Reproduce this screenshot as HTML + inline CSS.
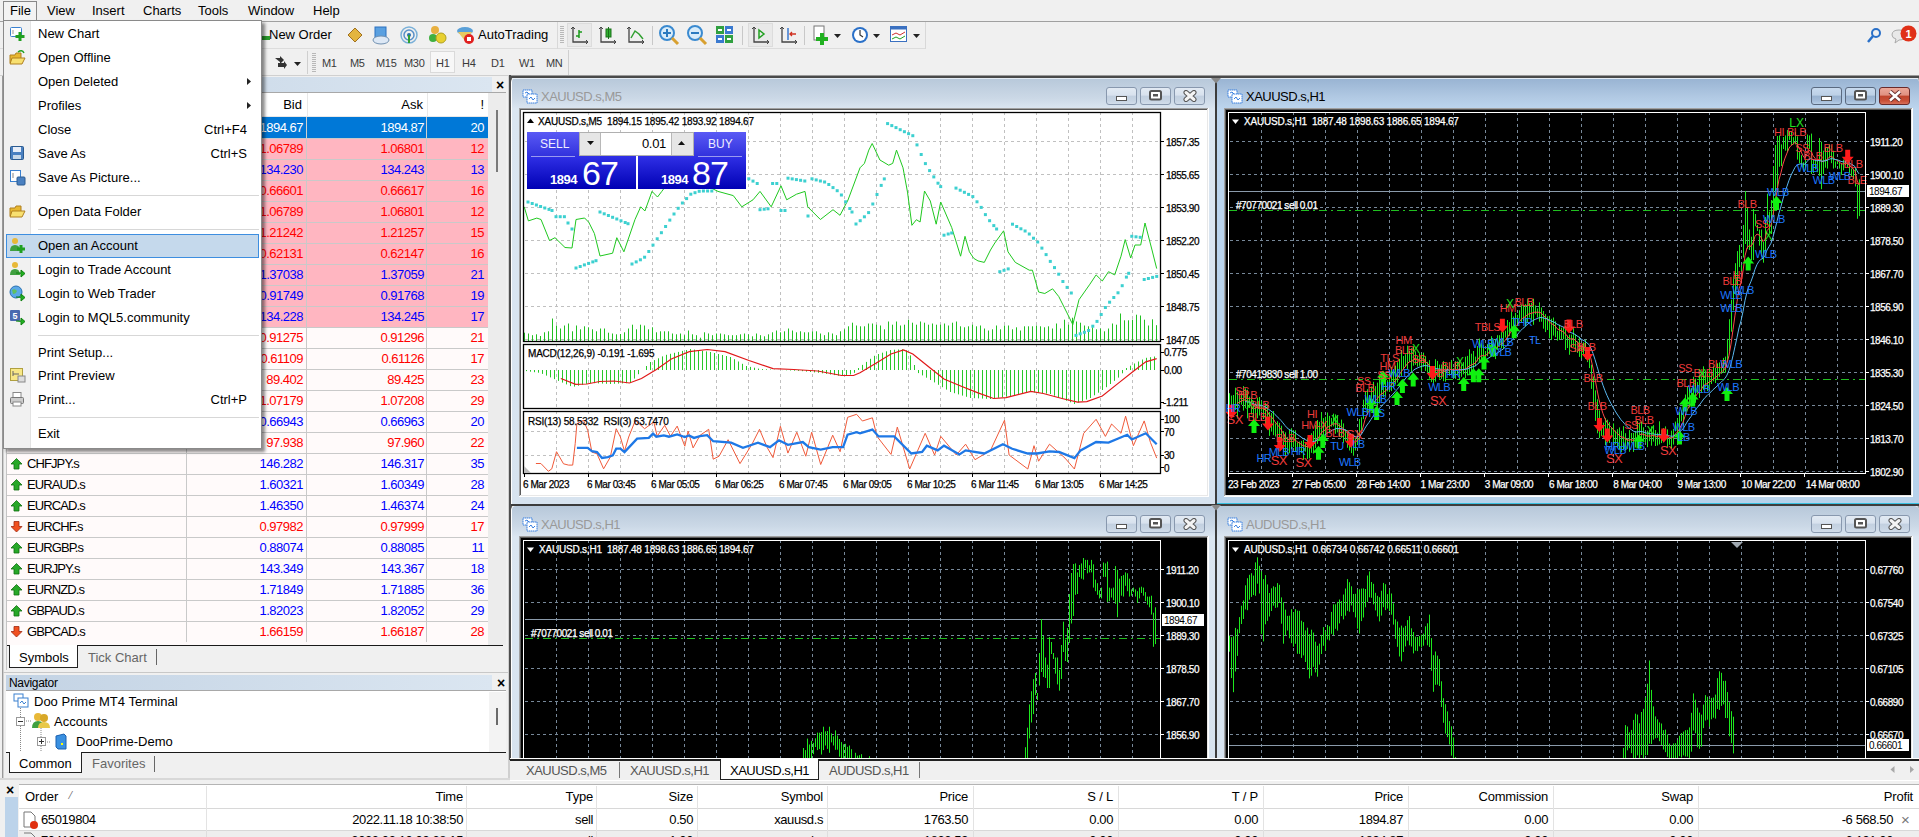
<!DOCTYPE html>
<html><head><meta charset="utf-8">
<style>
*{box-sizing:border-box}
body{margin:0;width:1919px;height:837px;position:relative;overflow:hidden;background:#f0f0f0;font-family:"Liberation Sans",sans-serif;font-size:13px;color:#000}
.a{position:absolute}
.t{position:absolute;white-space:nowrap;line-height:1}
svg{position:absolute;overflow:hidden}
.mw{letter-spacing:-0.5px}
.sy{letter-spacing:-0.9px}
.ct{font-size:11px;letter-spacing:-0.3px}
</style></head><body>
<div class="a" style="left:0px;top:0px;width:1919px;height:22px;background:#f0f0f0"></div>
<div class="a" style="left:0px;top:21px;width:1919px;height:1px;background:#a0a0a0"></div>
<div class="a" style="left:0px;top:22px;width:1919px;height:1px;background:#fff"></div>
<div class="a" style="left:3px;top:1px;width:34px;height:21px;border:1px solid #888;border-bottom:none;background:#f3f3f3"></div>
<div class="t" style="left:10px;top:4px;">File</div>
<div class="t" style="left:47px;top:4px;">View</div>
<div class="t" style="left:92px;top:4px;">Insert</div>
<div class="t" style="left:143px;top:4px;">Charts</div>
<div class="t" style="left:198px;top:4px;">Tools</div>
<div class="t" style="left:248px;top:4px;">Window</div>
<div class="t" style="left:313px;top:4px;">Help</div>
<div class="a" style="left:0px;top:22px;width:1919px;height:54px;background:#f0f0f0"></div>
<div class="a" style="left:0px;top:48px;width:926px;height:1px;background:#dcdcdc"></div>
<div class="a" style="left:0px;top:75px;width:1919px;height:1px;background:#d0d0d0"></div>
<div class="t" style="left:269px;top:28px;">New Order</div>
<div class="t" style="left:478px;top:28px;">AutoTrading</div>
<svg style="left:262px;top:27px;" width="10" height="14" viewBox="0 0 10 14"><rect x="0" y="9" width="8" height="4" fill="#2a9a2a"/></svg>
<svg style="left:346px;top:26px;" width="18" height="18" viewBox="0 0 18 18"><path d="M2 9 L9 2 L16 9 L9 16 Z" fill="#e3b53f" stroke="#a07020" stroke-width="1"/></svg>
<svg style="left:372px;top:25px;" width="18" height="20" viewBox="0 0 18 20"><rect x="3" y="2" width="11" height="11" fill="#5aa0e0" stroke="#2a70c0"/><ellipse cx="9" cy="15" rx="8" ry="4" fill="#dde8f5" stroke="#7090b0"/></svg>
<svg style="left:400px;top:26px;" width="18" height="18" viewBox="0 0 18 18"><circle cx="9" cy="9" r="8" fill="none" stroke="#7ab0d8" stroke-width="1.5"/><circle cx="9" cy="9" r="5" fill="none" stroke="#5a90c8" stroke-width="1.5"/><circle cx="9" cy="9" r="2" fill="#2a70b0"/><path d="M9 9 L9 17" stroke="#30a030" stroke-width="2"/></svg>
<svg style="left:428px;top:25px;" width="20" height="20" viewBox="0 0 20 20"><circle cx="7" cy="5" r="4" fill="#e8b040"/><circle cx="5" cy="13" r="4" fill="#40b040"/><circle cx="13" cy="13" r="5" fill="#e8d030" stroke="#b0a020"/></svg>
<svg style="left:456px;top:25px;" width="20" height="20" viewBox="0 0 20 20"><ellipse cx="9" cy="6" rx="8" ry="4" fill="#5aa0d8"/><path d="M2 7 L9 16 L16 7 Z" fill="#e8c860"/><circle cx="13" cy="14" r="5" fill="#e02020"/><rect x="11" y="12" width="4" height="4" fill="#fff"/></svg>
<div class="a" style="left:557px;top:22px;width:369px;height:27px;border-left:1px solid #d8d8d8;border-right:1px solid #d8d8d8"></div>
<svg style="left:560px;top:26px;" width="5" height="18" viewBox="0 0 5 18"><rect x="0" y="0" width="4" height="1" fill="#b8b8b8"/><rect x="0" y="2" width="4" height="1" fill="#b8b8b8"/><rect x="0" y="4" width="4" height="1" fill="#b8b8b8"/><rect x="0" y="6" width="4" height="1" fill="#b8b8b8"/><rect x="0" y="8" width="4" height="1" fill="#b8b8b8"/><rect x="0" y="10" width="4" height="1" fill="#b8b8b8"/><rect x="0" y="12" width="4" height="1" fill="#b8b8b8"/><rect x="0" y="14" width="4" height="1" fill="#b8b8b8"/><rect x="0" y="16" width="4" height="1" fill="#b8b8b8"/></svg>
<div class="a" style="left:567px;top:23px;width:25px;height:24px;background:#e9e9e9;border:1px solid #dcdcdc"></div>
<div class="a" style="left:748px;top:23px;width:25px;height:24px;background:#e9e9e9;border:1px solid #dcdcdc"></div>
<svg style="left:570px;top:25px;" width="20" height="20" viewBox="0 0 20 20"><path d="M3 2 L3 17 L18 17" stroke="#444" stroke-width="1.3" fill="none"/><path d="M1 4 L3 2 L5 4 M16 15 L18 17 L16 19" stroke="#444" stroke-width="1" fill="none"/><path d="M9 13 L9 5 M9 7 L12 7 M6 11 L9 11" stroke="#1a9a1a" stroke-width="1.5" fill="none"/></svg>
<svg style="left:598px;top:25px;" width="20" height="20" viewBox="0 0 20 20"><path d="M3 2 L3 17 L18 17" stroke="#444" stroke-width="1.3" fill="none"/><path d="M1 4 L3 2 L5 4 M16 15 L18 17 L16 19" stroke="#444" stroke-width="1" fill="none"/><rect x="8" y="4" width="5" height="8" fill="#30b030" stroke="#1a701a"/><path d="M10.5 2 L10.5 14" stroke="#1a701a"/></svg>
<svg style="left:626px;top:25px;" width="20" height="20" viewBox="0 0 20 20"><path d="M3 2 L3 17 L18 17" stroke="#444" stroke-width="1.3" fill="none"/><path d="M1 4 L3 2 L5 4 M16 15 L18 17 L16 19" stroke="#444" stroke-width="1" fill="none"/><path d="M5 13 L9 6 L13 9 L17 14" stroke="#30a030" stroke-width="1.5" fill="none"/></svg>
<div class="a" style="left:652px;top:26px;width:1px;height:19px;background:#c8c8c8"></div>
<svg style="left:658px;top:24px;" width="22" height="22" viewBox="0 0 22 22"><circle cx="9" cy="9" r="7" fill="#d8ecfa" stroke="#3a8ad0" stroke-width="2"/><path d="M9 5 L9 13 M5 9 L13 9" stroke="#2a7ac0" stroke-width="2"/><path d="M14 14 L20 20" stroke="#d8a030" stroke-width="3"/></svg>
<svg style="left:686px;top:24px;" width="22" height="22" viewBox="0 0 22 22"><circle cx="9" cy="9" r="7" fill="#d8ecfa" stroke="#3a8ad0" stroke-width="2"/><path d="M5 9 L13 9" stroke="#2a7ac0" stroke-width="2"/><path d="M14 14 L20 20" stroke="#d8a030" stroke-width="3"/></svg>
<svg style="left:716px;top:26px;" width="18" height="18" viewBox="0 0 18 18"><rect x="0" y="0" width="8" height="8" fill="#30a040"/><rect x="9" y="0" width="8" height="8" fill="#3a7ad0"/><rect x="0" y="9" width="8" height="8" fill="#3a7ad0"/><rect x="9" y="9" width="8" height="8" fill="#30a040"/><rect x="2" y="3" width="4" height="2" fill="#fff"/><rect x="11" y="3" width="4" height="2" fill="#fff"/><rect x="2" y="12" width="4" height="2" fill="#fff"/><rect x="11" y="12" width="4" height="2" fill="#fff"/></svg>
<div class="a" style="left:742px;top:26px;width:1px;height:19px;background:#c8c8c8"></div>
<svg style="left:751px;top:25px;" width="20" height="20" viewBox="0 0 20 20"><path d="M3 2 L3 17 L18 17" stroke="#444" stroke-width="1.3" fill="none"/><path d="M1 4 L3 2 L5 4 M16 15 L18 17 L16 19" stroke="#444" stroke-width="1" fill="none"/><path d="M8 5 L13 9 L8 13 Z" fill="none" stroke="#20a020" stroke-width="1.5"/></svg>
<svg style="left:779px;top:25px;" width="20" height="20" viewBox="0 0 20 20"><path d="M3 2 L3 17 L18 17" stroke="#444" stroke-width="1.3" fill="none"/><path d="M1 4 L3 2 L5 4 M16 15 L18 17 L16 19" stroke="#444" stroke-width="1" fill="none"/><path d="M9 3 L9 15" stroke="#3a7ad0" stroke-width="1.5"/><path d="M17 9 L11 9 M13 7 L11 9 L13 11" stroke="#d03020" stroke-width="1.3" fill="none"/></svg>
<div class="a" style="left:804px;top:26px;width:1px;height:19px;background:#c8c8c8"></div>
<svg style="left:812px;top:25px;" width="20" height="22" viewBox="0 0 20 22"><rect x="2" y="1" width="10" height="14" fill="#fff" stroke="#777"/><path d="M10 8 L10 20 M4 14 L16 14" stroke="#20b020" stroke-width="4"/></svg>
<svg style="left:834px;top:34px;" width="8" height="5" viewBox="0 0 8 5"><path d="M0 0 L7 0 L3.5 4 Z" fill="#222"/></svg>
<svg style="left:851px;top:26px;" width="18" height="18" viewBox="0 0 18 18"><circle cx="9" cy="9" r="8" fill="#2a70c8"/><circle cx="9" cy="9" r="6" fill="#fff"/><path d="M9 4 L9 9 L12 11" stroke="#333" stroke-width="1.2" fill="none"/></svg>
<svg style="left:873px;top:34px;" width="8" height="5" viewBox="0 0 8 5"><path d="M0 0 L7 0 L3.5 4 Z" fill="#222"/></svg>
<svg style="left:890px;top:26px;" width="18" height="17" viewBox="0 0 18 17"><rect x="0.5" y="0.5" width="16" height="15" fill="#fff" stroke="#3a70c0"/><rect x="0.5" y="0.5" width="16" height="3" fill="#3a70c0"/><path d="M2 9 L6 7 L10 9 L15 6" stroke="#d03030" fill="none"/><path d="M2 13 L6 11 L10 13 L15 10" stroke="#20a020" fill="none"/></svg>
<svg style="left:913px;top:34px;" width="8" height="5" viewBox="0 0 8 5"><path d="M0 0 L7 0 L3.5 4 Z" fill="#222"/></svg>
<div class="a" style="left:307px;top:51px;width:1px;height:23px;background:#cfcfcf"></div>
<svg style="left:312px;top:53px;" width="5" height="20" viewBox="0 0 5 20"><rect x="0" y="0" width="4" height="1" fill="#b8b8b8"/><rect x="0" y="2" width="4" height="1" fill="#b8b8b8"/><rect x="0" y="4" width="4" height="1" fill="#b8b8b8"/><rect x="0" y="6" width="4" height="1" fill="#b8b8b8"/><rect x="0" y="8" width="4" height="1" fill="#b8b8b8"/><rect x="0" y="10" width="4" height="1" fill="#b8b8b8"/><rect x="0" y="12" width="4" height="1" fill="#b8b8b8"/><rect x="0" y="14" width="4" height="1" fill="#b8b8b8"/><rect x="0" y="16" width="4" height="1" fill="#b8b8b8"/><rect x="0" y="18" width="4" height="1" fill="#b8b8b8"/></svg>
<div class="a" style="left:568px;top:50px;width:1px;height:25px;background:#cfcfcf"></div>
<svg style="left:273px;top:55px;" width="18" height="16" viewBox="0 0 18 16"><path d="M2 3 L7 3 L7 1 L11 5 L7 9 L7 7 Z" fill="#333"/><path d="M8 10 L14 10 L14 8 L17 12 L14 16 L14 14 L8 14Z" fill="#333" transform="translate(-3,-2)"/></svg>
<svg style="left:294px;top:62px;" width="8" height="5" viewBox="0 0 8 5"><path d="M0 0 L7 0 L3.5 4 Z" fill="#222"/></svg>
<div class="a" style="left:430px;top:51px;width:25px;height:22px;background:#f7f7f7;border:1px solid #dadada"></div>
<div class="t" style="left:322px;top:58px;font-size:11px;color:#3a3a3a;letter-spacing:-0.3px">M1</div>
<div class="t" style="left:350px;top:58px;font-size:11px;color:#3a3a3a;letter-spacing:-0.3px">M5</div>
<div class="t" style="left:376px;top:58px;font-size:11px;color:#3a3a3a;letter-spacing:-0.3px">M15</div>
<div class="t" style="left:404px;top:58px;font-size:11px;color:#3a3a3a;letter-spacing:-0.3px">M30</div>
<div class="t" style="left:436px;top:58px;font-size:11px;color:#3a3a3a;letter-spacing:-0.3px">H1</div>
<div class="t" style="left:462px;top:58px;font-size:11px;color:#3a3a3a;letter-spacing:-0.3px">H4</div>
<div class="t" style="left:491px;top:58px;font-size:11px;color:#3a3a3a;letter-spacing:-0.3px">D1</div>
<div class="t" style="left:519px;top:58px;font-size:11px;color:#3a3a3a;letter-spacing:-0.3px">W1</div>
<div class="t" style="left:546px;top:58px;font-size:11px;color:#3a3a3a;letter-spacing:-0.3px">MN</div>
<svg style="left:1867px;top:27px;" width="16" height="16" viewBox="0 0 16 16"><circle cx="9" cy="6" r="4" fill="none" stroke="#2a70c8" stroke-width="2"/><path d="M6 9 L1 15" stroke="#2a70c8" stroke-width="2.5"/></svg>
<svg style="left:1890px;top:25px;" width="29" height="22" viewBox="0 0 29 22"><path d="M2 10 Q2 5 9 5 Q16 5 16 10 Q16 15 9 15 L5 18 L6 14 Q2 13 2 10Z" fill="#e8e8e8" stroke="#aaa"/><circle cx="18.5" cy="8.5" r="8" fill="#e03018"/><text x="18.5" y="12.5" font-size="11" fill="#fff" text-anchor="middle" font-family="Liberation Sans" font-weight="bold">1</text></svg>
<div class="a" style="left:0px;top:76px;width:510px;height:704px;background:#f0f0f0"></div>
<div class="a" style="left:508px;top:76px;width:2px;height:704px;background:#cfcfcf"></div>
<div class="a" style="left:2px;top:76px;width:1px;height:704px;background:#9a9a9a"></div>
<div class="a" style="left:3px;top:76px;width:1px;height:704px;background:#cfcfcf"></div>
<div class="a" style="left:6px;top:77px;width:486px;height:15px;background:linear-gradient(90deg,#c3d3e4,#dbe6f1)"></div>
<div class="a" style="left:6px;top:92px;width:500px;height:1px;background:#a8a8a8"></div>
<div class="t" style="left:496px;top:78px;font-size:14px;font-weight:bold">&#215;</div>
<div class="a" style="left:6px;top:93px;width:482px;height:24px;background:#fff"></div>
<div class="a" style="left:6px;top:116px;width:482px;height:1px;background:#e8e8e8"></div>
<div class="t" style="right:1617px;top:98px;">Bid</div>
<div class="t" style="right:1496px;top:98px;">Ask</div>
<div class="t" style="right:1435px;top:98px;">!</div>
<div class="a" style="left:186px;top:93px;width:1px;height:23px;background:#e8e8e8"></div>
<div class="a" style="left:307px;top:93px;width:1px;height:23px;background:#e8e8e8"></div>
<div class="a" style="left:427px;top:93px;width:1px;height:23px;background:#e8e8e8"></div>
<div class="a" style="left:6px;top:117px;width:482px;height:528px;background:#fffafa"></div>
<div class="a" style="left:6px;top:117px;width:482px;height:21px;background:#0078d7"></div>
<div class="a" style="left:306px;top:117px;width:1px;height:21px;background:#d0d0d0"></div>
<div class="a" style="left:426px;top:117px;width:1px;height:21px;background:#d0d0d0"></div>
<div class="t" style="right:1616px;top:121px;color:#fff;font-size:13px;letter-spacing:-0.5px">1894.67</div>
<div class="t" style="right:1495px;top:121px;color:#fff;font-size:13px;letter-spacing:-0.5px">1894.87</div>
<div class="t" style="right:1435px;top:121px;color:#fff;font-size:13px;letter-spacing:-0.5px">20</div>
<div class="t" style="left:27px;top:121px;letter-spacing:-0.9px">XAUUSD.s</div>
<svg style="left:11px;top:122px;" width="12" height="12" viewBox="0 0 12 12"><path d="M5.5 11 L11 5.5 L8 5.5 L8 0.5 L3 0.5 L3 5.5 L0 5.5 Z" fill="#f05020" stroke="#a02810" stroke-width="0.8"/></svg>
<div class="a" style="left:6px;top:138px;width:482px;height:21px;background:#ffb6c1"></div>
<div class="a" style="left:6px;top:138px;width:482px;height:1px;background:#c9c9c9"></div>
<div class="a" style="left:186px;top:138px;width:1px;height:21px;background:#c9c9c9"></div>
<div class="a" style="left:306px;top:138px;width:1px;height:21px;background:#c9c9c9"></div>
<div class="a" style="left:426px;top:138px;width:1px;height:21px;background:#c9c9c9"></div>
<div class="t" style="right:1616px;top:142px;color:#ff0000;font-size:13px;letter-spacing:-0.5px">1.06789</div>
<div class="t" style="right:1495px;top:142px;color:#ff0000;font-size:13px;letter-spacing:-0.5px">1.06801</div>
<div class="t" style="right:1435px;top:142px;color:#ff0000;font-size:13px;letter-spacing:-0.5px">12</div>
<div class="t" style="left:27px;top:142px;letter-spacing:-0.9px">EURUSD.s</div>
<svg style="left:11px;top:143px;" width="12" height="12" viewBox="0 0 12 12"><path d="M5.5 11 L11 5.5 L8 5.5 L8 0.5 L3 0.5 L3 5.5 L0 5.5 Z" fill="#f05020" stroke="#a02810" stroke-width="0.8"/></svg>
<div class="a" style="left:6px;top:159px;width:482px;height:21px;background:#ffb6c1"></div>
<div class="a" style="left:6px;top:159px;width:482px;height:1px;background:#c9c9c9"></div>
<div class="a" style="left:186px;top:159px;width:1px;height:21px;background:#c9c9c9"></div>
<div class="a" style="left:306px;top:159px;width:1px;height:21px;background:#c9c9c9"></div>
<div class="a" style="left:426px;top:159px;width:1px;height:21px;background:#c9c9c9"></div>
<div class="t" style="right:1616px;top:163px;color:#0000ff;font-size:13px;letter-spacing:-0.5px">134.230</div>
<div class="t" style="right:1495px;top:163px;color:#0000ff;font-size:13px;letter-spacing:-0.5px">134.243</div>
<div class="t" style="right:1435px;top:163px;color:#0000ff;font-size:13px;letter-spacing:-0.5px">13</div>
<div class="t" style="left:27px;top:163px;letter-spacing:-0.9px">USDJPY.s</div>
<svg style="left:11px;top:164px;" width="12" height="12" viewBox="0 0 12 12"><path d="M5.5 0.5 L11 6 L8 6 L8 11 L3 11 L3 6 L0 6 Z" fill="#28a828" stroke="#107010" stroke-width="0.8"/></svg>
<div class="a" style="left:6px;top:180px;width:482px;height:21px;background:#ffb6c1"></div>
<div class="a" style="left:6px;top:180px;width:482px;height:1px;background:#c9c9c9"></div>
<div class="a" style="left:186px;top:180px;width:1px;height:21px;background:#c9c9c9"></div>
<div class="a" style="left:306px;top:180px;width:1px;height:21px;background:#c9c9c9"></div>
<div class="a" style="left:426px;top:180px;width:1px;height:21px;background:#c9c9c9"></div>
<div class="t" style="right:1616px;top:184px;color:#ff0000;font-size:13px;letter-spacing:-0.5px">0.66601</div>
<div class="t" style="right:1495px;top:184px;color:#ff0000;font-size:13px;letter-spacing:-0.5px">0.66617</div>
<div class="t" style="right:1435px;top:184px;color:#ff0000;font-size:13px;letter-spacing:-0.5px">16</div>
<div class="t" style="left:27px;top:184px;letter-spacing:-0.9px">AUDUSD.s</div>
<svg style="left:11px;top:185px;" width="12" height="12" viewBox="0 0 12 12"><path d="M5.5 11 L11 5.5 L8 5.5 L8 0.5 L3 0.5 L3 5.5 L0 5.5 Z" fill="#f05020" stroke="#a02810" stroke-width="0.8"/></svg>
<div class="a" style="left:6px;top:201px;width:482px;height:21px;background:#ffb6c1"></div>
<div class="a" style="left:6px;top:201px;width:482px;height:1px;background:#c9c9c9"></div>
<div class="a" style="left:186px;top:201px;width:1px;height:21px;background:#c9c9c9"></div>
<div class="a" style="left:306px;top:201px;width:1px;height:21px;background:#c9c9c9"></div>
<div class="a" style="left:426px;top:201px;width:1px;height:21px;background:#c9c9c9"></div>
<div class="t" style="right:1616px;top:205px;color:#ff0000;font-size:13px;letter-spacing:-0.5px">1.06789</div>
<div class="t" style="right:1495px;top:205px;color:#ff0000;font-size:13px;letter-spacing:-0.5px">1.06801</div>
<div class="t" style="right:1435px;top:205px;color:#ff0000;font-size:13px;letter-spacing:-0.5px">12</div>
<div class="t" style="left:27px;top:205px;letter-spacing:-0.9px">EURUSD</div>
<svg style="left:11px;top:206px;" width="12" height="12" viewBox="0 0 12 12"><path d="M5.5 11 L11 5.5 L8 5.5 L8 0.5 L3 0.5 L3 5.5 L0 5.5 Z" fill="#f05020" stroke="#a02810" stroke-width="0.8"/></svg>
<div class="a" style="left:6px;top:222px;width:482px;height:21px;background:#ffb6c1"></div>
<div class="a" style="left:6px;top:222px;width:482px;height:1px;background:#c9c9c9"></div>
<div class="a" style="left:186px;top:222px;width:1px;height:21px;background:#c9c9c9"></div>
<div class="a" style="left:306px;top:222px;width:1px;height:21px;background:#c9c9c9"></div>
<div class="a" style="left:426px;top:222px;width:1px;height:21px;background:#c9c9c9"></div>
<div class="t" style="right:1616px;top:226px;color:#ff0000;font-size:13px;letter-spacing:-0.5px">1.21242</div>
<div class="t" style="right:1495px;top:226px;color:#ff0000;font-size:13px;letter-spacing:-0.5px">1.21257</div>
<div class="t" style="right:1435px;top:226px;color:#ff0000;font-size:13px;letter-spacing:-0.5px">15</div>
<div class="t" style="left:27px;top:226px;letter-spacing:-0.9px">GBPUSD.s</div>
<svg style="left:11px;top:227px;" width="12" height="12" viewBox="0 0 12 12"><path d="M5.5 11 L11 5.5 L8 5.5 L8 0.5 L3 0.5 L3 5.5 L0 5.5 Z" fill="#f05020" stroke="#a02810" stroke-width="0.8"/></svg>
<div class="a" style="left:6px;top:243px;width:482px;height:21px;background:#ffb6c1"></div>
<div class="a" style="left:6px;top:243px;width:482px;height:1px;background:#c9c9c9"></div>
<div class="a" style="left:186px;top:243px;width:1px;height:21px;background:#c9c9c9"></div>
<div class="a" style="left:306px;top:243px;width:1px;height:21px;background:#c9c9c9"></div>
<div class="a" style="left:426px;top:243px;width:1px;height:21px;background:#c9c9c9"></div>
<div class="t" style="right:1616px;top:247px;color:#ff0000;font-size:13px;letter-spacing:-0.5px">0.62131</div>
<div class="t" style="right:1495px;top:247px;color:#ff0000;font-size:13px;letter-spacing:-0.5px">0.62147</div>
<div class="t" style="right:1435px;top:247px;color:#ff0000;font-size:13px;letter-spacing:-0.5px">16</div>
<div class="t" style="left:27px;top:247px;letter-spacing:-0.9px">NZDUSD.s</div>
<svg style="left:11px;top:248px;" width="12" height="12" viewBox="0 0 12 12"><path d="M5.5 11 L11 5.5 L8 5.5 L8 0.5 L3 0.5 L3 5.5 L0 5.5 Z" fill="#f05020" stroke="#a02810" stroke-width="0.8"/></svg>
<div class="a" style="left:6px;top:264px;width:482px;height:21px;background:#ffb6c1"></div>
<div class="a" style="left:6px;top:264px;width:482px;height:1px;background:#c9c9c9"></div>
<div class="a" style="left:186px;top:264px;width:1px;height:21px;background:#c9c9c9"></div>
<div class="a" style="left:306px;top:264px;width:1px;height:21px;background:#c9c9c9"></div>
<div class="a" style="left:426px;top:264px;width:1px;height:21px;background:#c9c9c9"></div>
<div class="t" style="right:1616px;top:268px;color:#0000ff;font-size:13px;letter-spacing:-0.5px">1.37038</div>
<div class="t" style="right:1495px;top:268px;color:#0000ff;font-size:13px;letter-spacing:-0.5px">1.37059</div>
<div class="t" style="right:1435px;top:268px;color:#0000ff;font-size:13px;letter-spacing:-0.5px">21</div>
<div class="t" style="left:27px;top:268px;letter-spacing:-0.9px">USDCAD.s</div>
<svg style="left:11px;top:269px;" width="12" height="12" viewBox="0 0 12 12"><path d="M5.5 0.5 L11 6 L8 6 L8 11 L3 11 L3 6 L0 6 Z" fill="#28a828" stroke="#107010" stroke-width="0.8"/></svg>
<div class="a" style="left:6px;top:285px;width:482px;height:21px;background:#ffb6c1"></div>
<div class="a" style="left:6px;top:285px;width:482px;height:1px;background:#c9c9c9"></div>
<div class="a" style="left:186px;top:285px;width:1px;height:21px;background:#c9c9c9"></div>
<div class="a" style="left:306px;top:285px;width:1px;height:21px;background:#c9c9c9"></div>
<div class="a" style="left:426px;top:285px;width:1px;height:21px;background:#c9c9c9"></div>
<div class="t" style="right:1616px;top:289px;color:#0000ff;font-size:13px;letter-spacing:-0.5px">0.91749</div>
<div class="t" style="right:1495px;top:289px;color:#0000ff;font-size:13px;letter-spacing:-0.5px">0.91768</div>
<div class="t" style="right:1435px;top:289px;color:#0000ff;font-size:13px;letter-spacing:-0.5px">19</div>
<div class="t" style="left:27px;top:289px;letter-spacing:-0.9px">USDCHF.s</div>
<svg style="left:11px;top:290px;" width="12" height="12" viewBox="0 0 12 12"><path d="M5.5 0.5 L11 6 L8 6 L8 11 L3 11 L3 6 L0 6 Z" fill="#28a828" stroke="#107010" stroke-width="0.8"/></svg>
<div class="a" style="left:6px;top:306px;width:482px;height:21px;background:#ffb6c1"></div>
<div class="a" style="left:6px;top:306px;width:482px;height:1px;background:#c9c9c9"></div>
<div class="a" style="left:186px;top:306px;width:1px;height:21px;background:#c9c9c9"></div>
<div class="a" style="left:306px;top:306px;width:1px;height:21px;background:#c9c9c9"></div>
<div class="a" style="left:426px;top:306px;width:1px;height:21px;background:#c9c9c9"></div>
<div class="t" style="right:1616px;top:310px;color:#0000ff;font-size:13px;letter-spacing:-0.5px">134.228</div>
<div class="t" style="right:1495px;top:310px;color:#0000ff;font-size:13px;letter-spacing:-0.5px">134.245</div>
<div class="t" style="right:1435px;top:310px;color:#0000ff;font-size:13px;letter-spacing:-0.5px">17</div>
<div class="t" style="left:27px;top:310px;letter-spacing:-0.9px">USDJPY</div>
<svg style="left:11px;top:311px;" width="12" height="12" viewBox="0 0 12 12"><path d="M5.5 0.5 L11 6 L8 6 L8 11 L3 11 L3 6 L0 6 Z" fill="#28a828" stroke="#107010" stroke-width="0.8"/></svg>
<div class="a" style="left:6px;top:327px;width:482px;height:21px;background:#fffafa"></div>
<div class="a" style="left:6px;top:327px;width:482px;height:1px;background:#c9c9c9"></div>
<div class="a" style="left:186px;top:327px;width:1px;height:21px;background:#c9c9c9"></div>
<div class="a" style="left:306px;top:327px;width:1px;height:21px;background:#c9c9c9"></div>
<div class="a" style="left:426px;top:327px;width:1px;height:21px;background:#c9c9c9"></div>
<div class="t" style="right:1616px;top:331px;color:#ff0000;font-size:13px;letter-spacing:-0.5px">0.91275</div>
<div class="t" style="right:1495px;top:331px;color:#ff0000;font-size:13px;letter-spacing:-0.5px">0.91296</div>
<div class="t" style="right:1435px;top:331px;color:#ff0000;font-size:13px;letter-spacing:-0.5px">21</div>
<div class="t" style="left:27px;top:331px;letter-spacing:-0.9px">AUDCAD.s</div>
<svg style="left:11px;top:332px;" width="12" height="12" viewBox="0 0 12 12"><path d="M5.5 11 L11 5.5 L8 5.5 L8 0.5 L3 0.5 L3 5.5 L0 5.5 Z" fill="#f05020" stroke="#a02810" stroke-width="0.8"/></svg>
<div class="a" style="left:6px;top:348px;width:482px;height:21px;background:#fffafa"></div>
<div class="a" style="left:6px;top:348px;width:482px;height:1px;background:#c9c9c9"></div>
<div class="a" style="left:186px;top:348px;width:1px;height:21px;background:#c9c9c9"></div>
<div class="a" style="left:306px;top:348px;width:1px;height:21px;background:#c9c9c9"></div>
<div class="a" style="left:426px;top:348px;width:1px;height:21px;background:#c9c9c9"></div>
<div class="t" style="right:1616px;top:352px;color:#ff0000;font-size:13px;letter-spacing:-0.5px">0.61109</div>
<div class="t" style="right:1495px;top:352px;color:#ff0000;font-size:13px;letter-spacing:-0.5px">0.61126</div>
<div class="t" style="right:1435px;top:352px;color:#ff0000;font-size:13px;letter-spacing:-0.5px">17</div>
<div class="t" style="left:27px;top:352px;letter-spacing:-0.9px">AUDCHF.s</div>
<svg style="left:11px;top:353px;" width="12" height="12" viewBox="0 0 12 12"><path d="M5.5 11 L11 5.5 L8 5.5 L8 0.5 L3 0.5 L3 5.5 L0 5.5 Z" fill="#f05020" stroke="#a02810" stroke-width="0.8"/></svg>
<div class="a" style="left:6px;top:369px;width:482px;height:21px;background:#fffafa"></div>
<div class="a" style="left:6px;top:369px;width:482px;height:1px;background:#c9c9c9"></div>
<div class="a" style="left:186px;top:369px;width:1px;height:21px;background:#c9c9c9"></div>
<div class="a" style="left:306px;top:369px;width:1px;height:21px;background:#c9c9c9"></div>
<div class="a" style="left:426px;top:369px;width:1px;height:21px;background:#c9c9c9"></div>
<div class="t" style="right:1616px;top:373px;color:#ff0000;font-size:13px;letter-spacing:-0.5px">89.402</div>
<div class="t" style="right:1495px;top:373px;color:#ff0000;font-size:13px;letter-spacing:-0.5px">89.425</div>
<div class="t" style="right:1435px;top:373px;color:#ff0000;font-size:13px;letter-spacing:-0.5px">23</div>
<div class="t" style="left:27px;top:373px;letter-spacing:-0.9px">AUDJPY.s</div>
<svg style="left:11px;top:374px;" width="12" height="12" viewBox="0 0 12 12"><path d="M5.5 11 L11 5.5 L8 5.5 L8 0.5 L3 0.5 L3 5.5 L0 5.5 Z" fill="#f05020" stroke="#a02810" stroke-width="0.8"/></svg>
<div class="a" style="left:6px;top:390px;width:482px;height:21px;background:#fffafa"></div>
<div class="a" style="left:6px;top:390px;width:482px;height:1px;background:#c9c9c9"></div>
<div class="a" style="left:186px;top:390px;width:1px;height:21px;background:#c9c9c9"></div>
<div class="a" style="left:306px;top:390px;width:1px;height:21px;background:#c9c9c9"></div>
<div class="a" style="left:426px;top:390px;width:1px;height:21px;background:#c9c9c9"></div>
<div class="t" style="right:1616px;top:394px;color:#ff0000;font-size:13px;letter-spacing:-0.5px">1.07179</div>
<div class="t" style="right:1495px;top:394px;color:#ff0000;font-size:13px;letter-spacing:-0.5px">1.07208</div>
<div class="t" style="right:1435px;top:394px;color:#ff0000;font-size:13px;letter-spacing:-0.5px">29</div>
<div class="t" style="left:27px;top:394px;letter-spacing:-0.9px">AUDNZD.s</div>
<svg style="left:11px;top:395px;" width="12" height="12" viewBox="0 0 12 12"><path d="M5.5 11 L11 5.5 L8 5.5 L8 0.5 L3 0.5 L3 5.5 L0 5.5 Z" fill="#f05020" stroke="#a02810" stroke-width="0.8"/></svg>
<div class="a" style="left:6px;top:411px;width:482px;height:21px;background:#fffafa"></div>
<div class="a" style="left:6px;top:411px;width:482px;height:1px;background:#c9c9c9"></div>
<div class="a" style="left:186px;top:411px;width:1px;height:21px;background:#c9c9c9"></div>
<div class="a" style="left:306px;top:411px;width:1px;height:21px;background:#c9c9c9"></div>
<div class="a" style="left:426px;top:411px;width:1px;height:21px;background:#c9c9c9"></div>
<div class="t" style="right:1616px;top:415px;color:#0000ff;font-size:13px;letter-spacing:-0.5px">0.66943</div>
<div class="t" style="right:1495px;top:415px;color:#0000ff;font-size:13px;letter-spacing:-0.5px">0.66963</div>
<div class="t" style="right:1435px;top:415px;color:#0000ff;font-size:13px;letter-spacing:-0.5px">20</div>
<div class="t" style="left:27px;top:415px;letter-spacing:-0.9px">CADCHF.s</div>
<svg style="left:11px;top:416px;" width="12" height="12" viewBox="0 0 12 12"><path d="M5.5 0.5 L11 6 L8 6 L8 11 L3 11 L3 6 L0 6 Z" fill="#28a828" stroke="#107010" stroke-width="0.8"/></svg>
<div class="a" style="left:6px;top:432px;width:482px;height:21px;background:#fffafa"></div>
<div class="a" style="left:6px;top:432px;width:482px;height:1px;background:#c9c9c9"></div>
<div class="a" style="left:186px;top:432px;width:1px;height:21px;background:#c9c9c9"></div>
<div class="a" style="left:306px;top:432px;width:1px;height:21px;background:#c9c9c9"></div>
<div class="a" style="left:426px;top:432px;width:1px;height:21px;background:#c9c9c9"></div>
<div class="t" style="right:1616px;top:436px;color:#ff0000;font-size:13px;letter-spacing:-0.5px">97.938</div>
<div class="t" style="right:1495px;top:436px;color:#ff0000;font-size:13px;letter-spacing:-0.5px">97.960</div>
<div class="t" style="right:1435px;top:436px;color:#ff0000;font-size:13px;letter-spacing:-0.5px">22</div>
<div class="t" style="left:27px;top:436px;letter-spacing:-0.9px">CADJPY.s</div>
<svg style="left:11px;top:437px;" width="12" height="12" viewBox="0 0 12 12"><path d="M5.5 11 L11 5.5 L8 5.5 L8 0.5 L3 0.5 L3 5.5 L0 5.5 Z" fill="#f05020" stroke="#a02810" stroke-width="0.8"/></svg>
<div class="a" style="left:6px;top:453px;width:482px;height:21px;background:#fffafa"></div>
<div class="a" style="left:6px;top:453px;width:482px;height:1px;background:#c9c9c9"></div>
<div class="a" style="left:186px;top:453px;width:1px;height:21px;background:#c9c9c9"></div>
<div class="a" style="left:306px;top:453px;width:1px;height:21px;background:#c9c9c9"></div>
<div class="a" style="left:426px;top:453px;width:1px;height:21px;background:#c9c9c9"></div>
<div class="t" style="right:1616px;top:457px;color:#0000ff;font-size:13px;letter-spacing:-0.5px">146.282</div>
<div class="t" style="right:1495px;top:457px;color:#0000ff;font-size:13px;letter-spacing:-0.5px">146.317</div>
<div class="t" style="right:1435px;top:457px;color:#0000ff;font-size:13px;letter-spacing:-0.5px">35</div>
<div class="t" style="left:27px;top:457px;letter-spacing:-0.9px">CHFJPY.s</div>
<svg style="left:11px;top:458px;" width="12" height="12" viewBox="0 0 12 12"><path d="M5.5 0.5 L11 6 L8 6 L8 11 L3 11 L3 6 L0 6 Z" fill="#28a828" stroke="#107010" stroke-width="0.8"/></svg>
<div class="a" style="left:6px;top:474px;width:482px;height:21px;background:#fffafa"></div>
<div class="a" style="left:6px;top:474px;width:482px;height:1px;background:#c9c9c9"></div>
<div class="a" style="left:186px;top:474px;width:1px;height:21px;background:#c9c9c9"></div>
<div class="a" style="left:306px;top:474px;width:1px;height:21px;background:#c9c9c9"></div>
<div class="a" style="left:426px;top:474px;width:1px;height:21px;background:#c9c9c9"></div>
<div class="t" style="right:1616px;top:478px;color:#0000ff;font-size:13px;letter-spacing:-0.5px">1.60321</div>
<div class="t" style="right:1495px;top:478px;color:#0000ff;font-size:13px;letter-spacing:-0.5px">1.60349</div>
<div class="t" style="right:1435px;top:478px;color:#0000ff;font-size:13px;letter-spacing:-0.5px">28</div>
<div class="t" style="left:27px;top:478px;letter-spacing:-0.9px">EURAUD.s</div>
<svg style="left:11px;top:479px;" width="12" height="12" viewBox="0 0 12 12"><path d="M5.5 0.5 L11 6 L8 6 L8 11 L3 11 L3 6 L0 6 Z" fill="#28a828" stroke="#107010" stroke-width="0.8"/></svg>
<div class="a" style="left:6px;top:495px;width:482px;height:21px;background:#fffafa"></div>
<div class="a" style="left:6px;top:495px;width:482px;height:1px;background:#c9c9c9"></div>
<div class="a" style="left:186px;top:495px;width:1px;height:21px;background:#c9c9c9"></div>
<div class="a" style="left:306px;top:495px;width:1px;height:21px;background:#c9c9c9"></div>
<div class="a" style="left:426px;top:495px;width:1px;height:21px;background:#c9c9c9"></div>
<div class="t" style="right:1616px;top:499px;color:#0000ff;font-size:13px;letter-spacing:-0.5px">1.46350</div>
<div class="t" style="right:1495px;top:499px;color:#0000ff;font-size:13px;letter-spacing:-0.5px">1.46374</div>
<div class="t" style="right:1435px;top:499px;color:#0000ff;font-size:13px;letter-spacing:-0.5px">24</div>
<div class="t" style="left:27px;top:499px;letter-spacing:-0.9px">EURCAD.s</div>
<svg style="left:11px;top:500px;" width="12" height="12" viewBox="0 0 12 12"><path d="M5.5 0.5 L11 6 L8 6 L8 11 L3 11 L3 6 L0 6 Z" fill="#28a828" stroke="#107010" stroke-width="0.8"/></svg>
<div class="a" style="left:6px;top:516px;width:482px;height:21px;background:#fffafa"></div>
<div class="a" style="left:6px;top:516px;width:482px;height:1px;background:#c9c9c9"></div>
<div class="a" style="left:186px;top:516px;width:1px;height:21px;background:#c9c9c9"></div>
<div class="a" style="left:306px;top:516px;width:1px;height:21px;background:#c9c9c9"></div>
<div class="a" style="left:426px;top:516px;width:1px;height:21px;background:#c9c9c9"></div>
<div class="t" style="right:1616px;top:520px;color:#ff0000;font-size:13px;letter-spacing:-0.5px">0.97982</div>
<div class="t" style="right:1495px;top:520px;color:#ff0000;font-size:13px;letter-spacing:-0.5px">0.97999</div>
<div class="t" style="right:1435px;top:520px;color:#ff0000;font-size:13px;letter-spacing:-0.5px">17</div>
<div class="t" style="left:27px;top:520px;letter-spacing:-0.9px">EURCHF.s</div>
<svg style="left:11px;top:521px;" width="12" height="12" viewBox="0 0 12 12"><path d="M5.5 11 L11 5.5 L8 5.5 L8 0.5 L3 0.5 L3 5.5 L0 5.5 Z" fill="#f05020" stroke="#a02810" stroke-width="0.8"/></svg>
<div class="a" style="left:6px;top:537px;width:482px;height:21px;background:#fffafa"></div>
<div class="a" style="left:6px;top:537px;width:482px;height:1px;background:#c9c9c9"></div>
<div class="a" style="left:186px;top:537px;width:1px;height:21px;background:#c9c9c9"></div>
<div class="a" style="left:306px;top:537px;width:1px;height:21px;background:#c9c9c9"></div>
<div class="a" style="left:426px;top:537px;width:1px;height:21px;background:#c9c9c9"></div>
<div class="t" style="right:1616px;top:541px;color:#0000ff;font-size:13px;letter-spacing:-0.5px">0.88074</div>
<div class="t" style="right:1495px;top:541px;color:#0000ff;font-size:13px;letter-spacing:-0.5px">0.88085</div>
<div class="t" style="right:1435px;top:541px;color:#0000ff;font-size:13px;letter-spacing:-0.5px">11</div>
<div class="t" style="left:27px;top:541px;letter-spacing:-0.9px">EURGBP.s</div>
<svg style="left:11px;top:542px;" width="12" height="12" viewBox="0 0 12 12"><path d="M5.5 0.5 L11 6 L8 6 L8 11 L3 11 L3 6 L0 6 Z" fill="#28a828" stroke="#107010" stroke-width="0.8"/></svg>
<div class="a" style="left:6px;top:558px;width:482px;height:21px;background:#fffafa"></div>
<div class="a" style="left:6px;top:558px;width:482px;height:1px;background:#c9c9c9"></div>
<div class="a" style="left:186px;top:558px;width:1px;height:21px;background:#c9c9c9"></div>
<div class="a" style="left:306px;top:558px;width:1px;height:21px;background:#c9c9c9"></div>
<div class="a" style="left:426px;top:558px;width:1px;height:21px;background:#c9c9c9"></div>
<div class="t" style="right:1616px;top:562px;color:#0000ff;font-size:13px;letter-spacing:-0.5px">143.349</div>
<div class="t" style="right:1495px;top:562px;color:#0000ff;font-size:13px;letter-spacing:-0.5px">143.367</div>
<div class="t" style="right:1435px;top:562px;color:#0000ff;font-size:13px;letter-spacing:-0.5px">18</div>
<div class="t" style="left:27px;top:562px;letter-spacing:-0.9px">EURJPY.s</div>
<svg style="left:11px;top:563px;" width="12" height="12" viewBox="0 0 12 12"><path d="M5.5 0.5 L11 6 L8 6 L8 11 L3 11 L3 6 L0 6 Z" fill="#28a828" stroke="#107010" stroke-width="0.8"/></svg>
<div class="a" style="left:6px;top:579px;width:482px;height:21px;background:#fffafa"></div>
<div class="a" style="left:6px;top:579px;width:482px;height:1px;background:#c9c9c9"></div>
<div class="a" style="left:186px;top:579px;width:1px;height:21px;background:#c9c9c9"></div>
<div class="a" style="left:306px;top:579px;width:1px;height:21px;background:#c9c9c9"></div>
<div class="a" style="left:426px;top:579px;width:1px;height:21px;background:#c9c9c9"></div>
<div class="t" style="right:1616px;top:583px;color:#0000ff;font-size:13px;letter-spacing:-0.5px">1.71849</div>
<div class="t" style="right:1495px;top:583px;color:#0000ff;font-size:13px;letter-spacing:-0.5px">1.71885</div>
<div class="t" style="right:1435px;top:583px;color:#0000ff;font-size:13px;letter-spacing:-0.5px">36</div>
<div class="t" style="left:27px;top:583px;letter-spacing:-0.9px">EURNZD.s</div>
<svg style="left:11px;top:584px;" width="12" height="12" viewBox="0 0 12 12"><path d="M5.5 0.5 L11 6 L8 6 L8 11 L3 11 L3 6 L0 6 Z" fill="#28a828" stroke="#107010" stroke-width="0.8"/></svg>
<div class="a" style="left:6px;top:600px;width:482px;height:21px;background:#fffafa"></div>
<div class="a" style="left:6px;top:600px;width:482px;height:1px;background:#c9c9c9"></div>
<div class="a" style="left:186px;top:600px;width:1px;height:21px;background:#c9c9c9"></div>
<div class="a" style="left:306px;top:600px;width:1px;height:21px;background:#c9c9c9"></div>
<div class="a" style="left:426px;top:600px;width:1px;height:21px;background:#c9c9c9"></div>
<div class="t" style="right:1616px;top:604px;color:#0000ff;font-size:13px;letter-spacing:-0.5px">1.82023</div>
<div class="t" style="right:1495px;top:604px;color:#0000ff;font-size:13px;letter-spacing:-0.5px">1.82052</div>
<div class="t" style="right:1435px;top:604px;color:#0000ff;font-size:13px;letter-spacing:-0.5px">29</div>
<div class="t" style="left:27px;top:604px;letter-spacing:-0.9px">GBPAUD.s</div>
<svg style="left:11px;top:605px;" width="12" height="12" viewBox="0 0 12 12"><path d="M5.5 0.5 L11 6 L8 6 L8 11 L3 11 L3 6 L0 6 Z" fill="#28a828" stroke="#107010" stroke-width="0.8"/></svg>
<div class="a" style="left:6px;top:621px;width:482px;height:21px;background:#fffafa"></div>
<div class="a" style="left:6px;top:621px;width:482px;height:1px;background:#c9c9c9"></div>
<div class="a" style="left:186px;top:621px;width:1px;height:21px;background:#c9c9c9"></div>
<div class="a" style="left:306px;top:621px;width:1px;height:21px;background:#c9c9c9"></div>
<div class="a" style="left:426px;top:621px;width:1px;height:21px;background:#c9c9c9"></div>
<div class="t" style="right:1616px;top:625px;color:#ff0000;font-size:13px;letter-spacing:-0.5px">1.66159</div>
<div class="t" style="right:1495px;top:625px;color:#ff0000;font-size:13px;letter-spacing:-0.5px">1.66187</div>
<div class="t" style="right:1435px;top:625px;color:#ff0000;font-size:13px;letter-spacing:-0.5px">28</div>
<div class="t" style="left:27px;top:625px;letter-spacing:-0.9px">GBPCAD.s</div>
<svg style="left:11px;top:626px;" width="12" height="12" viewBox="0 0 12 12"><path d="M5.5 11 L11 5.5 L8 5.5 L8 0.5 L3 0.5 L3 5.5 L0 5.5 Z" fill="#f05020" stroke="#a02810" stroke-width="0.8"/></svg>
<div class="a" style="left:488px;top:93px;width:18px;height:552px;background:#ececec"></div>
<div class="a" style="left:496px;top:110px;width:2px;height:62px;background:#7a7a7a"></div>
<div class="a" style="left:6px;top:645px;width:497px;height:1px;background:#1a1a1a"></div>
<div class="a" style="left:9px;top:645px;width:69px;height:23px;background:#fff;border:1px solid #222;border-top:none"></div>
<div class="t" style="left:19px;top:651px;">Symbols</div>
<div class="t" style="left:88px;top:651px;color:#666">Tick Chart</div>
<div class="a" style="left:156px;top:649px;width:1px;height:16px;background:#666"></div>
<div class="a" style="left:6px;top:117px;width:1px;height:553px;background:#c4c4c4"></div>
<div class="a" style="left:3px;top:672px;width:505px;height:1px;background:#c8c8c8"></div>
<div class="a" style="left:6px;top:675px;width:486px;height:15px;background:linear-gradient(90deg,#c3d3e4,#dbe6f1)"></div>
<div class="a" style="left:6px;top:690px;width:500px;height:1px;background:#a8a8a8"></div>
<div class="t" style="left:9px;top:677px;font-size:12px;letter-spacing:-0.3px">Navigator</div>
<div class="t" style="left:497px;top:676px;font-size:14px;font-weight:bold">&#215;</div>
<div class="a" style="left:6px;top:691px;width:500px;height:62px;background:#fff"></div>
<div class="a" style="left:489px;top:692px;width:17px;height:60px;background:#f3f3f3"></div>
<div class="a" style="left:496px;top:708px;width:2px;height:17px;background:#6a6a6a"></div>
<svg style="left:13px;top:693px;" width="16" height="15" viewBox="0 0 16 15"><rect x="1" y="1" width="9" height="7" fill="#fff" stroke="#3a80d0"/><rect x="5" y="5" width="10" height="9" fill="#fff" stroke="#3a80d0"/><path d="M7 10 L9 8 L11 11 L13 9" stroke="#3a80d0" fill="none"/></svg>
<div class="t" style="left:34px;top:695px;">Doo Prime MT4 Terminal</div>
<svg style="left:14px;top:708px;" width="60" height="50" viewBox="0 0 60 50"><path d="M6.5 0 L6.5 45 M8 13 L18 13 M27 20 L27 45 M29 34 L36 34" stroke="#888" stroke-dasharray="1,1" fill="none"/><rect x="2.5" y="9.5" width="8" height="8" fill="#fff" stroke="#999"/><path d="M4 13.5 L9 13.5" stroke="#333"/><rect x="23.5" y="29.5" width="8" height="8" fill="#fff" stroke="#999"/><path d="M25 33.5 L30 33.5 M27.5 31 L27.5 36" stroke="#333"/></svg>
<svg style="left:32px;top:712px;" width="18" height="17" viewBox="0 0 18 17"><circle cx="6" cy="5" r="4" fill="#e8b838"/><circle cx="12" cy="6" r="4" fill="#d8a828"/><path d="M0 16 Q0 9 6 9 Q12 9 12 16Z" fill="#40a040"/><path d="M6 16 Q6 10 12 10 Q18 10 18 16Z" fill="#e8c848"/></svg>
<div class="t" style="left:54px;top:715px;">Accounts</div>
<svg style="left:55px;top:733px;" width="12" height="17" viewBox="0 0 12 17"><path d="M1 3 L9 1 L11 3 L11 16 L3 16 L1 14Z" fill="#3a90e0" stroke="#1a60b0"/><rect x="6" y="10" width="2" height="2" fill="#ff0"/></svg>
<div class="t" style="left:76px;top:735px;">DooPrime-Demo</div>
<div class="a" style="left:6px;top:752px;width:500px;height:1px;background:#1a1a1a"></div>
<div class="a" style="left:9px;top:752px;width:73px;height:21px;background:#fff;border:1px solid #222;border-top:none"></div>
<div class="t" style="left:19px;top:757px;">Common</div>
<div class="t" style="left:92px;top:757px;color:#666">Favorites</div>
<div class="a" style="left:154px;top:756px;width:1px;height:16px;background:#666"></div>
<div class="a" style="left:0px;top:778px;width:510px;height:2px;background:#d8d8d8"></div>
<div class="a" style="left:510px;top:76px;width:1409px;height:684px;background:#9a9a9a"></div>
<div class="a" style="left:510px;top:76px;width:1409px;height:2px;background:#5a5a5a"></div>
<div class="a" style="left:510px;top:76px;width:2px;height:684px;background:#5a5a5a"></div>
<div class="a" style="left:0px;top:781px;width:1919px;height:56px;background:#f0f0f0"></div>
<div class="t" style="left:6px;top:783px;font-size:14px;font-weight:bold">&#215;</div>
<div class="a" style="left:5px;top:797px;width:13px;height:40px;background:#bcd3ea"></div>
<div class="a" style="left:19px;top:785px;width:1900px;height:52px;background:#fff"></div>
<div class="a" style="left:19px;top:808px;width:1900px;height:1px;background:#d8d8d8"></div>
<div class="a" style="left:19px;top:830px;width:1900px;height:1px;background:#d8d8d8"></div>
<div class="a" style="left:19px;top:831px;width:1900px;height:6px;background:#f0f0f0"></div>
<div class="a" style="left:206px;top:786px;width:1px;height:51px;background:#e3e3e3"></div>
<div class="a" style="left:466px;top:786px;width:1px;height:51px;background:#e3e3e3"></div>
<div class="a" style="left:596px;top:786px;width:1px;height:51px;background:#e3e3e3"></div>
<div class="a" style="left:697px;top:786px;width:1px;height:51px;background:#e3e3e3"></div>
<div class="a" style="left:827px;top:786px;width:1px;height:51px;background:#e3e3e3"></div>
<div class="a" style="left:973px;top:786px;width:1px;height:51px;background:#e3e3e3"></div>
<div class="a" style="left:1118px;top:786px;width:1px;height:51px;background:#e3e3e3"></div>
<div class="a" style="left:1263px;top:786px;width:1px;height:51px;background:#e3e3e3"></div>
<div class="a" style="left:1408px;top:786px;width:1px;height:51px;background:#e3e3e3"></div>
<div class="a" style="left:1553px;top:786px;width:1px;height:51px;background:#e3e3e3"></div>
<div class="a" style="left:1698px;top:786px;width:1px;height:51px;background:#e3e3e3"></div>
<div class="t" style="left:25px;top:790px;">Order</div>
<div class="t" style="left:70px;top:791px;font-size:10px;color:#666">&#8260;</div>
<div class="t" style="right:1456px;top:790px;letter-spacing:-0.2px">Time</div>
<div class="t" style="right:1326px;top:790px;letter-spacing:-0.2px">Type</div>
<div class="t" style="right:1226px;top:790px;letter-spacing:-0.2px">Size</div>
<div class="t" style="right:1096px;top:790px;letter-spacing:-0.2px">Symbol</div>
<div class="t" style="right:951px;top:790px;letter-spacing:-0.2px">Price</div>
<div class="t" style="right:806px;top:790px;letter-spacing:-0.2px">S / L</div>
<div class="t" style="right:661px;top:790px;letter-spacing:-0.2px">T / P</div>
<div class="t" style="right:516px;top:790px;letter-spacing:-0.2px">Price</div>
<div class="t" style="right:371px;top:790px;letter-spacing:-0.2px">Commission</div>
<div class="t" style="right:226px;top:790px;letter-spacing:-0.2px">Swap</div>
<div class="t" style="right:6px;top:790px;letter-spacing:-0.2px">Profit</div>
<svg style="left:22px;top:811px;" width="17" height="18" viewBox="0 0 17 18"><path d="M2 1 L9 1 L13 5 L13 16 L2 16Z" fill="#fff" stroke="#777"/><circle cx="12" cy="14" r="4" fill="#e03010"/></svg>
<div class="t" style="left:41px;top:813px;letter-spacing:-0.4px">65019804</div>
<div class="t" style="right:1456px;top:813px;letter-spacing:-0.4px">2022.11.18 10:38:50</div>
<div class="t" style="right:1326px;top:813px;letter-spacing:-0.4px">sell</div>
<div class="t" style="right:1226px;top:813px;letter-spacing:-0.4px">0.50</div>
<div class="t" style="right:1096px;top:813px;letter-spacing:-0.4px">xauusd.s</div>
<div class="t" style="right:951px;top:813px;letter-spacing:-0.4px">1763.50</div>
<div class="t" style="right:806px;top:813px;letter-spacing:-0.4px">0.00</div>
<div class="t" style="right:661px;top:813px;letter-spacing:-0.4px">0.00</div>
<div class="t" style="right:516px;top:813px;letter-spacing:-0.4px">1894.87</div>
<div class="t" style="right:371px;top:813px;letter-spacing:-0.4px">0.00</div>
<div class="t" style="right:226px;top:813px;letter-spacing:-0.4px">0.00</div>
<div class="t" style="right:26px;top:813px;letter-spacing:-0.4px">-6 568.50</div>
<div class="t" style="left:1901px;top:812px;font-size:15px;color:#777">&#215;</div>
<div class="a" style="left:19px;top:831px;width:1900px;height:6px;background:#eeeeee"></div>
<div class="a" style="left:206px;top:831px;width:1px;height:6px;background:#dedede"></div>
<div class="a" style="left:466px;top:831px;width:1px;height:6px;background:#dedede"></div>
<div class="a" style="left:596px;top:831px;width:1px;height:6px;background:#dedede"></div>
<div class="a" style="left:697px;top:831px;width:1px;height:6px;background:#dedede"></div>
<div class="a" style="left:827px;top:831px;width:1px;height:6px;background:#dedede"></div>
<div class="a" style="left:973px;top:831px;width:1px;height:6px;background:#dedede"></div>
<div class="a" style="left:1118px;top:831px;width:1px;height:6px;background:#dedede"></div>
<div class="a" style="left:1263px;top:831px;width:1px;height:6px;background:#dedede"></div>
<div class="a" style="left:1408px;top:831px;width:1px;height:6px;background:#dedede"></div>
<div class="a" style="left:1553px;top:831px;width:1px;height:6px;background:#dedede"></div>
<div class="a" style="left:1698px;top:831px;width:1px;height:6px;background:#dedede"></div>
<div class="t" style="left:41px;top:834px;letter-spacing:-0.4px">70419830</div>
<div class="t" style="right:1456px;top:834px;letter-spacing:-0.4px">2023.03.10 09:38:15</div>
<div class="t" style="right:1326px;top:834px;letter-spacing:-0.4px">sell</div>
<div class="t" style="right:1226px;top:834px;letter-spacing:-0.4px">1.00</div>
<div class="t" style="right:1096px;top:834px;letter-spacing:-0.4px">xauusd.s</div>
<div class="t" style="right:951px;top:834px;letter-spacing:-0.4px">1832.59</div>
<div class="t" style="right:806px;top:834px;letter-spacing:-0.4px">0.00</div>
<div class="t" style="right:661px;top:834px;letter-spacing:-0.4px">0.00</div>
<div class="t" style="right:516px;top:834px;letter-spacing:-0.4px">1894.87</div>
<div class="t" style="right:371px;top:834px;letter-spacing:-0.4px">0.00</div>
<div class="t" style="right:226px;top:834px;letter-spacing:-0.4px">0.00</div>
<div class="t" style="right:26px;top:834px;letter-spacing:-0.4px">-6 191.00</div>
<svg style="left:22px;top:832px;" width="17" height="6" viewBox="0 0 17 6"><path d="M2 1 L9 1 L13 5" fill="none" stroke="#777"/></svg>
<div class="a" style="left:511px;top:77px;width:704px;height:427px;background:linear-gradient(180deg,#b7c8da 0px,#cbd8e6 20px,#dbe6f1 31px,#d7e3ef 100%);border-radius:5px 5px 0 0;border-top:1px solid #fff;border-left:1px solid #fff"></div>
<div class="a" style="left:519px;top:108px;width:690px;height:389px;background:#fff"></div>
<div class="a" style="left:519px;top:108px;width:689px;height:388px;background:#a0a0a0"></div>
<div class="a" style="left:520px;top:109px;width:688px;height:387px;background:#e8e8e8"></div>
<div class="a" style="left:520px;top:109px;width:687px;height:386px;background:#5a5a5a"></div>
<div class="a" style="left:521px;top:110px;width:686px;height:385px;background:#fff"></div>
<svg style="left:522px;top:89px;" width="16" height="15" viewBox="0 0 16 15"><rect x="1" y="1" width="9" height="7" fill="#fff" stroke="#3a80e0" stroke-dasharray="1.5,0.5"/><rect x="5" y="5" width="10" height="9" fill="#fff" stroke="#3a80e0" stroke-dasharray="1.5,0.5"/><path d="M3 4 L5 3 L7 5 M7 10 L9 8 L11 11 L13 9" stroke="#3a80e0" fill="none"/></svg>
<div class="t" style="left:541px;top:90px;font-size:13px;letter-spacing:-0.5px;color:#999">XAUUSD.s,M5</div>
<div class="a" style="left:1106px;top:87px;width:31px;height:18px;background:linear-gradient(180deg,#e2eaf3 0%,#d8e2ee 45%,#c2d0e0 50%,#c8d5e4 80%,#d2deeb 100%);border:1px solid #8898ae;border-radius:3px"></div>
<svg style="left:1116px;top:96px;" width="12" height="6" viewBox="0 0 12 6"><rect x="0.5" y="0.5" width="10" height="4" fill="#fff" stroke="#555"/></svg>
<div class="a" style="left:1140px;top:87px;width:31px;height:18px;background:linear-gradient(180deg,#e2eaf3 0%,#d8e2ee 45%,#c2d0e0 50%,#c8d5e4 80%,#d2deeb 100%);border:1px solid #8898ae;border-radius:3px"></div>
<svg style="left:1149px;top:90px;" width="14" height="11" viewBox="0 0 14 11"><rect x="1" y="1" width="11" height="8.5" rx="1.5" fill="#fff" stroke="#555" stroke-width="2"/><rect x="4" y="4" width="5" height="2.5" fill="#555"/></svg>
<div class="a" style="left:1174px;top:87px;width:31px;height:18px;background:linear-gradient(180deg,#e2eaf3 0%,#d8e2ee 45%,#c2d0e0 50%,#c8d5e4 80%,#d2deeb 100%);border:1px solid #8898ae;border-radius:3px"></div>
<svg style="left:1183px;top:90px;" width="14" height="12" viewBox="0 0 14 12"><path d="M3 2.5 L11 9.5 M11 2.5 L3 9.5" stroke="#555" stroke-width="5" stroke-linecap="round"/><path d="M3 2.5 L11 9.5 M11 2.5 L3 9.5" stroke="#f4f4f4" stroke-width="3" stroke-linecap="round"/></svg>
<div class="a" style="left:1216px;top:77px;width:703px;height:427px;background:linear-gradient(180deg,#98b3d2 0px,#b2cae4 20px,#bcd5ee 31px,#b6d1ea 100%);border-radius:5px 5px 0 0;border-top:1px solid #fff;border-left:1px solid #fff"></div>
<div class="a" style="left:1224px;top:108px;width:689px;height:389px;background:#fff"></div>
<div class="a" style="left:1224px;top:108px;width:688px;height:388px;background:#a0a0a0"></div>
<div class="a" style="left:1225px;top:109px;width:687px;height:387px;background:#e8e8e8"></div>
<div class="a" style="left:1225px;top:109px;width:686px;height:386px;background:#5a5a5a"></div>
<div class="a" style="left:1226px;top:110px;width:685px;height:385px;background:#000"></div>
<svg style="left:1227px;top:89px;" width="16" height="15" viewBox="0 0 16 15"><rect x="1" y="1" width="9" height="7" fill="#fff" stroke="#3a80e0" stroke-dasharray="1.5,0.5"/><rect x="5" y="5" width="10" height="9" fill="#fff" stroke="#3a80e0" stroke-dasharray="1.5,0.5"/><path d="M3 4 L5 3 L7 5 M7 10 L9 8 L11 11 L13 9" stroke="#3a80e0" fill="none"/></svg>
<div class="t" style="left:1246px;top:90px;font-size:13px;letter-spacing:-0.5px;color:#000">XAUUSD.s,H1</div>
<div class="a" style="left:1811px;top:87px;width:31px;height:18px;background:linear-gradient(180deg,#c8daee 0%,#bcd0e6 45%,#98b2d0 50%,#a4bcd8 80%,#b8cfe6 100%);border:1px solid #5a6a80;border-radius:3px"></div>
<svg style="left:1821px;top:96px;" width="12" height="6" viewBox="0 0 12 6"><rect x="0.5" y="0.5" width="10" height="4" fill="#fff" stroke="#555"/></svg>
<div class="a" style="left:1845px;top:87px;width:31px;height:18px;background:linear-gradient(180deg,#c8daee 0%,#bcd0e6 45%,#98b2d0 50%,#a4bcd8 80%,#b8cfe6 100%);border:1px solid #5a6a80;border-radius:3px"></div>
<svg style="left:1854px;top:90px;" width="14" height="11" viewBox="0 0 14 11"><rect x="1" y="1" width="11" height="8.5" rx="1.5" fill="#fff" stroke="#555" stroke-width="2"/><rect x="4" y="4" width="5" height="2.5" fill="#555"/></svg>
<div class="a" style="left:1879px;top:87px;width:31px;height:18px;background:linear-gradient(180deg,#eba899 0%,#e09080 45%,#c0442c 50%,#c85038 80%,#d8705a 100%);border:1px solid #6a2a2a;border-radius:3px"></div>
<svg style="left:1888px;top:90px;" width="14" height="12" viewBox="0 0 14 12"><path d="M2 1.5 L12 10.5 M12 1.5 L2 10.5" stroke="#6a3030" stroke-width="4.4"/><path d="M2 1.5 L12 10.5 M12 1.5 L2 10.5" stroke="#fff" stroke-width="2.4"/></svg>
<div class="a" style="left:511px;top:505px;width:704px;height:255px;background:linear-gradient(180deg,#b7c8da 0px,#cbd8e6 20px,#dbe6f1 31px,#d7e3ef 100%);border-radius:5px 5px 0 0;border-top:1px solid #fff;border-left:1px solid #fff"></div>
<div class="a" style="left:519px;top:536px;width:690px;height:226px;background:#fff"></div>
<div class="a" style="left:519px;top:536px;width:689px;height:225px;background:#a0a0a0"></div>
<div class="a" style="left:520px;top:537px;width:688px;height:224px;background:#e8e8e8"></div>
<div class="a" style="left:520px;top:537px;width:687px;height:223px;background:#5a5a5a"></div>
<div class="a" style="left:521px;top:538px;width:686px;height:222px;background:#000"></div>
<svg style="left:522px;top:517px;" width="16" height="15" viewBox="0 0 16 15"><rect x="1" y="1" width="9" height="7" fill="#fff" stroke="#3a80e0" stroke-dasharray="1.5,0.5"/><rect x="5" y="5" width="10" height="9" fill="#fff" stroke="#3a80e0" stroke-dasharray="1.5,0.5"/><path d="M3 4 L5 3 L7 5 M7 10 L9 8 L11 11 L13 9" stroke="#3a80e0" fill="none"/></svg>
<div class="t" style="left:541px;top:518px;font-size:13px;letter-spacing:-0.5px;color:#999">XAUUSD.s,H1</div>
<div class="a" style="left:1106px;top:515px;width:31px;height:18px;background:linear-gradient(180deg,#e2eaf3 0%,#d8e2ee 45%,#c2d0e0 50%,#c8d5e4 80%,#d2deeb 100%);border:1px solid #8898ae;border-radius:3px"></div>
<svg style="left:1116px;top:524px;" width="12" height="6" viewBox="0 0 12 6"><rect x="0.5" y="0.5" width="10" height="4" fill="#fff" stroke="#555"/></svg>
<div class="a" style="left:1140px;top:515px;width:31px;height:18px;background:linear-gradient(180deg,#e2eaf3 0%,#d8e2ee 45%,#c2d0e0 50%,#c8d5e4 80%,#d2deeb 100%);border:1px solid #8898ae;border-radius:3px"></div>
<svg style="left:1149px;top:518px;" width="14" height="11" viewBox="0 0 14 11"><rect x="1" y="1" width="11" height="8.5" rx="1.5" fill="#fff" stroke="#555" stroke-width="2"/><rect x="4" y="4" width="5" height="2.5" fill="#555"/></svg>
<div class="a" style="left:1174px;top:515px;width:31px;height:18px;background:linear-gradient(180deg,#e2eaf3 0%,#d8e2ee 45%,#c2d0e0 50%,#c8d5e4 80%,#d2deeb 100%);border:1px solid #8898ae;border-radius:3px"></div>
<svg style="left:1183px;top:518px;" width="14" height="12" viewBox="0 0 14 12"><path d="M3 2.5 L11 9.5 M11 2.5 L3 9.5" stroke="#555" stroke-width="5" stroke-linecap="round"/><path d="M3 2.5 L11 9.5 M11 2.5 L3 9.5" stroke="#f4f4f4" stroke-width="3" stroke-linecap="round"/></svg>
<div class="a" style="left:1216px;top:505px;width:703px;height:255px;background:linear-gradient(180deg,#b7c8da 0px,#cbd8e6 20px,#dbe6f1 31px,#d7e3ef 100%);border-radius:5px 5px 0 0;border-top:1px solid #fff;border-left:1px solid #fff"></div>
<div class="a" style="left:1224px;top:536px;width:689px;height:226px;background:#fff"></div>
<div class="a" style="left:1224px;top:536px;width:688px;height:225px;background:#a0a0a0"></div>
<div class="a" style="left:1225px;top:537px;width:687px;height:224px;background:#e8e8e8"></div>
<div class="a" style="left:1225px;top:537px;width:686px;height:223px;background:#5a5a5a"></div>
<div class="a" style="left:1226px;top:538px;width:685px;height:222px;background:#000"></div>
<svg style="left:1227px;top:517px;" width="16" height="15" viewBox="0 0 16 15"><rect x="1" y="1" width="9" height="7" fill="#fff" stroke="#3a80e0" stroke-dasharray="1.5,0.5"/><rect x="5" y="5" width="10" height="9" fill="#fff" stroke="#3a80e0" stroke-dasharray="1.5,0.5"/><path d="M3 4 L5 3 L7 5 M7 10 L9 8 L11 11 L13 9" stroke="#3a80e0" fill="none"/></svg>
<div class="t" style="left:1246px;top:518px;font-size:13px;letter-spacing:-0.5px;color:#999">AUDUSD.s,H1</div>
<div class="a" style="left:1811px;top:515px;width:31px;height:18px;background:linear-gradient(180deg,#e2eaf3 0%,#d8e2ee 45%,#c2d0e0 50%,#c8d5e4 80%,#d2deeb 100%);border:1px solid #8898ae;border-radius:3px"></div>
<svg style="left:1821px;top:524px;" width="12" height="6" viewBox="0 0 12 6"><rect x="0.5" y="0.5" width="10" height="4" fill="#fff" stroke="#555"/></svg>
<div class="a" style="left:1845px;top:515px;width:31px;height:18px;background:linear-gradient(180deg,#e2eaf3 0%,#d8e2ee 45%,#c2d0e0 50%,#c8d5e4 80%,#d2deeb 100%);border:1px solid #8898ae;border-radius:3px"></div>
<svg style="left:1854px;top:518px;" width="14" height="11" viewBox="0 0 14 11"><rect x="1" y="1" width="11" height="8.5" rx="1.5" fill="#fff" stroke="#555" stroke-width="2"/><rect x="4" y="4" width="5" height="2.5" fill="#555"/></svg>
<div class="a" style="left:1879px;top:515px;width:31px;height:18px;background:linear-gradient(180deg,#e2eaf3 0%,#d8e2ee 45%,#c2d0e0 50%,#c8d5e4 80%,#d2deeb 100%);border:1px solid #8898ae;border-radius:3px"></div>
<svg style="left:1888px;top:518px;" width="14" height="12" viewBox="0 0 14 12"><path d="M3 2.5 L11 9.5 M11 2.5 L3 9.5" stroke="#555" stroke-width="5" stroke-linecap="round"/><path d="M3 2.5 L11 9.5 M11 2.5 L3 9.5" stroke="#f4f4f4" stroke-width="3" stroke-linecap="round"/></svg>
<div class="a" style="left:1215px;top:76px;width:2px;height:684px;background:#3c3c3c"></div>
<div class="a" style="left:510px;top:504px;width:1409px;height:2px;background:#3c3c3c"></div>
<div class="a" style="left:1217px;top:503px;width:702px;height:1px;background:#38c0e0"></div>
<div class="a" style="left:510px;top:75px;width:1409px;height:1px;background:#9a9a9a"></div>
<div class="a" style="left:510px;top:76px;width:1409px;height:2px;background:#4a4a4a"></div>
<div class="a" style="left:509px;top:75px;width:2px;height:685px;background:#4e4e4e"></div>
<div class="a" style="left:512px;top:78px;width:702px;height:1px;background:#e4ecf4"></div>
<div class="a" style="left:1218px;top:78px;width:700px;height:1px;background:#e4ecf4"></div>
<svg style="left:1211px;top:505px;" width="11" height="6" viewBox="0 0 11 6"><path d="M0 0 L10 0 L5 5.5Z" fill="#8a8a8a"/></svg>
<svg style="left:1211px;top:78px;" width="11" height="6" viewBox="0 0 11 6"><path d="M0 0 L10 0 L5 5.5Z" fill="#8a8a8a"/></svg>
<svg style="left:521px;top:110px;" width="686" height="385" viewBox="0 0 686 385"><line x1="35.5" y1="2" x2="35.5" y2="231" stroke="#c0c0c0" stroke-width="1" stroke-dasharray="3,3"/><line x1="67.5" y1="2" x2="67.5" y2="231" stroke="#c0c0c0" stroke-width="1" stroke-dasharray="3,3"/><line x1="99.5" y1="2" x2="99.5" y2="231" stroke="#c0c0c0" stroke-width="1" stroke-dasharray="3,3"/><line x1="131.5" y1="2" x2="131.5" y2="231" stroke="#c0c0c0" stroke-width="1" stroke-dasharray="3,3"/><line x1="163.5" y1="2" x2="163.5" y2="231" stroke="#c0c0c0" stroke-width="1" stroke-dasharray="3,3"/><line x1="195.5" y1="2" x2="195.5" y2="231" stroke="#c0c0c0" stroke-width="1" stroke-dasharray="3,3"/><line x1="227.5" y1="2" x2="227.5" y2="231" stroke="#c0c0c0" stroke-width="1" stroke-dasharray="3,3"/><line x1="259.5" y1="2" x2="259.5" y2="231" stroke="#c0c0c0" stroke-width="1" stroke-dasharray="3,3"/><line x1="291.5" y1="2" x2="291.5" y2="231" stroke="#c0c0c0" stroke-width="1" stroke-dasharray="3,3"/><line x1="323.5" y1="2" x2="323.5" y2="231" stroke="#c0c0c0" stroke-width="1" stroke-dasharray="3,3"/><line x1="355.5" y1="2" x2="355.5" y2="231" stroke="#c0c0c0" stroke-width="1" stroke-dasharray="3,3"/><line x1="387.5" y1="2" x2="387.5" y2="231" stroke="#c0c0c0" stroke-width="1" stroke-dasharray="3,3"/><line x1="419.5" y1="2" x2="419.5" y2="231" stroke="#c0c0c0" stroke-width="1" stroke-dasharray="3,3"/><line x1="451.5" y1="2" x2="451.5" y2="231" stroke="#c0c0c0" stroke-width="1" stroke-dasharray="3,3"/><line x1="483.5" y1="2" x2="483.5" y2="231" stroke="#c0c0c0" stroke-width="1" stroke-dasharray="3,3"/><line x1="515.5" y1="2" x2="515.5" y2="231" stroke="#c0c0c0" stroke-width="1" stroke-dasharray="3,3"/><line x1="547.5" y1="2" x2="547.5" y2="231" stroke="#c0c0c0" stroke-width="1" stroke-dasharray="3,3"/><line x1="579.5" y1="2" x2="579.5" y2="231" stroke="#c0c0c0" stroke-width="1" stroke-dasharray="3,3"/><line x1="611.5" y1="2" x2="611.5" y2="231" stroke="#c0c0c0" stroke-width="1" stroke-dasharray="3,3"/><line x1="4" y1="31.5" x2="639" y2="31.5" stroke="#c0c0c0" stroke-width="1" stroke-dasharray="3,3"/><line x1="4" y1="64.5" x2="639" y2="64.5" stroke="#c0c0c0" stroke-width="1" stroke-dasharray="3,3"/><line x1="4" y1="97.5" x2="639" y2="97.5" stroke="#c0c0c0" stroke-width="1" stroke-dasharray="3,3"/><line x1="4" y1="130.5" x2="639" y2="130.5" stroke="#c0c0c0" stroke-width="1" stroke-dasharray="3,3"/><line x1="4" y1="163.5" x2="639" y2="163.5" stroke="#c0c0c0" stroke-width="1" stroke-dasharray="3,3"/><line x1="4" y1="196.5" x2="639" y2="196.5" stroke="#c0c0c0" stroke-width="1" stroke-dasharray="3,3"/><line x1="4" y1="229.5" x2="639" y2="229.5" stroke="#c0c0c0" stroke-width="1" stroke-dasharray="3,3"/><line x1="35.5" y1="234" x2="35.5" y2="298" stroke="#c0c0c0" stroke-width="1" stroke-dasharray="3,3"/><line x1="67.5" y1="234" x2="67.5" y2="298" stroke="#c0c0c0" stroke-width="1" stroke-dasharray="3,3"/><line x1="99.5" y1="234" x2="99.5" y2="298" stroke="#c0c0c0" stroke-width="1" stroke-dasharray="3,3"/><line x1="131.5" y1="234" x2="131.5" y2="298" stroke="#c0c0c0" stroke-width="1" stroke-dasharray="3,3"/><line x1="163.5" y1="234" x2="163.5" y2="298" stroke="#c0c0c0" stroke-width="1" stroke-dasharray="3,3"/><line x1="195.5" y1="234" x2="195.5" y2="298" stroke="#c0c0c0" stroke-width="1" stroke-dasharray="3,3"/><line x1="227.5" y1="234" x2="227.5" y2="298" stroke="#c0c0c0" stroke-width="1" stroke-dasharray="3,3"/><line x1="259.5" y1="234" x2="259.5" y2="298" stroke="#c0c0c0" stroke-width="1" stroke-dasharray="3,3"/><line x1="291.5" y1="234" x2="291.5" y2="298" stroke="#c0c0c0" stroke-width="1" stroke-dasharray="3,3"/><line x1="323.5" y1="234" x2="323.5" y2="298" stroke="#c0c0c0" stroke-width="1" stroke-dasharray="3,3"/><line x1="355.5" y1="234" x2="355.5" y2="298" stroke="#c0c0c0" stroke-width="1" stroke-dasharray="3,3"/><line x1="387.5" y1="234" x2="387.5" y2="298" stroke="#c0c0c0" stroke-width="1" stroke-dasharray="3,3"/><line x1="419.5" y1="234" x2="419.5" y2="298" stroke="#c0c0c0" stroke-width="1" stroke-dasharray="3,3"/><line x1="451.5" y1="234" x2="451.5" y2="298" stroke="#c0c0c0" stroke-width="1" stroke-dasharray="3,3"/><line x1="483.5" y1="234" x2="483.5" y2="298" stroke="#c0c0c0" stroke-width="1" stroke-dasharray="3,3"/><line x1="515.5" y1="234" x2="515.5" y2="298" stroke="#c0c0c0" stroke-width="1" stroke-dasharray="3,3"/><line x1="547.5" y1="234" x2="547.5" y2="298" stroke="#c0c0c0" stroke-width="1" stroke-dasharray="3,3"/><line x1="579.5" y1="234" x2="579.5" y2="298" stroke="#c0c0c0" stroke-width="1" stroke-dasharray="3,3"/><line x1="611.5" y1="234" x2="611.5" y2="298" stroke="#c0c0c0" stroke-width="1" stroke-dasharray="3,3"/><line x1="35.5" y1="301" x2="35.5" y2="363" stroke="#c0c0c0" stroke-width="1" stroke-dasharray="3,3"/><line x1="67.5" y1="301" x2="67.5" y2="363" stroke="#c0c0c0" stroke-width="1" stroke-dasharray="3,3"/><line x1="99.5" y1="301" x2="99.5" y2="363" stroke="#c0c0c0" stroke-width="1" stroke-dasharray="3,3"/><line x1="131.5" y1="301" x2="131.5" y2="363" stroke="#c0c0c0" stroke-width="1" stroke-dasharray="3,3"/><line x1="163.5" y1="301" x2="163.5" y2="363" stroke="#c0c0c0" stroke-width="1" stroke-dasharray="3,3"/><line x1="195.5" y1="301" x2="195.5" y2="363" stroke="#c0c0c0" stroke-width="1" stroke-dasharray="3,3"/><line x1="227.5" y1="301" x2="227.5" y2="363" stroke="#c0c0c0" stroke-width="1" stroke-dasharray="3,3"/><line x1="259.5" y1="301" x2="259.5" y2="363" stroke="#c0c0c0" stroke-width="1" stroke-dasharray="3,3"/><line x1="291.5" y1="301" x2="291.5" y2="363" stroke="#c0c0c0" stroke-width="1" stroke-dasharray="3,3"/><line x1="323.5" y1="301" x2="323.5" y2="363" stroke="#c0c0c0" stroke-width="1" stroke-dasharray="3,3"/><line x1="355.5" y1="301" x2="355.5" y2="363" stroke="#c0c0c0" stroke-width="1" stroke-dasharray="3,3"/><line x1="387.5" y1="301" x2="387.5" y2="363" stroke="#c0c0c0" stroke-width="1" stroke-dasharray="3,3"/><line x1="419.5" y1="301" x2="419.5" y2="363" stroke="#c0c0c0" stroke-width="1" stroke-dasharray="3,3"/><line x1="451.5" y1="301" x2="451.5" y2="363" stroke="#c0c0c0" stroke-width="1" stroke-dasharray="3,3"/><line x1="483.5" y1="301" x2="483.5" y2="363" stroke="#c0c0c0" stroke-width="1" stroke-dasharray="3,3"/><line x1="515.5" y1="301" x2="515.5" y2="363" stroke="#c0c0c0" stroke-width="1" stroke-dasharray="3,3"/><line x1="547.5" y1="301" x2="547.5" y2="363" stroke="#c0c0c0" stroke-width="1" stroke-dasharray="3,3"/><line x1="579.5" y1="301" x2="579.5" y2="363" stroke="#c0c0c0" stroke-width="1" stroke-dasharray="3,3"/><line x1="611.5" y1="301" x2="611.5" y2="363" stroke="#c0c0c0" stroke-width="1" stroke-dasharray="3,3"/><line x1="4" y1="321.5" x2="639" y2="321.5" stroke="#c0c0c0" stroke-width="1" stroke-dasharray="3,3"/><line x1="4" y1="345.5" x2="639" y2="345.5" stroke="#c0c0c0" stroke-width="1" stroke-dasharray="3,3"/><path d="M3.5 231 V222.7 M7.5 231 V223.5 M11.5 231 V225.2 M15.5 231 V224.3 M19.5 231 V226.0 M23.5 231 V222.3 M27.5 231 V221.3 M31.5 231 V208.5 M35.5 231 V215.5 M39.5 231 V218.5 M43.5 231 V215.5 M47.5 231 V213.5 M51.5 231 V221.3 M55.5 231 V215.5 M59.5 231 V219.3 M63.5 231 V216.3 M67.5 231 V217.3 M71.5 231 V219.3 M75.5 231 V221.3 M79.5 231 V218.5 M83.5 231 V218.5 M87.5 231 V222.7 M91.5 231 V223.5 M95.5 231 V224.3 M99.5 231 V224.0 M103.5 231 V222.3 M107.5 231 V218.5 M111.5 231 V214.7 M115.5 231 V219.3 M119.5 231 V214.7 M123.5 231 V215.5 M127.5 231 V219.3 M131.5 231 V217.3 M135.5 231 V222.3 M139.5 231 V221.3 M143.5 231 V221.3 M147.5 231 V221.3 M151.5 231 V223.5 M155.5 231 V224.3 M159.5 231 V223.5 M163.5 231 V225.2 M167.5 231 V220.5 M171.5 231 V224.3 M175.5 231 V225.2 M179.5 231 V227.7 M183.5 231 V222.3 M187.5 231 V223.5 M191.5 231 V225.2 M195.5 231 V223.5 M199.5 231 V223.5 M203.5 231 V224.3 M207.5 231 V225.2 M211.5 231 V225.2 M215.5 231 V225.2 M219.5 231 V224.3 M223.5 231 V223.5 M227.5 231 V224.3 M231.5 231 V226.3 M235.5 231 V223.5 M239.5 231 V225.2 M243.5 231 V226.3 M247.5 231 V224.3 M251.5 231 V222.3 M255.5 231 V220.5 M259.5 231 V222.3 M263.5 231 V221.3 M267.5 231 V218.5 M271.5 231 V220.5 M275.5 231 V222.3 M279.5 231 V221.3 M283.5 231 V222.3 M287.5 231 V222.3 M291.5 231 V221.3 M295.5 231 V221.3 M299.5 231 V223.5 M303.5 231 V225.2 M307.5 231 V222.3 M311.5 231 V223.5 M315.5 231 V225.2 M319.5 231 V221.3 M323.5 231 V219.3 M327.5 231 V216.3 M331.5 231 V212.7 M335.5 231 V215.5 M339.5 231 V216.3 M343.5 231 V216.3 M347.5 231 V213.5 M351.5 231 V213.5 M355.5 231 V214.7 M359.5 231 V215.5 M363.5 231 V219.3 M367.5 231 V211.5 M371.5 231 V214.7 M375.5 231 V211.5 M379.5 231 V215.5 M383.5 231 V214.7 M387.5 231 V209.7 M391.5 231 V212.7 M395.5 231 V214.7 M399.5 231 V211.5 M403.5 231 V212.7 M407.5 231 V214.7 M411.5 231 V213.5 M415.5 231 V214.7 M419.5 231 V214.7 M423.5 231 V213.5 M427.5 231 V215.5 M431.5 231 V212.7 M435.5 231 V211.5 M439.5 231 V216.3 M443.5 231 V217.3 M447.5 231 V216.3 M451.5 231 V214.7 M455.5 231 V216.3 M459.5 231 V215.5 M463.5 231 V218.5 M467.5 231 V220.5 M471.5 231 V219.3 M475.5 231 V215.5 M479.5 231 V219.3 M483.5 231 V215.5 M487.5 231 V215.5 M491.5 231 V219.3 M495.5 231 V217.3 M499.5 231 V220.5 M503.5 231 V216.3 M507.5 231 V216.3 M511.5 231 V216.3 M515.5 231 V215.5 M519.5 231 V216.3 M523.5 231 V217.3 M527.5 231 V216.3 M531.5 231 V218.5 M535.5 231 V213.5 M539.5 231 V218.5 M543.5 231 V209.7 M547.5 231 V214.7 M551.5 231 V207.7 M555.5 231 V211.5 M559.5 231 V212.7 M563.5 231 V215.5 M567.5 231 V216.3 M571.5 231 V217.3 M575.5 231 V219.3 M579.5 231 V218.5 M583.5 231 V221.3 M587.5 231 V218.5 M591.5 231 V213.5 M595.5 231 V214.7 M599.5 231 V203.5 M603.5 231 V210.3 M607.5 231 V210.3 M611.5 231 V209.7 M615.5 231 V204.7 M619.5 231 V205.5 M623.5 231 V209.7 M627.5 231 V215.5 M631.5 231 V209.3 M635.5 231 V215.2" stroke="#22c022" stroke-width="1"/><polyline points="3.2,96.8 7.4,110.9 15.8,108.1 20.0,109.5 28.5,130.5 34.0,127.7 44.0,137.5 51.0,138.0 55.0,109.5 63.6,108.0 67.8,112.3 73.4,123.5 79.0,146.0 91.6,143.2 95.8,127.7 102.9,141.8 114.0,109.5 119.7,96.8 123.9,101.0 131.0,81.4 136.5,87.0 140.8,81.4 149.0,70.0 169.0,65.0 184.0,75.0 197.0,81.4 212.3,85.6 220.8,96.8 232.0,89.8 239.0,81.4 250.2,96.8 260.0,75.8 265.7,89.8 275.5,84.2 284.0,81.4 286.7,96.8 299.4,109.5 312.0,99.7 319.0,105.3 327.0,90.0 339.0,57.8 343.4,53.4 347.8,40.1 351.2,33.5 358.9,50.0 367.7,55.2 371.7,53.4 375.5,40.1 382.0,57.8 386.5,82.1 390.9,115.3 395.4,109.7 399.1,112.0 403.5,81.0 409.3,91.0 415.2,114.2 419.7,92.0 430.7,117.5 439.6,146.2 444.0,126.3 448.4,141.8 452.8,148.4 457.0,150.9 463.3,152.4 469.5,140.0 473.8,133.0 482.6,120.8 487.0,141.8 494.3,152.4 508.3,160.2 511.4,160.2 517.6,182.0 523.8,183.5 531.6,178.8 537.8,186.6 545.6,202.1 551.8,214.6 558.0,189.7 568.9,174.2 575.1,164.9 581.3,171.0 587.5,161.7 593.7,164.9 600.0,146.2 604.2,129.6 609.7,148.0 614.0,135.0 619.7,135.0 624.0,113.0 631.0,140.0 635.7,158.6" fill="none" stroke="#1fc81f" stroke-width="1"/><rect x="5.5" y="90.5" width="3" height="3" fill="#3cd0d0"/><rect x="9.7" y="92.0" width="3" height="3" fill="#3cd0d0"/><rect x="13.9" y="93.5" width="3" height="3" fill="#3cd0d0"/><rect x="18.1" y="95.0" width="3" height="3" fill="#3cd0d0"/><rect x="22.3" y="96.5" width="3" height="3" fill="#3cd0d0"/><rect x="26.5" y="97.9" width="3" height="3" fill="#3cd0d0"/><rect x="29.5" y="99.0" width="3" height="3" fill="#3cd0d0"/><rect x="33.5" y="105.2" width="3" height="3" fill="#3cd0d0"/><rect x="37.7" y="105.2" width="3" height="3" fill="#3cd0d0"/><rect x="41.9" y="105.2" width="3" height="3" fill="#3cd0d0"/><rect x="45.5" y="111.5" width="3" height="3" fill="#3cd0d0"/><rect x="49.5" y="117.5" width="3" height="3" fill="#3cd0d0"/><rect x="53.5" y="156.5" width="3" height="3" fill="#3cd0d0"/><rect x="57.7" y="155.0" width="3" height="3" fill="#3cd0d0"/><rect x="61.9" y="153.4" width="3" height="3" fill="#3cd0d0"/><rect x="66.1" y="151.9" width="3" height="3" fill="#3cd0d0"/><rect x="70.3" y="150.4" width="3" height="3" fill="#3cd0d0"/><rect x="73.5" y="149.2" width="3" height="3" fill="#3cd0d0"/><rect x="77.5" y="100.5" width="3" height="3" fill="#3cd0d0"/><rect x="81.7" y="102.3" width="3" height="3" fill="#3cd0d0"/><rect x="85.9" y="104.0" width="3" height="3" fill="#3cd0d0"/><rect x="90.1" y="105.8" width="3" height="3" fill="#3cd0d0"/><rect x="94.3" y="107.5" width="3" height="3" fill="#3cd0d0"/><rect x="98.5" y="109.3" width="3" height="3" fill="#3cd0d0"/><rect x="102.7" y="111.0" width="3" height="3" fill="#3cd0d0"/><rect x="105.5" y="112.2" width="3" height="3" fill="#3cd0d0"/><rect x="109.5" y="152.5" width="3" height="3" fill="#3cd0d0"/><rect x="113.7" y="150.4" width="3" height="3" fill="#3cd0d0"/><rect x="117.9" y="148.3" width="3" height="3" fill="#3cd0d0"/><rect x="122.1" y="145.7" width="3" height="3" fill="#3cd0d0"/><rect x="126.3" y="140.0" width="3" height="3" fill="#3cd0d0"/><rect x="130.5" y="133.6" width="3" height="3" fill="#3cd0d0"/><rect x="134.7" y="127.3" width="3" height="3" fill="#3cd0d0"/><rect x="138.9" y="121.2" width="3" height="3" fill="#3cd0d0"/><rect x="143.1" y="115.0" width="3" height="3" fill="#3cd0d0"/><rect x="147.3" y="108.6" width="3" height="3" fill="#3cd0d0"/><rect x="151.5" y="102.5" width="3" height="3" fill="#3cd0d0"/><rect x="155.7" y="96.8" width="3" height="3" fill="#3cd0d0"/><rect x="159.9" y="91.5" width="3" height="3" fill="#3cd0d0"/><rect x="164.1" y="87.1" width="3" height="3" fill="#3cd0d0"/><rect x="168.3" y="82.7" width="3" height="3" fill="#3cd0d0"/><rect x="172.5" y="81.2" width="3" height="3" fill="#3cd0d0"/><rect x="176.7" y="79.8" width="3" height="3" fill="#3cd0d0"/><rect x="180.9" y="79.5" width="3" height="3" fill="#3cd0d0"/><rect x="185.1" y="79.5" width="3" height="3" fill="#3cd0d0"/><rect x="189.3" y="79.5" width="3" height="3" fill="#3cd0d0"/><rect x="226.3" y="67.3" width="3" height="3" fill="#3cd0d0"/><rect x="230.5" y="69.6" width="3" height="3" fill="#3cd0d0"/><rect x="234.7" y="72.0" width="3" height="3" fill="#3cd0d0"/><rect x="237.5" y="98.2" width="3" height="3" fill="#3cd0d0"/><rect x="241.7" y="97.7" width="3" height="3" fill="#3cd0d0"/><rect x="245.5" y="97.3" width="3" height="3" fill="#3cd0d0"/><rect x="250.1" y="72.0" width="3" height="3" fill="#3cd0d0"/><rect x="254.3" y="72.0" width="3" height="3" fill="#3cd0d0"/><rect x="258.5" y="99.0" width="3" height="3" fill="#3cd0d0"/><rect x="262.5" y="99.0" width="3" height="3" fill="#3cd0d0"/><rect x="265.5" y="66.7" width="3" height="3" fill="#3cd0d0"/><rect x="269.7" y="67.4" width="3" height="3" fill="#3cd0d0"/><rect x="273.9" y="68.1" width="3" height="3" fill="#3cd0d0"/><rect x="278.1" y="68.8" width="3" height="3" fill="#3cd0d0"/><rect x="282.3" y="69.5" width="3" height="3" fill="#3cd0d0"/><rect x="285.5" y="104.5" width="3" height="3" fill="#3cd0d0"/><rect x="289.5" y="67.3" width="3" height="3" fill="#3cd0d0"/><rect x="293.7" y="68.4" width="3" height="3" fill="#3cd0d0"/><rect x="297.9" y="69.5" width="3" height="3" fill="#3cd0d0"/><rect x="302.1" y="70.5" width="3" height="3" fill="#3cd0d0"/><rect x="306.3" y="73.0" width="3" height="3" fill="#3cd0d0"/><rect x="310.5" y="76.1" width="3" height="3" fill="#3cd0d0"/><rect x="314.7" y="79.2" width="3" height="3" fill="#3cd0d0"/><rect x="318.9" y="83.5" width="3" height="3" fill="#3cd0d0"/><rect x="323.1" y="90.3" width="3" height="3" fill="#3cd0d0"/><rect x="327.3" y="97.0" width="3" height="3" fill="#3cd0d0"/><rect x="329.5" y="100.5" width="3" height="3" fill="#3cd0d0"/><rect x="333.5" y="112.5" width="3" height="3" fill="#3cd0d0"/><rect x="337.7" y="109.2" width="3" height="3" fill="#3cd0d0"/><rect x="341.9" y="105.3" width="3" height="3" fill="#3cd0d0"/><rect x="346.1" y="101.1" width="3" height="3" fill="#3cd0d0"/><rect x="350.3" y="92.5" width="3" height="3" fill="#3cd0d0"/><rect x="354.5" y="83.0" width="3" height="3" fill="#3cd0d0"/><rect x="358.7" y="73.9" width="3" height="3" fill="#3cd0d0"/><rect x="361.8" y="67.4" width="3" height="3" fill="#3cd0d0"/><rect x="365.1" y="12.1" width="3" height="3" fill="#3cd0d0"/><rect x="369.3" y="14.1" width="3" height="3" fill="#3cd0d0"/><rect x="373.5" y="16.1" width="3" height="3" fill="#3cd0d0"/><rect x="377.7" y="18.2" width="3" height="3" fill="#3cd0d0"/><rect x="381.9" y="20.2" width="3" height="3" fill="#3cd0d0"/><rect x="386.1" y="22.2" width="3" height="3" fill="#3cd0d0"/><rect x="390.3" y="24.2" width="3" height="3" fill="#3cd0d0"/><rect x="394.5" y="33.4" width="3" height="3" fill="#3cd0d0"/><rect x="398.7" y="43.0" width="3" height="3" fill="#3cd0d0"/><rect x="402.9" y="52.1" width="3" height="3" fill="#3cd0d0"/><rect x="407.1" y="59.1" width="3" height="3" fill="#3cd0d0"/><rect x="411.3" y="65.4" width="3" height="3" fill="#3cd0d0"/><rect x="415.5" y="71.7" width="3" height="3" fill="#3cd0d0"/><rect x="418.2" y="75.1" width="3" height="3" fill="#3cd0d0"/><rect x="421.5" y="123.7" width="3" height="3" fill="#3cd0d0"/><rect x="425.7" y="122.5" width="3" height="3" fill="#3cd0d0"/><rect x="429.2" y="121.5" width="3" height="3" fill="#3cd0d0"/><rect x="433.5" y="76.6" width="3" height="3" fill="#3cd0d0"/><rect x="437.7" y="78.7" width="3" height="3" fill="#3cd0d0"/><rect x="441.9" y="80.8" width="3" height="3" fill="#3cd0d0"/><rect x="446.1" y="82.9" width="3" height="3" fill="#3cd0d0"/><rect x="450.3" y="85.1" width="3" height="3" fill="#3cd0d0"/><rect x="454.5" y="90.3" width="3" height="3" fill="#3cd0d0"/><rect x="458.7" y="95.9" width="3" height="3" fill="#3cd0d0"/><rect x="462.9" y="103.1" width="3" height="3" fill="#3cd0d0"/><rect x="467.1" y="109.2" width="3" height="3" fill="#3cd0d0"/><rect x="471.3" y="114.1" width="3" height="3" fill="#3cd0d0"/><rect x="474.1" y="117.5" width="3" height="3" fill="#3cd0d0"/><rect x="477.3" y="160.2" width="3" height="3" fill="#3cd0d0"/><rect x="481.5" y="158.8" width="3" height="3" fill="#3cd0d0"/><rect x="485.7" y="157.4" width="3" height="3" fill="#3cd0d0"/><rect x="490.0" y="112.7" width="3" height="3" fill="#3cd0d0"/><rect x="494.2" y="115.0" width="3" height="3" fill="#3cd0d0"/><rect x="498.4" y="117.3" width="3" height="3" fill="#3cd0d0"/><rect x="502.6" y="119.5" width="3" height="3" fill="#3cd0d0"/><rect x="506.8" y="122.5" width="3" height="3" fill="#3cd0d0"/><rect x="511.0" y="126.7" width="3" height="3" fill="#3cd0d0"/><rect x="515.2" y="130.5" width="3" height="3" fill="#3cd0d0"/><rect x="519.4" y="136.6" width="3" height="3" fill="#3cd0d0"/><rect x="523.6" y="143.1" width="3" height="3" fill="#3cd0d0"/><rect x="527.8" y="149.9" width="3" height="3" fill="#3cd0d0"/><rect x="532.0" y="156.1" width="3" height="3" fill="#3cd0d0"/><rect x="536.2" y="162.7" width="3" height="3" fill="#3cd0d0"/><rect x="540.4" y="170.0" width="3" height="3" fill="#3cd0d0"/><rect x="544.6" y="175.9" width="3" height="3" fill="#3cd0d0"/><rect x="548.8" y="181.5" width="3" height="3" fill="#3cd0d0"/><rect x="553.5" y="223.9" width="3" height="3" fill="#3cd0d0"/><rect x="557.7" y="222.3" width="3" height="3" fill="#3cd0d0"/><rect x="561.9" y="220.8" width="3" height="3" fill="#3cd0d0"/><rect x="566.1" y="219.0" width="3" height="3" fill="#3cd0d0"/><rect x="570.3" y="214.7" width="3" height="3" fill="#3cd0d0"/><rect x="574.5" y="209.9" width="3" height="3" fill="#3cd0d0"/><rect x="578.7" y="203.0" width="3" height="3" fill="#3cd0d0"/><rect x="582.9" y="196.0" width="3" height="3" fill="#3cd0d0"/><rect x="587.1" y="190.7" width="3" height="3" fill="#3cd0d0"/><rect x="591.3" y="186.0" width="3" height="3" fill="#3cd0d0"/><rect x="595.5" y="181.3" width="3" height="3" fill="#3cd0d0"/><rect x="599.7" y="174.2" width="3" height="3" fill="#3cd0d0"/><rect x="603.9" y="165.6" width="3" height="3" fill="#3cd0d0"/><rect x="606.2" y="161.8" width="3" height="3" fill="#3cd0d0"/><rect x="609.3" y="124.8" width="3" height="3" fill="#3cd0d0"/><rect x="613.5" y="125.3" width="3" height="3" fill="#3cd0d0"/><rect x="617.7" y="125.8" width="3" height="3" fill="#3cd0d0"/><rect x="621.7" y="168.0" width="3" height="3" fill="#3cd0d0"/><rect x="625.9" y="167.0" width="3" height="3" fill="#3cd0d0"/><rect x="630.1" y="165.9" width="3" height="3" fill="#3cd0d0"/><rect x="634.2" y="164.9" width="3" height="3" fill="#3cd0d0"/><path d="M5.5 260 V261.1 M9.5 260 V261.7 M13.5 260 V262.2 M17.5 260 V262.7 M21.5 260 V263.9 M25.5 260 V265.6 M29.5 260 V267.4 M33.5 260 V269.1 M37.5 260 V270.9 M41.5 260 V272.6 M45.5 260 V274.4 M49.5 260 V276.1 M53.5 260 V276.6 M57.5 260 V275.7 M61.5 260 V274.8 M65.5 260 V273.9 M69.5 260 V273.0 M73.5 260 V273.2 M77.5 260 V273.4 M81.5 260 V273.6 M85.5 260 V273.8 M89.5 260 V274.0 M93.5 260 V273.8 M97.5 260 V273.6 M101.5 260 V273.4 M105.5 260 V273.2 M109.5 260 V273.0 M113.5 260 V268.6 M117.5 260 V264.2 M121.5 260 V260.0 M125.5 260 V256.0 M129.5 260 V252.0 M133.5 260 V250.1 M137.5 260 V248.3 M141.5 260 V246.4 M145.5 260 V244.8 M149.5 260 V243.8 M153.5 260 V242.8 M157.5 260 V241.9 M161.5 260 V240.9 M165.5 260 V240.0 M169.5 260 V239.0 M173.5 260 V239.6 M177.5 260 V240.2 M181.5 260 V240.8 M185.5 260 V241.4 M189.5 260 V242.0 M193.5 260 V243.0 M197.5 260 V244.0 M201.5 260 V245.0 M205.5 260 V246.0 M209.5 260 V247.0 M213.5 260 V249.2 M217.5 260 V251.5 M221.5 260 V253.8 M225.5 260 V256.0 M229.5 260 V256.9 M233.5 260 V257.7 M237.5 260 V258.6 M241.5 260 V259.1 M245.5 260 V259.3 M249.5 260 V259.5 M253.5 260 V259.7 M257.5 260 V259.9 M261.5 260 V260.1 M265.5 260 V260.3 M269.5 260 V260.5 M273.5 260 V260.7 M277.5 260 V260.9 M281.5 260 V261.2 M285.5 260 V261.6 M289.5 260 V262.0 M293.5 260 V262.4 M297.5 260 V262.8 M301.5 260 V263.3 M305.5 260 V263.9 M309.5 260 V264.5 M313.5 260 V265.1 M317.5 260 V265.7 M321.5 260 V265.7 M325.5 260 V265.1 M329.5 260 V264.5 M333.5 260 V262.8 M337.5 260 V258.0 M341.5 260 V254.9 M345.5 260 V251.9 M349.5 260 V248.8 M353.5 260 V245.8 M357.5 260 V244.0 M361.5 260 V242.7 M365.5 260 V241.3 M369.5 260 V240.0 M373.5 260 V239.7 M377.5 260 V239.5 M381.5 260 V239.2 M385.5 260 V240.3 M389.5 260 V245.4 M393.5 260 V255.0 M397.5 260 V263.1 M401.5 260 V265.4 M405.5 260 V267.7 M409.5 260 V270.0 M413.5 260 V272.4 M417.5 260 V274.8 M421.5 260 V277.2 M425.5 260 V279.6 M429.5 260 V282.0 M433.5 260 V283.2 M437.5 260 V284.4 M441.5 260 V285.6 M445.5 260 V286.8 M449.5 260 V288.0 M453.5 260 V288.2 M457.5 260 V288.4 M461.5 260 V288.6 M465.5 260 V288.8 M469.5 260 V289.0 M473.5 260 V288.4 M477.5 260 V287.8 M481.5 260 V287.2 M485.5 260 V286.6 M489.5 260 V286.0 M493.5 260 V285.2 M497.5 260 V284.4 M501.5 260 V283.6 M505.5 260 V282.8 M509.5 260 V282.0 M513.5 260 V282.4 M517.5 260 V282.8 M521.5 260 V283.2 M525.5 260 V283.6 M529.5 260 V284.0 M533.5 260 V285.7 M537.5 260 V287.3 M541.5 260 V289.0 M545.5 260 V290.7 M549.5 260 V292.3 M553.5 260 V294.0 M557.5 260 V292.5 M561.5 260 V291.0 M565.5 260 V289.5 M569.5 260 V288.0 M573.5 260 V285.3 M577.5 260 V282.7 M581.5 260 V280.0 M585.5 260 V277.2 M589.5 260 V274.0 M593.5 260 V270.8 M597.5 260 V267.6 M601.5 260 V263.3 M605.5 260 V258.0 M609.5 260 V255.7 M613.5 260 V253.5 M617.5 260 V251.5 M621.5 260 V249.5 M625.5 260 V247.8 M629.5 260 V247.2 M633.5 260 V246.5" stroke="#2ac82a" stroke-width="1"/><polyline points="39.8,268.5 54.7,274.4 66.0,274.0 78.6,271.5 93.0,271.0 108.5,273.0 120.5,268.5 135.4,259.5 150.3,249.0 168.3,241.6 186.2,239.5 204.0,241.6 228.0,250.5 252.0,258.6 272.8,259.5 296.7,261.0 320.6,265.5 332.6,265.5 339.0,262.7 354.5,253.4 370.0,244.0 382.5,240.0 391.8,244.0 407.3,256.5 423.0,269.0 441.5,276.7 457.0,282.9 472.6,288.5 485.0,287.6 509.9,281.3 522.3,283.5 541.0,288.5 556.5,292.2 565.8,291.6 581.3,286.0 596.8,273.6 612.4,261.2 624.8,251.8 635.7,248.7" fill="none" stroke="#e01818" stroke-width="1.2"/><polyline points="14.9,353.5 19.9,353.5 27.4,361.3 30.8,358.8 35.5,341.7 42.5,353.8 47.5,355.1 51.7,355.1 54.2,333.7 55.9,313.6 62.6,310.3 66.7,320.3 70.9,342.1 76.0,343.8 82.6,358.8 89.3,347.1 95.2,318.7 99.4,327.0 103.5,341.2 107.7,327.0 114.4,310.3 123.6,318.7 132.8,312.0 136.2,326.2 143.7,315.3 149.5,326.2 156.2,316.1 163.8,336.2 167.1,321.2 172.1,337.9 179.0,325.4 187.7,319.3 192.2,349.2 198.1,346.2 207.1,329.7 219.0,353.6 231.0,334.2 238.5,319.3 246.0,337.2 252.0,347.6 259.4,316.3 266.9,343.1 275.8,322.2 284.8,346.2 290.7,322.2 299.7,354.5 311.7,325.2 319.1,341.7 326.6,307.3 335.6,304.3 341.4,311.0 351.4,307.8 356.0,326.4 370.0,344.4 376.3,317.1 388.7,359.0 404.2,323.3 413.6,345.0 419.8,326.4 435.3,345.0 444.6,334.2 454.0,349.7 469.5,340.4 483.5,310.2 488.1,345.0 506.8,359.0 513.0,335.7 517.6,351.2 528.5,334.2 544.0,348.1 553.4,359.0 562.7,323.3 575.1,309.3 584.4,326.4 590.6,314.0 600.0,323.3 604.6,306.2 612.4,335.7 623.2,310.9 629.5,332.6 635.7,348.1" fill="none" stroke="#f05a3a" stroke-width="1"/><polyline points="55.9,337.9 66.7,337.9 70.9,341.2 76.0,342.1 81.0,348.0 86.8,347.1 91.8,345.4 95.2,338.7 99.4,338.7 103.5,342.1 116.1,328.7 127.8,327.9 132.0,323.7 135.3,326.7 142.9,325.4 147.9,326.7 156.2,324.5 163.8,327.0 168.0,325.4 173.0,327.9 179.0,326.2 186.2,325.2 192.2,331.2 210.1,332.7 222.0,337.8 237.0,332.7 249.0,337.2 258.0,330.3 266.9,334.8 281.8,332.1 287.8,337.2 299.7,339.6 311.7,337.2 322.1,337.2 326.6,324.6 335.6,322.2 339.0,323.3 351.4,319.6 357.6,326.4 373.2,326.4 390.3,343.5 401.1,341.9 405.8,335.7 416.7,340.4 423.0,335.7 438.4,344.4 444.6,340.4 463.3,343.5 481.9,334.2 491.2,338.8 506.8,343.5 516.0,343.5 528.5,341.3 538.0,342.0 553.4,348.1 559.6,340.4 575.1,332.0 587.5,332.6 606.2,324.8 610.8,329.5 624.8,323.3 635.7,334.2" fill="none" stroke="#1e78e6" stroke-width="2.3"/><rect x="2.5" y="2.5" width="637" height="229" fill="none" stroke="#000" stroke-width="1.3"/><rect x="2.5" y="234.5" width="637" height="64" fill="none" stroke="#000" stroke-width="1.3"/><rect x="2.5" y="301.5" width="637" height="62" fill="none" stroke="#000" stroke-width="1.3"/><line x1="639" y1="31.5" x2="643" y2="31.5" stroke="#000"/><line x1="639" y1="64.5" x2="643" y2="64.5" stroke="#000"/><line x1="639" y1="97.5" x2="643" y2="97.5" stroke="#000"/><line x1="639" y1="130.5" x2="643" y2="130.5" stroke="#000"/><line x1="639" y1="163.5" x2="643" y2="163.5" stroke="#000"/><line x1="639" y1="196.5" x2="643" y2="196.5" stroke="#000"/><line x1="639" y1="229.5" x2="643" y2="229.5" stroke="#000"/><line x1="639" y1="242.5" x2="643" y2="242.5" stroke="#000"/><line x1="639" y1="260.5" x2="643" y2="260.5" stroke="#000"/><line x1="639" y1="292.5" x2="643" y2="292.5" stroke="#000"/><line x1="639" y1="309.5" x2="643" y2="309.5" stroke="#000"/><line x1="639" y1="321.5" x2="643" y2="321.5" stroke="#000"/><line x1="639" y1="345.5" x2="643" y2="345.5" stroke="#000"/><line x1="639" y1="357.5" x2="643" y2="357.5" stroke="#000"/><line x1="3.5" y1="363" x2="3.5" y2="367" stroke="#000"/><line x1="67.5" y1="363" x2="67.5" y2="367" stroke="#000"/><line x1="131.5" y1="363" x2="131.5" y2="367" stroke="#000"/><line x1="195.5" y1="363" x2="195.5" y2="367" stroke="#000"/><line x1="259.5" y1="363" x2="259.5" y2="367" stroke="#000"/><line x1="323.5" y1="363" x2="323.5" y2="367" stroke="#000"/><line x1="387.5" y1="363" x2="387.5" y2="367" stroke="#000"/><line x1="451.5" y1="363" x2="451.5" y2="367" stroke="#000"/><line x1="515.5" y1="363" x2="515.5" y2="367" stroke="#000"/><line x1="579.5" y1="363" x2="579.5" y2="367" stroke="#000"/><path d="M3 356 L10 363 L3 363 Z" fill="#bbb"/></svg>
<div class="t" style="left:1166px;top:138px;font-size:10px;letter-spacing:-0.45px;color:#000;-webkit-text-stroke:0.25px #000">1857.35</div>
<div class="t" style="left:1166px;top:171px;font-size:10px;letter-spacing:-0.45px;color:#000;-webkit-text-stroke:0.25px #000">1855.65</div>
<div class="t" style="left:1166px;top:204px;font-size:10px;letter-spacing:-0.45px;color:#000;-webkit-text-stroke:0.25px #000">1853.90</div>
<div class="t" style="left:1166px;top:237px;font-size:10px;letter-spacing:-0.45px;color:#000;-webkit-text-stroke:0.25px #000">1852.20</div>
<div class="t" style="left:1166px;top:270px;font-size:10px;letter-spacing:-0.45px;color:#000;-webkit-text-stroke:0.25px #000">1850.45</div>
<div class="t" style="left:1166px;top:303px;font-size:10px;letter-spacing:-0.45px;color:#000;-webkit-text-stroke:0.25px #000">1848.75</div>
<div class="t" style="left:1166px;top:336px;font-size:10px;letter-spacing:-0.45px;color:#000;-webkit-text-stroke:0.25px #000">1847.05</div>
<div class="t" style="left:1164px;top:348px;font-size:10px;letter-spacing:-0.45px;color:#000;-webkit-text-stroke:0.25px #000">0.775</div>
<div class="t" style="left:1164px;top:366px;font-size:10px;letter-spacing:-0.45px;color:#000;-webkit-text-stroke:0.25px #000">0.00</div>
<div class="t" style="left:1163px;top:398px;font-size:10px;letter-spacing:-0.45px;color:#000;-webkit-text-stroke:0.25px #000">-1.211</div>
<div class="t" style="left:1164px;top:415px;font-size:10px;letter-spacing:-0.45px;color:#000;-webkit-text-stroke:0.25px #000">100</div>
<div class="t" style="left:1164px;top:428px;font-size:10px;letter-spacing:-0.45px;color:#000;-webkit-text-stroke:0.25px #000">70</div>
<div class="t" style="left:1164px;top:451px;font-size:10px;letter-spacing:-0.45px;color:#000;-webkit-text-stroke:0.25px #000">30</div>
<div class="t" style="left:1164px;top:464px;font-size:10px;letter-spacing:-0.45px;color:#000;-webkit-text-stroke:0.25px #000">0</div>
<div class="t" style="left:523px;top:480px;font-size:10px;letter-spacing:-0.45px;color:#000;-webkit-text-stroke:0.25px #000">6 Mar 2023</div>
<div class="t" style="left:587px;top:480px;font-size:10px;letter-spacing:-0.45px;color:#000;-webkit-text-stroke:0.25px #000">6 Mar 03:45</div>
<div class="t" style="left:651px;top:480px;font-size:10px;letter-spacing:-0.45px;color:#000;-webkit-text-stroke:0.25px #000">6 Mar 05:05</div>
<div class="t" style="left:715px;top:480px;font-size:10px;letter-spacing:-0.45px;color:#000;-webkit-text-stroke:0.25px #000">6 Mar 06:25</div>
<div class="t" style="left:779px;top:480px;font-size:10px;letter-spacing:-0.45px;color:#000;-webkit-text-stroke:0.25px #000">6 Mar 07:45</div>
<div class="t" style="left:843px;top:480px;font-size:10px;letter-spacing:-0.45px;color:#000;-webkit-text-stroke:0.25px #000">6 Mar 09:05</div>
<div class="t" style="left:907px;top:480px;font-size:10px;letter-spacing:-0.45px;color:#000;-webkit-text-stroke:0.25px #000">6 Mar 10:25</div>
<div class="t" style="left:971px;top:480px;font-size:10px;letter-spacing:-0.45px;color:#000;-webkit-text-stroke:0.25px #000">6 Mar 11:45</div>
<div class="t" style="left:1035px;top:480px;font-size:10px;letter-spacing:-0.45px;color:#000;-webkit-text-stroke:0.25px #000">6 Mar 13:05</div>
<div class="t" style="left:1099px;top:480px;font-size:10px;letter-spacing:-0.45px;color:#000;-webkit-text-stroke:0.25px #000">6 Mar 14:25</div>
<div class="t" style="left:538px;top:117px;font-size:10px;letter-spacing:-0.45px;color:#000;-webkit-text-stroke:0.25px #000;letter-spacing:-0.2px">XAUUSD.s,M5&nbsp; 1894.15 1895.42 1893.92 1894.67</div>
<div class="t" style="left:528px;top:349px;font-size:10px;letter-spacing:-0.45px;color:#000;-webkit-text-stroke:0.25px #000;letter-spacing:-0.2px">MACD(12,26,9) -0.191 -1.695</div>
<div class="t" style="left:528px;top:417px;font-size:10px;letter-spacing:-0.45px;color:#000;-webkit-text-stroke:0.25px #000;letter-spacing:-0.2px">RSI(13) 58.5332&nbsp; RSI(3) 63.7470</div>
<svg style="left:527px;top:118px;" width="8" height="6" viewBox="0 0 8 6"><path d="M0 5 L3.5 0.5 L7 5Z" fill="#000"/></svg>
<div class="a" style="left:527px;top:132px;width:52px;height:25px;background:linear-gradient(180deg,#5a5af5,#3030dc);"></div>
<div class="a" style="left:694px;top:132px;width:52px;height:25px;background:linear-gradient(180deg,#5a5af5,#3030dc);"></div>
<div class="a" style="left:527px;top:156px;width:109px;height:33px;background:linear-gradient(180deg,#3030e6,#0000b4)"></div>
<div class="a" style="left:638px;top:156px;width:108px;height:33px;background:linear-gradient(180deg,#3030e6,#0000b4)"></div>
<div class="a" style="left:531px;top:156px;width:44px;height:1px;background:#9a9af0"></div>
<div class="a" style="left:698px;top:156px;width:44px;height:1px;background:#9a9af0"></div>
<div class="t" style="left:540px;top:138px;font-size:12px;color:#eef">SELL</div>
<div class="t" style="left:708px;top:138px;font-size:12px;color:#eef">BUY</div>
<div class="t" style="left:550px;top:173px;font-size:13px;font-weight:bold;color:#fff;letter-spacing:-0.5px">1894</div>
<div class="t" style="left:582px;top:156px;font-size:34px;color:#fff;letter-spacing:-1px;line-height:34px">67</div>
<div class="t" style="left:661px;top:173px;font-size:13px;font-weight:bold;color:#fff;letter-spacing:-0.5px">1894</div>
<div class="t" style="left:692px;top:156px;font-size:34px;color:#fff;letter-spacing:-1px;line-height:34px">87</div>
<div class="a" style="left:579px;top:132px;width:115px;height:24px;background:#fff;border:1px solid #b0b0b0"></div>
<div class="a" style="left:580px;top:133px;width:21px;height:22px;background:#e6e6e6;border-right:1px solid #b8b8b8"></div>
<div class="a" style="left:671px;top:133px;width:22px;height:22px;background:#e6e6e6;border-left:1px solid #b8b8b8"></div>
<svg style="left:587px;top:141px;" width="8" height="5" viewBox="0 0 8 5"><path d="M0 0 L7 0 L3.5 4Z" fill="#111"/></svg>
<svg style="left:678px;top:141px;" width="8" height="5" viewBox="0 0 8 5"><path d="M0 4 L7 4 L3.5 0Z" fill="#111"/></svg>
<div class="t" style="right:1253px;top:137px;font-size:13px;letter-spacing:-0.3px">0.01</div>
<svg style="left:1226px;top:110px;" width="685" height="385" viewBox="0 0 685 385"><line x1="35.5" y1="2" x2="35.5" y2="363" stroke="#778899" stroke-width="1" stroke-dasharray="3,3"/><line x1="67.5" y1="2" x2="67.5" y2="363" stroke="#778899" stroke-width="1" stroke-dasharray="3,3"/><line x1="99.5" y1="2" x2="99.5" y2="363" stroke="#778899" stroke-width="1" stroke-dasharray="3,3"/><line x1="131.5" y1="2" x2="131.5" y2="363" stroke="#778899" stroke-width="1" stroke-dasharray="3,3"/><line x1="163.5" y1="2" x2="163.5" y2="363" stroke="#778899" stroke-width="1" stroke-dasharray="3,3"/><line x1="195.5" y1="2" x2="195.5" y2="363" stroke="#778899" stroke-width="1" stroke-dasharray="3,3"/><line x1="227.5" y1="2" x2="227.5" y2="363" stroke="#778899" stroke-width="1" stroke-dasharray="3,3"/><line x1="259.5" y1="2" x2="259.5" y2="363" stroke="#778899" stroke-width="1" stroke-dasharray="3,3"/><line x1="291.5" y1="2" x2="291.5" y2="363" stroke="#778899" stroke-width="1" stroke-dasharray="3,3"/><line x1="323.5" y1="2" x2="323.5" y2="363" stroke="#778899" stroke-width="1" stroke-dasharray="3,3"/><line x1="355.5" y1="2" x2="355.5" y2="363" stroke="#778899" stroke-width="1" stroke-dasharray="3,3"/><line x1="387.5" y1="2" x2="387.5" y2="363" stroke="#778899" stroke-width="1" stroke-dasharray="3,3"/><line x1="419.5" y1="2" x2="419.5" y2="363" stroke="#778899" stroke-width="1" stroke-dasharray="3,3"/><line x1="451.5" y1="2" x2="451.5" y2="363" stroke="#778899" stroke-width="1" stroke-dasharray="3,3"/><line x1="483.5" y1="2" x2="483.5" y2="363" stroke="#778899" stroke-width="1" stroke-dasharray="3,3"/><line x1="515.5" y1="2" x2="515.5" y2="363" stroke="#778899" stroke-width="1" stroke-dasharray="3,3"/><line x1="547.5" y1="2" x2="547.5" y2="363" stroke="#778899" stroke-width="1" stroke-dasharray="3,3"/><line x1="579.5" y1="2" x2="579.5" y2="363" stroke="#778899" stroke-width="1" stroke-dasharray="3,3"/><line x1="611.5" y1="2" x2="611.5" y2="363" stroke="#778899" stroke-width="1" stroke-dasharray="3,3"/><line x1="4" y1="31.5" x2="639" y2="31.5" stroke="#778899" stroke-width="1" stroke-dasharray="3,3"/><line x1="4" y1="64.5" x2="639" y2="64.5" stroke="#778899" stroke-width="1" stroke-dasharray="3,3"/><line x1="4" y1="97.5" x2="639" y2="97.5" stroke="#778899" stroke-width="1" stroke-dasharray="3,3"/><line x1="4" y1="130.5" x2="639" y2="130.5" stroke="#778899" stroke-width="1" stroke-dasharray="3,3"/><line x1="4" y1="163.5" x2="639" y2="163.5" stroke="#778899" stroke-width="1" stroke-dasharray="3,3"/><line x1="4" y1="196.5" x2="639" y2="196.5" stroke="#778899" stroke-width="1" stroke-dasharray="3,3"/><line x1="4" y1="229.5" x2="639" y2="229.5" stroke="#778899" stroke-width="1" stroke-dasharray="3,3"/><line x1="4" y1="262.5" x2="639" y2="262.5" stroke="#778899" stroke-width="1" stroke-dasharray="3,3"/><line x1="4" y1="295.5" x2="639" y2="295.5" stroke="#778899" stroke-width="1" stroke-dasharray="3,3"/><line x1="4" y1="328.5" x2="639" y2="328.5" stroke="#778899" stroke-width="1" stroke-dasharray="3,3"/><line x1="4" y1="361.5" x2="639" y2="361.5" stroke="#778899" stroke-width="1" stroke-dasharray="3,3"/><line x1="3" y1="81.5" x2="639" y2="81.5" stroke="#8a9aaa" stroke-width="1"/><line x1="3" y1="100.5" x2="639" y2="100.5" stroke="#20c020" stroke-width="1" stroke-dasharray="8,4,2,4"/><line x1="3" y1="269.5" x2="639" y2="269.5" stroke="#20c020" stroke-width="1" stroke-dasharray="8,4,2,4"/><path d="M3.5 283.2V304.1 M5.5 285.6V304.2 M7.5 285.0V305.6 M9.5 277.7V300.0 M11.5 281.6V308.5 M13.5 285.1V294.0 M15.5 282.5V294.7 M17.5 276.1V300.6 M19.5 278.3V298.2 M21.5 279.7V308.3 M23.5 286.6V298.0 M25.5 286.8V304.5 M27.5 291.2V312.0 M29.5 293.3V312.6 M31.5 287.7V308.3 M33.5 287.0V305.5 M35.5 290.6V301.5 M37.5 295.8V309.0 M39.5 292.8V314.0 M41.5 295.9V310.9 M43.5 301.9V325.9 M45.5 303.0V321.6 M47.5 301.0V325.2 M49.5 313.5V326.5 M51.5 311.2V330.2 M53.5 312.8V332.2 M55.5 315.7V337.0 M57.5 321.1V341.6 M59.5 322.3V347.3 M61.5 326.9V343.9 M63.5 319.5V343.2 M65.5 318.2V339.3 M67.5 320.1V337.1 M69.5 320.3V341.2 M71.5 332.4V341.8 M73.5 331.6V340.0 M75.5 330.9V343.1 M77.5 330.0V349.6 M79.5 332.0V341.6 M81.5 327.7V349.0 M83.5 327.6V348.3 M85.5 323.3V342.8 M87.5 321.1V343.6 M89.5 315.2V338.2 M91.5 310.0V333.9 M93.5 311.8V328.8 M95.5 302.0V325.6 M97.5 308.1V325.0 M99.5 306.7V327.4 M101.5 302.5V318.6 M103.5 305.9V323.3 M105.5 308.0V316.7 M107.5 303.6V316.4 M109.5 304.4V323.8 M111.5 305.3V322.4 M113.5 313.3V326.8 M115.5 309.6V327.9 M117.5 313.4V333.2 M119.5 319.2V330.9 M121.5 320.2V337.8 M123.5 327.1V340.5 M125.5 330.9V343.1 M127.5 324.8V345.7 M129.5 328.8V340.5 M131.5 322.2V334.5 M133.5 309.0V335.3 M135.5 307.3V320.7 M137.5 289.7V309.2 M139.5 281.2V299.7 M141.5 279.2V304.6 M143.5 285.1V300.0 M145.5 276.4V297.0 M147.5 271.8V294.4 M149.5 276.2V293.4 M151.5 272.6V297.6 M153.5 264.9V293.5 M155.5 267.2V291.2 M157.5 273.2V287.2 M159.5 265.7V286.4 M161.5 270.2V281.4 M163.5 261.8V282.0 M165.5 257.0V281.1 M167.5 259.8V278.2 M169.5 255.6V274.4 M171.5 252.2V272.6 M173.5 248.8V268.2 M175.5 240.0V265.9 M177.5 246.0V259.7 M179.5 244.2V256.9 M181.5 235.7V259.1 M183.5 240.9V252.0 M185.5 238.1V261.9 M187.5 236.3V255.7 M189.5 241.3V254.9 M191.5 246.0V256.6 M193.5 243.2V255.8 M195.5 243.5V260.8 M197.5 242.6V256.8 M199.5 246.3V260.9 M201.5 251.8V262.8 M203.5 250.1V268.7 M205.5 257.3V272.1 M207.5 260.7V275.2 M209.5 249.2V271.7 M211.5 250.9V266.8 M213.5 254.6V268.6 M215.5 254.5V268.8 M217.5 251.0V271.2 M219.5 253.3V271.7 M221.5 255.8V261.7 M223.5 252.3V265.8 M225.5 249.9V264.4 M227.5 258.2V268.2 M229.5 251.1V268.9 M231.5 251.3V264.4 M233.5 251.1V270.1 M235.5 254.5V266.8 M237.5 252.1V264.4 M239.5 246.7V268.2 M241.5 245.9V265.4 M243.5 239.3V263.3 M245.5 243.7V261.8 M247.5 241.0V261.6 M249.5 246.6V256.3 M251.5 236.0V251.3 M253.5 228.6V251.1 M255.5 233.1V250.1 M257.5 235.2V255.3 M259.5 241.0V252.1 M261.5 234.2V246.1 M263.5 232.5V243.9 M265.5 226.2V244.8 M267.5 229.2V246.9 M269.5 229.3V249.1 M271.5 225.2V239.7 M273.5 225.2V236.8 M275.5 222.1V238.4 M277.5 221.6V238.7 M279.5 220.7V227.5 M281.5 210.0V230.9 M283.5 212.1V225.9 M285.5 200.6V222.1 M287.5 206.5V221.1 M289.5 202.8V221.9 M291.5 204.8V216.1 M293.5 200.3V209.0 M295.5 194.6V212.1 M297.5 194.7V211.1 M299.5 194.1V216.5 M301.5 188.7V212.1 M303.5 193.3V207.5 M305.5 193.0V210.9 M307.5 188.7V214.8 M309.5 195.4V204.4 M311.5 198.3V207.5 M313.5 192.4V211.8 M315.5 197.5V211.7 M317.5 201.0V218.7 M319.5 204.1V222.1 M321.5 206.3V220.0 M323.5 205.8V228.3 M325.5 208.8V230.1 M327.5 207.5V225.6 M329.5 211.2V227.2 M331.5 220.8V230.7 M333.5 214.8V230.0 M335.5 217.7V229.4 M337.5 217.2V229.3 M339.5 216.2V240.0 M341.5 225.5V238.0 M343.5 224.6V244.8 M345.5 224.5V238.0 M347.5 218.2V236.8 M349.5 224.7V241.7 M351.5 231.4V242.9 M353.5 226.7V246.9 M355.5 236.1V248.1 M357.5 232.3V245.9 M359.5 229.7V249.0 M361.5 238.1V252.1 M363.5 236.6V258.1 M365.5 254.7V278.9 M367.5 266.4V295.4 M369.5 280.4V310.9 M371.5 289.3V323.3 M373.5 300.4V328.1 M375.5 308.3V326.1 M377.5 312.6V326.1 M379.5 307.9V335.2 M381.5 309.7V332.7 M383.5 312.1V333.0 M385.5 317.2V327.1 M387.5 313.4V334.3 M389.5 320.6V334.4 M391.5 319.2V337.8 M393.5 317.4V340.1 M395.5 320.8V342.2 M397.5 316.1V339.4 M399.5 323.2V340.8 M401.5 328.3V338.9 M403.5 320.1V341.8 M405.5 323.0V332.8 M407.5 322.9V341.9 M409.5 321.0V337.5 M411.5 311.1V334.6 M413.5 312.6V325.0 M415.5 311.7V329.7 M417.5 317.3V331.7 M419.5 321.7V332.5 M421.5 320.6V337.2 M423.5 320.0V331.2 M425.5 316.3V335.7 M427.5 315.1V331.6 M429.5 320.0V336.0 M431.5 322.7V335.5 M433.5 311.3V334.4 M435.5 320.0V333.1 M437.5 318.1V332.4 M439.5 316.4V328.8 M441.5 319.4V336.8 M443.5 327.2V334.8 M445.5 320.6V338.4 M447.5 318.9V334.6 M449.5 311.6V321.4 M451.5 308.4V326.0 M453.5 301.8V324.2 M455.5 300.3V311.3 M457.5 291.3V315.4 M459.5 284.5V300.1 M461.5 276.3V293.8 M463.5 277.6V297.5 M465.5 278.1V296.6 M467.5 266.7V290.5 M469.5 268.5V292.8 M471.5 271.9V282.7 M473.5 265.9V287.9 M475.5 265.5V282.9 M477.5 256.3V279.8 M479.5 260.4V277.4 M481.5 263.6V281.1 M483.5 257.5V278.6 M485.5 263.6V274.0 M487.5 255.7V271.3 M489.5 257.7V273.0 M491.5 253.3V270.1 M493.5 252.4V266.9 M495.5 251.8V263.8 M497.5 247.9V262.9 M499.5 246.6V262.7 M501.5 228.8V251.3 M503.5 209.2V241.5 M505.5 189.7V221.7 M507.5 166.4V200.4 M509.5 153.2V184.5 M511.5 141.1V176.1 M513.5 135.0V157.1 M515.5 155.0V162.0 M517.5 115.0V147.6 M519.5 81.0V134.0 M521.5 98.0V139.0 M523.5 119.5V140.0 M525.5 126.7V150.0 M527.5 99.0V150.0 M529.5 104.0V116.0 M531.5 115.0V121.0 M533.5 119.5V135.7 M535.5 119.5V146.4 M537.5 132.0V152.7 M539.5 107.0V141.0 M541.5 83.7V114.0 M543.5 101.6V123.0 M545.5 90.0V124.0 M547.5 56.0V105.0 M549.5 35.0V85.5 M551.5 26.0V78.0 M553.5 25.4V56.8 M555.5 34.4V56.0 M557.5 27.0V39.0 M559.5 25.4V40.7 M561.5 20.0V41.6 M563.5 21.9V29.9 M565.5 21.9V35.3 M567.5 27.2V34.4 M569.5 21.9V34.4 M571.5 26.3V49.6 M573.5 41.6V53.2 M575.5 45.2V56.8 M577.5 52.3V60.4 M579.5 49.6V60.4 M581.5 24.5V38.9 M583.5 25.4V38.9 M585.5 23.6V64.0 M587.5 49.6V63.1 M589.5 50.5V59.5 M591.5 49.6V62.2 M593.5 28.1V65.8 M595.5 31.7V79.2 M597.5 40.7V64.0 M599.5 38.0V57.7 M601.5 37.1V58.6 M603.5 34.4V47.8 M605.5 35.3V53.2 M607.5 40.7V58.6 M609.5 51.4V57.7 M611.5 49.6V54.1 M613.5 51.4V58.6 M615.5 53.2V64.9 M617.5 49.6V60.4 M619.5 48.7V55.0 M621.5 49.6V57.7 M623.5 54.1V63.1 M625.5 58.6V66.7 M627.5 58.6V69.3 M629.5 57.7V76.5 M631.5 74.7V108.8 M633.5 69.3V106.1" stroke="#1ee81e" stroke-width="1"/><polyline points="11.0,293.5 13.0,292.3 15.0,291.3 17.0,290.4 19.0,289.8 21.0,291.0 23.0,291.4 25.0,292.6 27.0,295.2 29.0,297.4 31.0,297.6 33.0,297.2 35.0,296.9 37.0,298.4 39.0,299.9 41.0,300.9 43.0,304.6 45.0,306.8 47.0,308.6 49.0,311.8 51.0,314.4 53.0,316.7 55.0,319.5 57.0,322.9 59.0,326.3 61.0,328.9 63.0,329.6 65.0,329.3 67.0,329.1 69.0,329.6 71.0,331.7 73.0,332.9 75.0,334.1 77.0,335.7 79.0,336.0 81.0,336.7 83.0,337.0 85.0,335.9 87.0,334.9 89.0,332.6 91.0,329.5 93.0,326.9 95.0,323.1 97.0,321.3 99.0,320.1 101.0,317.3 103.0,316.6 105.0,315.4 107.0,313.8 109.0,313.9 111.0,313.9 113.0,315.7 115.0,316.5 117.0,318.5 119.0,320.3 121.0,322.8 123.0,326.0 125.0,329.1 127.0,330.9 129.0,332.0 131.0,330.9 133.0,328.4 135.0,324.3 137.0,317.2 139.0,309.6 141.0,304.5 143.0,301.1 145.0,297.0 147.0,293.0 149.0,290.7 151.0,289.1 153.0,286.3 155.0,284.2 157.0,283.1 159.0,281.1 161.0,279.6 163.0,277.4 165.0,275.0 167.0,273.3 169.0,270.9 171.0,268.5 173.0,265.6 175.0,262.0 177.0,259.4 179.0,256.9 181.0,254.2 183.0,252.0 185.0,251.4 187.0,249.9 189.0,249.4 191.0,249.9 193.0,249.8 195.0,250.5 197.0,250.2 199.0,251.2 201.0,253.0 203.0,254.8 205.0,257.6 207.0,260.6 209.0,260.5 211.0,260.1 213.0,260.5 215.0,260.8 217.0,260.9 219.0,261.4 221.0,260.6 223.0,260.2 225.0,259.3 227.0,260.4 229.0,260.3 231.0,259.6 233.0,259.9 235.0,260.1 237.0,259.6 239.0,259.0 241.0,258.0 243.0,256.1 245.0,255.2 247.0,254.1 249.0,253.3 251.0,250.5 253.0,247.5 255.0,245.8 257.0,245.7 259.0,245.9 261.0,244.3 263.0,242.5 265.0,240.5 267.0,239.8 269.0,239.6 271.0,237.6 273.0,235.7 275.0,234.1 277.0,233.0 279.0,230.5 281.0,227.6 283.0,225.1 285.0,221.2 287.0,219.1 289.0,217.2 291.0,215.2 293.0,212.2 295.0,209.7 297.0,207.7 299.0,207.0 301.0,205.1 303.0,203.8 305.0,203.3 307.0,202.8 309.0,202.0 311.0,202.3 313.0,202.2 315.0,202.9 317.0,204.9 319.0,207.2 321.0,208.9 323.0,211.2 325.0,213.6 327.0,214.4 329.0,215.8 331.0,218.6 333.0,219.7 335.0,220.8 337.0,221.5 339.0,223.4 341.0,225.8 343.0,228.3 345.0,229.2 347.0,228.7 349.0,230.0 351.0,232.0 353.0,233.4 355.0,235.9 357.0,236.8 359.0,237.5 361.0,239.7 363.0,241.9 365.0,249.0 367.0,258.1 369.0,268.8 371.0,279.5 373.0,289.5 375.0,297.4 377.0,303.6 379.0,308.8 381.0,312.3 383.0,315.2 385.0,317.2 387.0,319.1 389.0,321.5 391.0,323.5 393.0,325.0 395.0,326.9 397.0,327.1 399.0,328.5 401.0,330.0 403.0,330.2 405.0,329.6 407.0,330.4 409.0,330.1 411.0,328.0 413.0,325.4 415.0,324.1 417.0,324.2 419.0,325.0 421.0,326.1 423.0,326.0 425.0,326.0 427.0,325.2 429.0,326.0 431.0,326.9 433.0,325.7 435.0,326.0 437.0,325.8 439.0,324.9 441.0,325.8 443.0,327.3 445.0,327.9 447.0,327.6 449.0,324.4 451.0,322.3 453.0,319.7 455.0,315.7 457.0,312.2 459.0,306.5 461.0,300.4 463.0,296.7 465.0,294.0 467.0,289.6 469.0,287.1 471.0,284.3 473.0,282.2 475.0,279.9 477.0,276.5 479.0,274.3 481.0,273.8 483.0,272.1 485.0,271.2 487.0,269.0 489.0,267.9 491.0,266.2 493.0,264.3 495.0,262.4 497.0,260.4 499.0,258.8 501.0,253.4 503.0,245.4 505.0,234.1 507.0,219.6 509.0,205.1 511.0,191.8 513.0,178.7 515.0,173.0 517.0,161.1 519.0,145.8 521.0,138.0 523.0,135.6 525.0,136.4 527.0,133.0 529.0,126.4 531.0,124.0 533.0,125.0 535.0,127.3 537.0,131.6 539.0,129.4 541.0,120.7 543.0,118.3 545.0,115.1 547.0,105.2 549.0,92.4 551.0,80.8 553.0,69.5 555.0,62.5 557.0,54.1 559.0,48.1 561.0,43.1 563.0,38.2 565.0,35.5 567.0,34.1 569.0,32.4 571.0,34.0 573.0,37.8 575.0,41.6 577.0,45.8 579.0,48.4 581.0,43.7 583.0,40.4 585.0,41.4 587.0,45.6 589.0,48.3 591.0,50.5 593.0,49.5 595.0,51.2 597.0,51.5 599.0,50.5 601.0,49.7 603.0,47.3 605.0,46.4 607.0,47.3 609.0,49.4 611.0,50.1 613.0,51.5 615.0,53.7 617.0,54.0 619.0,53.4 621.0,53.5 623.0,55.0 625.0,57.1 627.0,59.1 629.0,61.4 631.0,70.1 633.0,75.1" fill="none" stroke="#ff4a4a" stroke-width="1"/><polyline points="19.0,291.6 21.0,291.9 23.0,292.0 25.0,292.4 27.0,293.5 29.0,294.6 31.0,295.0 33.0,295.1 35.0,295.2 37.0,296.1 39.0,296.9 41.0,297.7 43.0,299.6 45.0,301.1 47.0,302.5 49.0,304.6 51.0,306.5 53.0,308.4 55.0,310.5 57.0,312.9 59.0,315.5 61.0,317.8 63.0,319.4 65.0,320.5 67.0,321.5 69.0,322.6 71.0,324.3 73.0,325.6 75.0,327.0 77.0,328.5 79.0,329.5 81.0,330.5 83.0,331.4 85.0,331.6 87.0,331.7 89.0,331.1 91.0,330.0 93.0,328.9 95.0,327.1 97.0,325.9 99.0,324.8 101.0,323.1 103.0,322.1 105.0,321.0 107.0,319.7 109.0,319.0 111.0,318.4 113.0,318.6 115.0,318.6 117.0,319.2 119.0,319.9 121.0,320.9 123.0,322.5 125.0,324.2 127.0,325.5 129.0,326.6 131.0,326.8 133.0,326.2 135.0,324.8 137.0,321.8 139.0,318.1 141.0,315.0 143.0,312.4 145.0,309.4 147.0,306.3 149.0,303.8 151.0,301.6 153.0,298.9 155.0,296.6 157.0,294.7 159.0,292.5 161.0,290.5 163.0,288.3 165.0,286.1 167.0,284.1 169.0,281.8 171.0,279.5 173.0,277.1 175.0,274.2 177.0,271.7 179.0,269.2 181.0,266.6 183.0,264.3 185.0,262.6 187.0,260.6 189.0,259.2 191.0,258.2 193.0,257.2 195.0,256.6 197.0,255.8 199.0,255.5 201.0,255.8 203.0,256.2 205.0,257.2 207.0,258.4 209.0,258.7 211.0,258.7 213.0,259.0 215.0,259.3 217.0,259.6 219.0,259.9 221.0,259.8 223.0,259.7 225.0,259.4 227.0,259.8 229.0,259.9 231.0,259.6 233.0,259.7 235.0,259.8 237.0,259.7 239.0,259.4 241.0,259.0 243.0,258.1 245.0,257.4 247.0,256.7 249.0,256.1 251.0,254.6 253.0,252.9 255.0,251.6 257.0,250.8 259.0,250.3 261.0,249.1 263.0,247.8 265.0,246.4 267.0,245.4 269.0,244.7 271.0,243.2 273.0,241.8 275.0,240.4 277.0,239.2 279.0,237.4 281.0,235.4 283.0,233.5 285.0,230.9 287.0,228.9 289.0,226.9 291.0,225.0 293.0,222.6 295.0,220.3 297.0,218.3 299.0,216.8 301.0,214.8 303.0,213.1 305.0,211.8 307.0,210.6 309.0,209.4 311.0,208.6 313.0,207.8 315.0,207.5 317.0,207.8 319.0,208.4 321.0,208.9 323.0,209.9 325.0,211.0 327.0,211.7 329.0,212.6 331.0,214.1 333.0,215.1 335.0,216.1 337.0,216.9 339.0,218.2 341.0,219.8 343.0,221.6 345.0,222.7 347.0,223.3 349.0,224.4 351.0,225.9 353.0,227.2 355.0,229.0 357.0,230.2 359.0,231.2 361.0,232.9 363.0,234.6 365.0,238.4 367.0,243.4 369.0,249.5 371.0,256.2 373.0,263.0 375.0,269.4 377.0,275.3 379.0,280.7 381.0,285.5 383.0,289.8 385.0,293.6 387.0,297.2 389.0,300.8 391.0,304.0 393.0,306.9 395.0,309.8 397.0,311.9 399.0,314.3 401.0,316.6 403.0,318.3 405.0,319.4 407.0,320.9 409.0,321.9 411.0,322.0 413.0,321.6 415.0,321.5 417.0,321.9 419.0,322.5 421.0,323.2 423.0,323.5 425.0,323.8 427.0,323.8 429.0,324.3 431.0,324.8 433.0,324.6 435.0,324.8 437.0,324.9 439.0,324.6 441.0,325.0 443.0,325.7 445.0,326.2 447.0,326.2 449.0,325.1 451.0,324.2 453.0,322.8 455.0,320.8 457.0,318.8 459.0,315.7 461.0,312.1 463.0,309.2 465.0,306.6 467.0,303.3 469.0,300.6 471.0,297.9 473.0,295.4 475.0,292.9 477.0,290.0 479.0,287.5 481.0,285.7 483.0,283.7 485.0,281.9 487.0,279.7 489.0,278.0 491.0,276.1 493.0,274.2 495.0,272.3 497.0,270.3 499.0,268.4 501.0,265.1 503.0,260.4 505.0,254.0 507.0,245.7 509.0,236.6 511.0,227.5 513.0,217.9 515.0,210.9 517.0,201.5 519.0,190.5 521.0,182.0 523.0,175.9 525.0,171.4 527.0,165.9 529.0,159.3 531.0,154.5 533.0,151.3 535.0,149.2 537.0,148.4 539.0,145.5 541.0,140.0 543.0,136.7 545.0,133.2 547.0,127.0 549.0,119.2 551.0,111.3 553.0,103.0 555.0,96.2 557.0,88.8 559.0,82.2 561.0,76.2 563.0,70.3 565.0,65.4 567.0,61.3 569.0,57.4 571.0,55.1 573.0,54.2 575.0,53.8 577.0,54.1 579.0,54.2 581.0,51.6 583.0,49.3 585.0,48.6 587.0,49.6 589.0,50.2 591.0,50.9 593.0,50.4 595.0,51.0 597.0,51.2 599.0,50.8 601.0,50.4 603.0,49.3 605.0,48.7 607.0,48.8 609.0,49.5 611.0,49.8 613.0,50.4 615.0,51.4 617.0,51.8 619.0,51.8 621.0,52.1 623.0,52.8 625.0,54.0 627.0,55.2 629.0,56.6 631.0,60.7 633.0,63.9" fill="none" stroke="#5ab8f0" stroke-width="1"/><path d="M28.0 309.0 L34.0 316.0 L30.5 316.0 L30.5 323.0 L25.5 323.0 L25.5 316.0 L22.0 316.0Z" fill="#10f010"/><path d="M96.8 324.0 L102.8 331.0 L99.3 331.0 L99.3 338.0 L94.3 338.0 L94.3 331.0 L90.8 331.0Z" fill="#10f010"/><path d="M92.5 335.8 L98.5 342.8 L95.0 342.8 L95.0 349.8 L90.0 349.8 L90.0 342.8 L86.5 342.8Z" fill="#10f010"/><path d="M145.2 287.4 L151.2 294.4 L147.7 294.4 L147.7 301.4 L142.7 301.4 L142.7 294.4 L139.2 294.4Z" fill="#10f010"/><path d="M150.6 296.0 L156.6 303.0 L153.1 303.0 L153.1 310.0 L148.1 310.0 L148.1 303.0 L144.6 303.0Z" fill="#10f010"/><path d="M171.0 281.0 L177.0 288.0 L173.5 288.0 L173.5 295.0 L168.5 295.0 L168.5 288.0 L165.0 288.0Z" fill="#10f010"/><path d="M176.4 269.0 L182.4 276.0 L178.9 276.0 L178.9 283.0 L173.9 283.0 L173.9 276.0 L170.4 276.0Z" fill="#10f010"/><path d="M187.2 262.6 L193.2 269.6 L189.7 269.6 L189.7 276.6 L184.7 276.6 L184.7 269.6 L181.2 269.6Z" fill="#10f010"/><path d="M157.0 260.5 L163.0 267.5 L159.5 267.5 L159.5 274.5 L154.5 274.5 L154.5 267.5 L151.0 267.5Z" fill="#10f010"/><path d="M237.7 267.0 L243.7 274.0 L240.2 274.0 L240.2 281.0 L235.2 281.0 L235.2 274.0 L231.7 274.0Z" fill="#10f010"/><path d="M247.4 258.3 L253.4 265.3 L249.9 265.3 L249.9 272.3 L244.9 272.3 L244.9 265.3 L241.4 265.3Z" fill="#10f010"/><path d="M252.8 258.3 L258.8 265.3 L255.3 265.3 L255.3 272.3 L250.3 272.3 L250.3 265.3 L246.8 265.3Z" fill="#10f010"/><path d="M258.0 245.4 L264.0 252.4 L260.5 252.4 L260.5 259.4 L255.5 259.4 L255.5 252.4 L252.0 252.4Z" fill="#10f010"/><path d="M266.7 232.5 L272.7 239.5 L269.2 239.5 L269.2 246.5 L264.2 246.5 L264.2 239.5 L260.7 239.5Z" fill="#10f010"/><path d="M288.2 214.3 L294.2 221.3 L290.7 221.3 L290.7 228.3 L285.7 228.3 L285.7 221.3 L282.2 221.3Z" fill="#10f010"/><path d="M413.0 324.4 L419.0 331.4 L415.5 331.4 L415.5 338.4 L410.5 338.4 L410.5 331.4 L407.0 331.4Z" fill="#10f010"/><path d="M453.5 320.5 L459.5 327.5 L456.0 327.5 L456.0 334.5 L451.0 334.5 L451.0 327.5 L447.5 327.5Z" fill="#10f010"/><path d="M459.0 287.6 L465.0 294.6 L461.5 294.6 L461.5 301.6 L456.5 301.6 L456.5 294.6 L453.0 294.6Z" fill="#10f010"/><path d="M466.7 282.4 L472.7 289.4 L469.2 289.4 L469.2 296.4 L464.2 296.4 L464.2 289.4 L460.7 289.4Z" fill="#10f010"/><path d="M501.0 277.0 L507.0 284.0 L503.5 284.0 L503.5 291.0 L498.5 291.0 L498.5 284.0 L495.0 284.0Z" fill="#10f010"/><path d="M522.2 146.6 L528.2 153.6 L524.7 153.6 L524.7 160.6 L519.7 160.6 L519.7 153.6 L516.2 153.6Z" fill="#10f010"/><path d="M550.5 86.0 L556.5 93.0 L553.0 93.0 L553.0 100.0 L548.0 100.0 L548.0 93.0 L544.5 93.0Z" fill="#10f010"/><path d="M5.5 308.8 L11.5 301.8 L8.0 301.8 L8.0 294.8 L3.0 294.8 L3.0 301.8 L-0.5 301.8Z" fill="#ff1a1a"/><path d="M42.0 320.6 L48.0 313.6 L44.5 313.6 L44.5 306.6 L39.5 306.6 L39.5 313.6 L36.0 313.6Z" fill="#ff1a1a"/><path d="M53.8 342.0 L59.8 335.0 L56.3 335.0 L56.3 328.0 L51.3 328.0 L51.3 335.0 L47.8 335.0Z" fill="#ff1a1a"/><path d="M84.0 338.9 L90.0 331.9 L86.5 331.9 L86.5 324.9 L81.5 324.9 L81.5 331.9 L78.0 331.9Z" fill="#ff1a1a"/><path d="M124.8 337.8 L130.8 330.8 L127.3 330.8 L127.3 323.8 L122.3 323.8 L122.3 330.8 L118.8 330.8Z" fill="#ff1a1a"/><path d="M206.5 270.0 L212.5 263.0 L209.0 263.0 L209.0 256.0 L204.0 256.0 L204.0 263.0 L200.5 263.0Z" fill="#ff1a1a"/><path d="M276.4 222.7 L282.4 215.7 L278.9 215.7 L278.9 208.7 L273.9 208.7 L273.9 215.7 L270.4 215.7Z" fill="#ff1a1a"/><path d="M343.0 223.5 L349.0 216.5 L345.5 216.5 L345.5 209.5 L340.5 209.5 L340.5 216.5 L337.0 216.5Z" fill="#ff1a1a"/><path d="M361.6 251.0 L367.6 244.0 L364.1 244.0 L364.1 237.0 L359.1 237.0 L359.1 244.0 L355.6 244.0Z" fill="#ff1a1a"/><path d="M373.4 322.0 L379.4 315.0 L375.9 315.0 L375.9 308.0 L370.9 308.0 L370.9 315.0 L367.4 315.0Z" fill="#ff1a1a"/><path d="M381.3 332.5 L387.3 325.5 L383.8 325.5 L383.8 318.5 L378.8 318.5 L378.8 325.5 L375.3 325.5Z" fill="#ff1a1a"/><path d="M437.8 332.5 L443.8 325.5 L440.3 325.5 L440.3 318.5 L435.3 318.5 L435.3 325.5 L431.8 325.5Z" fill="#ff1a1a"/><path d="M621.7 53.7 L627.7 46.7 L624.2 46.7 L624.2 39.7 L619.2 39.7 L619.2 46.7 L615.7 46.7Z" fill="#ff1a1a"/><text x="16.0" y="285.0" font-family="Liberation Sans" font-size="11" fill="#f03c3c" text-anchor="middle" letter-spacing="-0.6">SS</text><text x="21.6" y="288.6" font-family="Liberation Sans" font-size="11" fill="#f03c3c" text-anchor="middle" letter-spacing="-0.6">BLB</text><text x="33.4" y="299.0" font-family="Liberation Sans" font-size="11" fill="#f03c3c" text-anchor="middle" letter-spacing="-0.6">BLB</text><text x="8.7" y="314.1" font-family="Liberation Sans" font-size="13" fill="#f03c3c" text-anchor="middle" letter-spacing="-0.6">SX</text><text x="31.0" y="311.0" font-family="Liberation Sans" font-size="11" fill="#f03c3c" text-anchor="middle" letter-spacing="-0.6">BLB</text><text x="86.0" y="308.0" font-family="Liberation Sans" font-size="11" fill="#f03c3c" text-anchor="middle" letter-spacing="-0.6">HI</text><text x="88.0" y="318.7" font-family="Liberation Sans" font-size="11" fill="#f03c3c" text-anchor="middle" letter-spacing="-0.6">HM-X</text><text x="59.2" y="331.6" font-family="Liberation Sans" font-size="11" fill="#f03c3c" text-anchor="middle" letter-spacing="-0.6">BLB</text><text x="52.8" y="354.7" font-family="Liberation Sans" font-size="13" fill="#f03c3c" text-anchor="middle" letter-spacing="-0.6">SX</text><text x="77.5" y="357.1" font-family="Liberation Sans" font-size="13" fill="#f03c3c" text-anchor="middle" letter-spacing="-0.6">SX</text><text x="108.7" y="327.3" font-family="Liberation Sans" font-size="11" fill="#f03c3c" text-anchor="middle" letter-spacing="-0.6">BLB</text><text x="128.0" y="329.1" font-family="Liberation Sans" font-size="13" fill="#f03c3c" text-anchor="middle" letter-spacing="-0.6">SX</text><text x="137.7" y="274.6" font-family="Liberation Sans" font-size="11" fill="#f03c3c" text-anchor="middle" letter-spacing="-0.6">SS</text><text x="138.8" y="282.0" font-family="Liberation Sans" font-size="11" fill="#f03c3c" text-anchor="middle" letter-spacing="-0.6">BLB</text><text x="161.4" y="259.6" font-family="Liberation Sans" font-size="11" fill="#f03c3c" text-anchor="middle" letter-spacing="-0.6">HM</text><text x="163.5" y="252.0" font-family="Liberation Sans" font-size="11" fill="#f03c3c" text-anchor="middle" letter-spacing="-0.6">TLS</text><text x="158.0" y="269.0" font-family="Liberation Sans" font-size="11" fill="#f03c3c" text-anchor="middle" letter-spacing="-0.6">SS</text><text x="177.5" y="233.8" font-family="Liberation Sans" font-size="11" fill="#f03c3c" text-anchor="middle" letter-spacing="-0.6">HM</text><text x="178.6" y="243.5" font-family="Liberation Sans" font-size="11" fill="#f03c3c" text-anchor="middle" letter-spacing="-0.6">BLB</text><text x="192.5" y="253.0" font-family="Liberation Sans" font-size="11" fill="#f03c3c" text-anchor="middle" letter-spacing="-0.6">SS</text><text x="224.8" y="259.6" font-family="Liberation Sans" font-size="11" fill="#f03c3c" text-anchor="middle" letter-spacing="-0.6">BLB</text><text x="214.0" y="267.0" font-family="Liberation Sans" font-size="11" fill="#f03c3c" text-anchor="middle" letter-spacing="-0.6">B</text><text x="212.0" y="294.7" font-family="Liberation Sans" font-size="13" fill="#f03c3c" text-anchor="middle" letter-spacing="-0.6">SX</text><text x="261.4" y="221.0" font-family="Liberation Sans" font-size="11" fill="#f03c3c" text-anchor="middle" letter-spacing="-0.6">TBLS</text><text x="281.8" y="201.5" font-family="Liberation Sans" font-size="11" fill="#f03c3c" text-anchor="middle" letter-spacing="-0.6">HM</text><text x="298.0" y="196.0" font-family="Liberation Sans" font-size="11" fill="#f03c3c" text-anchor="middle" letter-spacing="-0.6">BLB</text><text x="347.0" y="218.0" font-family="Liberation Sans" font-size="11" fill="#f03c3c" text-anchor="middle" letter-spacing="-0.6">BLB</text><text x="350.0" y="242.0" font-family="Liberation Sans" font-size="11" fill="#f03c3c" text-anchor="middle" letter-spacing="-0.6">SX</text><text x="360.0" y="240.5" font-family="Liberation Sans" font-size="11" fill="#f03c3c" text-anchor="middle" letter-spacing="-0.6">BLB</text><text x="367.0" y="272.0" font-family="Liberation Sans" font-size="11" fill="#f03c3c" text-anchor="middle" letter-spacing="-0.6">BLB</text><text x="371.0" y="299.6" font-family="Liberation Sans" font-size="11" fill="#f03c3c" text-anchor="middle" letter-spacing="-0.6">BLB</text><text x="414.0" y="303.5" font-family="Liberation Sans" font-size="11" fill="#f03c3c" text-anchor="middle" letter-spacing="-0.6">BLB</text><text x="405.0" y="319.0" font-family="Liberation Sans" font-size="11" fill="#f03c3c" text-anchor="middle" letter-spacing="-0.6">SS</text><text x="418.0" y="314.0" font-family="Liberation Sans" font-size="11" fill="#f03c3c" text-anchor="middle" letter-spacing="-0.6">BLB</text><text x="388.0" y="352.7" font-family="Liberation Sans" font-size="13" fill="#f03c3c" text-anchor="middle" letter-spacing="-0.6">SX</text><text x="442.0" y="344.7" font-family="Liberation Sans" font-size="13" fill="#f03c3c" text-anchor="middle" letter-spacing="-0.6">SX</text><text x="459.0" y="261.5" font-family="Liberation Sans" font-size="11" fill="#f03c3c" text-anchor="middle" letter-spacing="-0.6">SS</text><text x="477.0" y="266.8" font-family="Liberation Sans" font-size="11" fill="#f03c3c" text-anchor="middle" letter-spacing="-0.6">BLB</text><text x="491.6" y="257.6" font-family="Liberation Sans" font-size="11" fill="#f03c3c" text-anchor="middle" letter-spacing="-0.6">BLB</text><text x="460.0" y="277.0" font-family="Liberation Sans" font-size="11" fill="#f03c3c" text-anchor="middle" letter-spacing="-0.6">BLB</text><text x="553.0" y="25.5" font-family="Liberation Sans" font-size="11" fill="#f03c3c" text-anchor="middle" letter-spacing="-0.6">HI</text><text x="570.6" y="25.5" font-family="Liberation Sans" font-size="11" fill="#f03c3c" text-anchor="middle" letter-spacing="-0.6">BLB</text><text x="576.0" y="41.6" font-family="Liberation Sans" font-size="11" fill="#f03c3c" text-anchor="middle" letter-spacing="-0.6">SS</text><text x="607.0" y="41.6" font-family="Liberation Sans" font-size="11" fill="#f03c3c" text-anchor="middle" letter-spacing="-0.6">BLB</text><text x="586.8" y="49.7" font-family="Liberation Sans" font-size="11" fill="#f03c3c" text-anchor="middle" letter-spacing="-0.6">BLB</text><text x="627.0" y="57.7" font-family="Liberation Sans" font-size="11" fill="#f03c3c" text-anchor="middle" letter-spacing="-0.6">BLB</text><text x="631.0" y="74.0" font-family="Liberation Sans" font-size="11" fill="#f03c3c" text-anchor="middle" letter-spacing="-0.6">BLE</text><text x="521.0" y="97.5" font-family="Liberation Sans" font-size="11" fill="#f03c3c" text-anchor="middle" letter-spacing="-0.6">BLB</text><text x="535.7" y="118.2" font-family="Liberation Sans" font-size="11" fill="#f03c3c" text-anchor="middle" letter-spacing="-0.6">SS</text><text x="506.0" y="174.7" font-family="Liberation Sans" font-size="11" fill="#f03c3c" text-anchor="middle" letter-spacing="-0.6">BLB</text><text x="511.5" y="169.3" font-family="Liberation Sans" font-size="11" fill="#f03c3c" text-anchor="middle" letter-spacing="-0.6">HI</text><text x="131.3" y="305.8" font-family="Liberation Sans" font-size="11" fill="#1e78ff" text-anchor="middle" letter-spacing="-0.8">WLB</text><text x="149.5" y="307.0" font-family="Liberation Sans" font-size="11" fill="#1e78ff" text-anchor="middle" letter-spacing="-0.8">TLS</text><text x="110.8" y="340.0" font-family="Liberation Sans" font-size="11" fill="#1e78ff" text-anchor="middle" letter-spacing="-0.8">TU</text><text x="132.3" y="338.0" font-family="Liberation Sans" font-size="11" fill="#1e78ff" text-anchor="middle" letter-spacing="-0.8">LB</text><text x="123.7" y="356.4" font-family="Liberation Sans" font-size="11" fill="#1e78ff" text-anchor="middle" letter-spacing="-0.8">WLB</text><text x="37.7" y="352.0" font-family="Liberation Sans" font-size="11" fill="#1e78ff" text-anchor="middle" letter-spacing="-0.8">HR</text><text x="149.5" y="293.0" font-family="Liberation Sans" font-size="11" fill="#1e78ff" text-anchor="middle" letter-spacing="-0.8">WLB</text><text x="162.4" y="280.0" font-family="Liberation Sans" font-size="11" fill="#1e78ff" text-anchor="middle" letter-spacing="-0.8">HR</text><text x="173.2" y="267.0" font-family="Liberation Sans" font-size="11" fill="#1e78ff" text-anchor="middle" letter-spacing="-0.8">WLB</text><text x="213.0" y="281.0" font-family="Liberation Sans" font-size="11" fill="#1e78ff" text-anchor="middle" letter-spacing="-0.8">WLB</text><text x="227.0" y="268.0" font-family="Liberation Sans" font-size="11" fill="#1e78ff" text-anchor="middle" letter-spacing="-0.8">HR</text><text x="257.0" y="238.0" font-family="Liberation Sans" font-size="11" fill="#1e78ff" text-anchor="middle" letter-spacing="-0.8">WLB</text><text x="274.3" y="245.6" font-family="Liberation Sans" font-size="11" fill="#1e78ff" text-anchor="middle" letter-spacing="-0.8">WLB</text><text x="276.4" y="236.0" font-family="Liberation Sans" font-size="11" fill="#1e78ff" text-anchor="middle" letter-spacing="-0.8">WLB</text><text x="295.8" y="215.5" font-family="Liberation Sans" font-size="11" fill="#1e78ff" text-anchor="middle" letter-spacing="-0.8">THR</text><text x="308.7" y="233.8" font-family="Liberation Sans" font-size="11" fill="#1e78ff" text-anchor="middle" letter-spacing="-0.8">TL</text><text x="52.8" y="345.6" font-family="Liberation Sans" font-size="11" fill="#1e78ff" text-anchor="middle" letter-spacing="-0.8">MLB</text><text x="72.0" y="344.5" font-family="Liberation Sans" font-size="11" fill="#1e78ff" text-anchor="middle" letter-spacing="-0.8">HR</text><text x="7.0" y="302.0" font-family="Liberation Sans" font-size="11" fill="#1e78ff" text-anchor="middle" letter-spacing="-0.8">HR</text><text x="505.0" y="257.6" font-family="Liberation Sans" font-size="11" fill="#1e78ff" text-anchor="middle" letter-spacing="-0.8">WLB</text><text x="502.0" y="281.0" font-family="Liberation Sans" font-size="11" fill="#1e78ff" text-anchor="middle" letter-spacing="-0.8">WLB</text><text x="460.0" y="305.0" font-family="Liberation Sans" font-size="11" fill="#1e78ff" text-anchor="middle" letter-spacing="-0.8">WLB</text><text x="457.5" y="320.6" font-family="Liberation Sans" font-size="11" fill="#1e78ff" text-anchor="middle" letter-spacing="-0.8">WLB</text><text x="407.6" y="340.3" font-family="Liberation Sans" font-size="11" fill="#1e78ff" text-anchor="middle" letter-spacing="-0.8">WLB</text><text x="386.5" y="340.3" font-family="Liberation Sans" font-size="11" fill="#1e78ff" text-anchor="middle" letter-spacing="-0.8">HR</text><text x="457.5" y="331.0" font-family="Liberation Sans" font-size="11" fill="#1e78ff" text-anchor="middle" letter-spacing="-0.8">LB</text><text x="389.0" y="344.0" font-family="Liberation Sans" font-size="11" fill="#1e78ff" text-anchor="middle" letter-spacing="-0.8">WLB</text><text x="473.0" y="282.5" font-family="Liberation Sans" font-size="11" fill="#1e78ff" text-anchor="middle" letter-spacing="-0.8">WLB</text><text x="505.0" y="189.0" font-family="Liberation Sans" font-size="11" fill="#1e78ff" text-anchor="middle" letter-spacing="-0.8">WLB</text><text x="505.0" y="202.4" font-family="Liberation Sans" font-size="11" fill="#1e78ff" text-anchor="middle" letter-spacing="-0.8">WLB</text><text x="581.4" y="61.8" font-family="Liberation Sans" font-size="11" fill="#1e78ff" text-anchor="middle" letter-spacing="-0.8">WLB</text><text x="597.5" y="74.0" font-family="Liberation Sans" font-size="11" fill="#1e78ff" text-anchor="middle" letter-spacing="-0.8">WLB</text><text x="613.6" y="69.8" font-family="Liberation Sans" font-size="11" fill="#1e78ff" text-anchor="middle" letter-spacing="-0.8">WLB</text><text x="551.8" y="86.0" font-family="Liberation Sans" font-size="11" fill="#1e78ff" text-anchor="middle" letter-spacing="-0.8">WLB</text><text x="547.8" y="112.9" font-family="Liberation Sans" font-size="11" fill="#1e78ff" text-anchor="middle" letter-spacing="-0.8">WLB</text><text x="539.7" y="147.8" font-family="Liberation Sans" font-size="11" fill="#1e78ff" text-anchor="middle" letter-spacing="-0.8">WLB</text><text x="516.8" y="184.0" font-family="Liberation Sans" font-size="11" fill="#1e78ff" text-anchor="middle" letter-spacing="-0.8">WLB</text><text x="570.6" y="17.4" font-family="Liberation Sans" font-size="12" fill="#20e020" text-anchor="middle">LX</text><text x="476.0" y="268.0" font-family="Liberation Sans" font-size="12" fill="#20e020" text-anchor="middle">X</text><text x="424.6" y="324.6" font-family="Liberation Sans" font-size="12" fill="#20e020" text-anchor="middle">X</text><text x="542.4" y="130.3" font-family="Liberation Sans" font-size="12" fill="#20e020" text-anchor="middle">X</text><text x="24.0" y="299.0" font-family="Liberation Sans" font-size="12" fill="#20e020" text-anchor="middle">X</text><text x="109.0" y="314.0" font-family="Liberation Sans" font-size="12" fill="#20e020" text-anchor="middle">X</text><text x="190.0" y="243.0" font-family="Liberation Sans" font-size="12" fill="#20e020" text-anchor="middle">X</text><text x="284.0" y="198.0" font-family="Liberation Sans" font-size="12" fill="#20e020" text-anchor="middle">X</text><text x="234.0" y="256.0" font-family="Liberation Sans" font-size="12" fill="#20e020" text-anchor="middle">X</text><rect x="2.5" y="2.5" width="637" height="361" fill="none" stroke="#fff" stroke-width="1"/><line x1="639" y1="31.5" x2="643" y2="31.5" stroke="#fff"/><line x1="639" y1="64.5" x2="643" y2="64.5" stroke="#fff"/><line x1="639" y1="97.5" x2="643" y2="97.5" stroke="#fff"/><line x1="639" y1="130.5" x2="643" y2="130.5" stroke="#fff"/><line x1="639" y1="163.5" x2="643" y2="163.5" stroke="#fff"/><line x1="639" y1="196.5" x2="643" y2="196.5" stroke="#fff"/><line x1="639" y1="229.5" x2="643" y2="229.5" stroke="#fff"/><line x1="639" y1="262.5" x2="643" y2="262.5" stroke="#fff"/><line x1="639" y1="295.5" x2="643" y2="295.5" stroke="#fff"/><line x1="639" y1="328.5" x2="643" y2="328.5" stroke="#fff"/><line x1="639" y1="361.5" x2="643" y2="361.5" stroke="#fff"/><line x1="2.5" y1="363" x2="2.5" y2="367" stroke="#fff"/><line x1="66.5" y1="363" x2="66.5" y2="367" stroke="#fff"/><line x1="130.5" y1="363" x2="130.5" y2="367" stroke="#fff"/><line x1="194.5" y1="363" x2="194.5" y2="367" stroke="#fff"/><line x1="258.5" y1="363" x2="258.5" y2="367" stroke="#fff"/><line x1="322.5" y1="363" x2="322.5" y2="367" stroke="#fff"/><line x1="386.5" y1="363" x2="386.5" y2="367" stroke="#fff"/><line x1="450.5" y1="363" x2="450.5" y2="367" stroke="#fff"/><line x1="514.5" y1="363" x2="514.5" y2="367" stroke="#fff"/><line x1="578.5" y1="363" x2="578.5" y2="367" stroke="#fff"/></svg>
<div class="t" style="left:1870px;top:138px;font-size:10px;letter-spacing:-0.45px;color:#fff;-webkit-text-stroke:0.25px #fff">1911.20</div>
<div class="t" style="left:1870px;top:171px;font-size:10px;letter-spacing:-0.45px;color:#fff;-webkit-text-stroke:0.25px #fff">1900.10</div>
<div class="t" style="left:1870px;top:204px;font-size:10px;letter-spacing:-0.45px;color:#fff;-webkit-text-stroke:0.25px #fff">1889.30</div>
<div class="t" style="left:1870px;top:237px;font-size:10px;letter-spacing:-0.45px;color:#fff;-webkit-text-stroke:0.25px #fff">1878.50</div>
<div class="t" style="left:1870px;top:270px;font-size:10px;letter-spacing:-0.45px;color:#fff;-webkit-text-stroke:0.25px #fff">1867.70</div>
<div class="t" style="left:1870px;top:303px;font-size:10px;letter-spacing:-0.45px;color:#fff;-webkit-text-stroke:0.25px #fff">1856.90</div>
<div class="t" style="left:1870px;top:336px;font-size:10px;letter-spacing:-0.45px;color:#fff;-webkit-text-stroke:0.25px #fff">1846.10</div>
<div class="t" style="left:1870px;top:369px;font-size:10px;letter-spacing:-0.45px;color:#fff;-webkit-text-stroke:0.25px #fff">1835.30</div>
<div class="t" style="left:1870px;top:402px;font-size:10px;letter-spacing:-0.45px;color:#fff;-webkit-text-stroke:0.25px #fff">1824.50</div>
<div class="t" style="left:1870px;top:435px;font-size:10px;letter-spacing:-0.45px;color:#fff;-webkit-text-stroke:0.25px #fff">1813.70</div>
<div class="t" style="left:1870px;top:468px;font-size:10px;letter-spacing:-0.45px;color:#fff;-webkit-text-stroke:0.25px #fff">1802.90</div>
<div class="a" style="left:1867px;top:185px;width:42px;height:12px;background:#fff"></div>
<div class="t" style="left:1869px;top:187px;font-size:10px;letter-spacing:-0.45px;color:#000">1894.67</div>
<div class="t" style="left:1228.0px;top:480px;font-size:10px;letter-spacing:-0.45px;color:#fff;-webkit-text-stroke:0.25px #fff">23 Feb 2023</div>
<div class="t" style="left:1292.2px;top:480px;font-size:10px;letter-spacing:-0.45px;color:#fff;-webkit-text-stroke:0.25px #fff">27 Feb 05:00</div>
<div class="t" style="left:1356.4px;top:480px;font-size:10px;letter-spacing:-0.45px;color:#fff;-webkit-text-stroke:0.25px #fff">28 Feb 14:00</div>
<div class="t" style="left:1420.6px;top:480px;font-size:10px;letter-spacing:-0.45px;color:#fff;-webkit-text-stroke:0.25px #fff">1 Mar 23:00</div>
<div class="t" style="left:1484.8px;top:480px;font-size:10px;letter-spacing:-0.45px;color:#fff;-webkit-text-stroke:0.25px #fff">3 Mar 09:00</div>
<div class="t" style="left:1549.0px;top:480px;font-size:10px;letter-spacing:-0.45px;color:#fff;-webkit-text-stroke:0.25px #fff">6 Mar 18:00</div>
<div class="t" style="left:1613.2px;top:480px;font-size:10px;letter-spacing:-0.45px;color:#fff;-webkit-text-stroke:0.25px #fff">8 Mar 04:00</div>
<div class="t" style="left:1677.4px;top:480px;font-size:10px;letter-spacing:-0.45px;color:#fff;-webkit-text-stroke:0.25px #fff">9 Mar 13:00</div>
<div class="t" style="left:1741.6px;top:480px;font-size:10px;letter-spacing:-0.45px;color:#fff;-webkit-text-stroke:0.25px #fff">10 Mar 22:00</div>
<div class="t" style="left:1805.8000000000002px;top:480px;font-size:10px;letter-spacing:-0.45px;color:#fff;-webkit-text-stroke:0.25px #fff">14 Mar 08:00</div>
<div class="t" style="left:1244px;top:117px;font-size:10px;letter-spacing:-0.45px;color:#fff;-webkit-text-stroke:0.25px #fff;letter-spacing:-0.2px">XAUUSD.s,H1&nbsp; 1887.48 1898.63 1886.65 1894.67</div>
<svg style="left:1232px;top:119px;" width="8" height="6" viewBox="0 0 8 6"><path d="M0 0.5 L7 0.5 L3.5 5Z" fill="#fff"/></svg>
<div class="t" style="left:1236px;top:201px;font-size:10px;letter-spacing:-0.45px;color:#fff;-webkit-text-stroke:0.25px #fff">#70770021 sell 0.01</div>
<div class="t" style="left:1236px;top:370px;font-size:10px;letter-spacing:-0.45px;color:#fff;-webkit-text-stroke:0.25px #fff">#70419830 sell 1.00</div>
<svg style="left:522px;top:538px;" width="685" height="222" viewBox="0 0 685 222"><line x1="34.5" y1="2" x2="34.5" y2="222" stroke="#778899" stroke-width="1" stroke-dasharray="3,3"/><line x1="66.5" y1="2" x2="66.5" y2="222" stroke="#778899" stroke-width="1" stroke-dasharray="3,3"/><line x1="98.5" y1="2" x2="98.5" y2="222" stroke="#778899" stroke-width="1" stroke-dasharray="3,3"/><line x1="130.5" y1="2" x2="130.5" y2="222" stroke="#778899" stroke-width="1" stroke-dasharray="3,3"/><line x1="162.5" y1="2" x2="162.5" y2="222" stroke="#778899" stroke-width="1" stroke-dasharray="3,3"/><line x1="194.5" y1="2" x2="194.5" y2="222" stroke="#778899" stroke-width="1" stroke-dasharray="3,3"/><line x1="226.5" y1="2" x2="226.5" y2="222" stroke="#778899" stroke-width="1" stroke-dasharray="3,3"/><line x1="258.5" y1="2" x2="258.5" y2="222" stroke="#778899" stroke-width="1" stroke-dasharray="3,3"/><line x1="290.5" y1="2" x2="290.5" y2="222" stroke="#778899" stroke-width="1" stroke-dasharray="3,3"/><line x1="322.5" y1="2" x2="322.5" y2="222" stroke="#778899" stroke-width="1" stroke-dasharray="3,3"/><line x1="354.5" y1="2" x2="354.5" y2="222" stroke="#778899" stroke-width="1" stroke-dasharray="3,3"/><line x1="386.5" y1="2" x2="386.5" y2="222" stroke="#778899" stroke-width="1" stroke-dasharray="3,3"/><line x1="418.5" y1="2" x2="418.5" y2="222" stroke="#778899" stroke-width="1" stroke-dasharray="3,3"/><line x1="450.5" y1="2" x2="450.5" y2="222" stroke="#778899" stroke-width="1" stroke-dasharray="3,3"/><line x1="482.5" y1="2" x2="482.5" y2="222" stroke="#778899" stroke-width="1" stroke-dasharray="3,3"/><line x1="514.5" y1="2" x2="514.5" y2="222" stroke="#778899" stroke-width="1" stroke-dasharray="3,3"/><line x1="546.5" y1="2" x2="546.5" y2="222" stroke="#778899" stroke-width="1" stroke-dasharray="3,3"/><line x1="578.5" y1="2" x2="578.5" y2="222" stroke="#778899" stroke-width="1" stroke-dasharray="3,3"/><line x1="610.5" y1="2" x2="610.5" y2="222" stroke="#778899" stroke-width="1" stroke-dasharray="3,3"/><line x1="3" y1="31.5" x2="638" y2="31.5" stroke="#778899" stroke-width="1" stroke-dasharray="3,3"/><line x1="3" y1="64.5" x2="638" y2="64.5" stroke="#778899" stroke-width="1" stroke-dasharray="3,3"/><line x1="3" y1="97.5" x2="638" y2="97.5" stroke="#778899" stroke-width="1" stroke-dasharray="3,3"/><line x1="3" y1="130.5" x2="638" y2="130.5" stroke="#778899" stroke-width="1" stroke-dasharray="3,3"/><line x1="3" y1="163.5" x2="638" y2="163.5" stroke="#778899" stroke-width="1" stroke-dasharray="3,3"/><line x1="3" y1="196.5" x2="638" y2="196.5" stroke="#778899" stroke-width="1" stroke-dasharray="3,3"/><line x1="3" y1="81.5" x2="638" y2="81.5" stroke="#8a9aaa" stroke-width="1"/><line x1="3" y1="100.5" x2="638" y2="100.5" stroke="#20c020" stroke-width="1" stroke-dasharray="8,4,2,4"/><path d="M277.5 221.6V222.0 M279.5 220.7V222.0 M281.5 210.0V222.0 M283.5 212.1V222.0 M285.5 200.6V222.0 M287.5 206.5V221.1 M289.5 202.8V221.9 M291.5 204.8V216.1 M293.5 200.3V209.0 M295.5 194.6V212.1 M297.5 194.7V211.1 M299.5 194.1V216.5 M301.5 188.7V212.1 M303.5 193.3V207.5 M305.5 193.0V210.9 M307.5 188.7V214.8 M309.5 195.4V204.4 M311.5 198.3V207.5 M313.5 192.4V211.8 M315.5 197.5V211.7 M317.5 201.0V218.7 M319.5 204.1V222.0 M321.5 206.3V220.0 M323.5 205.8V222.0 M325.5 208.8V222.0 M327.5 207.5V222.0 M329.5 211.2V222.0 M331.5 220.8V222.0 M333.5 214.8V222.0 M335.5 217.7V222.0 M337.5 217.2V222.0 M339.5 216.2V222.0 M347.5 218.2V222.0 M503.5 209.2V222.0 M505.5 189.7V221.7 M507.5 166.4V200.4 M509.5 153.2V184.5 M511.5 141.1V176.1 M513.5 135.0V157.1 M515.5 155.0V162.0 M517.5 115.0V147.6 M519.5 81.0V134.0 M521.5 98.0V139.0 M523.5 119.5V140.0 M525.5 126.7V150.0 M527.5 99.0V150.0 M529.5 104.0V116.0 M531.5 115.0V121.0 M533.5 119.5V135.7 M535.5 119.5V146.4 M537.5 132.0V152.7 M539.5 107.0V141.0 M541.5 83.7V114.0 M543.5 101.6V123.0 M545.5 90.0V124.0 M547.5 56.0V105.0 M549.5 35.0V85.5 M551.5 26.0V78.0 M553.5 25.4V56.8 M555.5 34.4V56.0 M557.5 27.0V39.0 M559.5 25.4V40.7 M561.5 20.0V41.6 M563.5 21.9V29.9 M565.5 21.9V35.3 M567.5 27.2V34.4 M569.5 21.9V34.4 M571.5 26.3V49.6 M573.5 41.6V53.2 M575.5 45.2V56.8 M577.5 52.3V60.4 M579.5 49.6V60.4 M581.5 24.5V38.9 M583.5 25.4V38.9 M585.5 23.6V64.0 M587.5 49.6V63.1 M589.5 50.5V59.5 M591.5 49.6V62.2 M593.5 28.1V65.8 M595.5 31.7V79.2 M597.5 40.7V64.0 M599.5 38.0V57.7 M601.5 37.1V58.6 M603.5 34.4V47.8 M605.5 35.3V53.2 M607.5 40.7V58.6 M609.5 51.4V57.7 M611.5 49.6V54.1 M613.5 51.4V58.6 M615.5 53.2V64.9 M617.5 49.6V60.4 M619.5 48.7V55.0 M621.5 49.6V57.7 M623.5 54.1V63.1 M625.5 58.6V66.7 M627.5 58.6V69.3 M629.5 57.7V76.5 M631.5 74.7V108.8 M633.5 69.3V106.1" stroke="#1ee81e" stroke-width="1"/><rect x="1.5" y="2.5" width="637" height="260" fill="none" stroke="#fff" stroke-width="1"/><line x1="638" y1="31.5" x2="642" y2="31.5" stroke="#fff"/><line x1="638" y1="64.5" x2="642" y2="64.5" stroke="#fff"/><line x1="638" y1="97.5" x2="642" y2="97.5" stroke="#fff"/><line x1="638" y1="130.5" x2="642" y2="130.5" stroke="#fff"/><line x1="638" y1="163.5" x2="642" y2="163.5" stroke="#fff"/><line x1="638" y1="196.5" x2="642" y2="196.5" stroke="#fff"/><line x1="1.5" y1="262" x2="1.5" y2="266" stroke="#fff"/><line x1="65.5" y1="262" x2="65.5" y2="266" stroke="#fff"/><line x1="129.5" y1="262" x2="129.5" y2="266" stroke="#fff"/><line x1="193.5" y1="262" x2="193.5" y2="266" stroke="#fff"/><line x1="257.5" y1="262" x2="257.5" y2="266" stroke="#fff"/><line x1="321.5" y1="262" x2="321.5" y2="266" stroke="#fff"/><line x1="385.5" y1="262" x2="385.5" y2="266" stroke="#fff"/><line x1="449.5" y1="262" x2="449.5" y2="266" stroke="#fff"/><line x1="513.5" y1="262" x2="513.5" y2="266" stroke="#fff"/><line x1="577.5" y1="262" x2="577.5" y2="266" stroke="#fff"/></svg>
<div class="t" style="left:1166px;top:566px;font-size:10px;letter-spacing:-0.45px;color:#fff;-webkit-text-stroke:0.25px #fff">1911.20</div>
<div class="t" style="left:1166px;top:599px;font-size:10px;letter-spacing:-0.45px;color:#fff;-webkit-text-stroke:0.25px #fff">1900.10</div>
<div class="t" style="left:1166px;top:632px;font-size:10px;letter-spacing:-0.45px;color:#fff;-webkit-text-stroke:0.25px #fff">1889.30</div>
<div class="t" style="left:1166px;top:665px;font-size:10px;letter-spacing:-0.45px;color:#fff;-webkit-text-stroke:0.25px #fff">1878.50</div>
<div class="t" style="left:1166px;top:698px;font-size:10px;letter-spacing:-0.45px;color:#fff;-webkit-text-stroke:0.25px #fff">1867.70</div>
<div class="t" style="left:1166px;top:731px;font-size:10px;letter-spacing:-0.45px;color:#fff;-webkit-text-stroke:0.25px #fff">1856.90</div>
<div class="a" style="left:1162px;top:614px;width:42px;height:12px;background:#fff"></div>
<div class="t" style="left:1164px;top:616px;font-size:10px;letter-spacing:-0.45px;color:#000">1894.67</div>
<div class="t" style="left:539px;top:545px;font-size:10px;letter-spacing:-0.45px;color:#fff;-webkit-text-stroke:0.25px #fff;letter-spacing:-0.2px">XAUUSD.s,H1&nbsp; 1887.48 1898.63 1886.65 1894.67</div>
<svg style="left:527px;top:547px;" width="8" height="6" viewBox="0 0 8 6"><path d="M0 0.5 L7 0.5 L3.5 5Z" fill="#fff"/></svg>
<div class="t" style="left:531px;top:629px;font-size:10px;letter-spacing:-0.45px;color:#fff;-webkit-text-stroke:0.25px #fff">#70770021 sell 0.01</div>
<svg style="left:1226px;top:538px;" width="685" height="222" viewBox="0 0 685 222"><line x1="35.5" y1="2" x2="35.5" y2="222" stroke="#778899" stroke-width="1" stroke-dasharray="3,3"/><line x1="67.5" y1="2" x2="67.5" y2="222" stroke="#778899" stroke-width="1" stroke-dasharray="3,3"/><line x1="99.5" y1="2" x2="99.5" y2="222" stroke="#778899" stroke-width="1" stroke-dasharray="3,3"/><line x1="131.5" y1="2" x2="131.5" y2="222" stroke="#778899" stroke-width="1" stroke-dasharray="3,3"/><line x1="163.5" y1="2" x2="163.5" y2="222" stroke="#778899" stroke-width="1" stroke-dasharray="3,3"/><line x1="195.5" y1="2" x2="195.5" y2="222" stroke="#778899" stroke-width="1" stroke-dasharray="3,3"/><line x1="227.5" y1="2" x2="227.5" y2="222" stroke="#778899" stroke-width="1" stroke-dasharray="3,3"/><line x1="259.5" y1="2" x2="259.5" y2="222" stroke="#778899" stroke-width="1" stroke-dasharray="3,3"/><line x1="291.5" y1="2" x2="291.5" y2="222" stroke="#778899" stroke-width="1" stroke-dasharray="3,3"/><line x1="323.5" y1="2" x2="323.5" y2="222" stroke="#778899" stroke-width="1" stroke-dasharray="3,3"/><line x1="355.5" y1="2" x2="355.5" y2="222" stroke="#778899" stroke-width="1" stroke-dasharray="3,3"/><line x1="387.5" y1="2" x2="387.5" y2="222" stroke="#778899" stroke-width="1" stroke-dasharray="3,3"/><line x1="419.5" y1="2" x2="419.5" y2="222" stroke="#778899" stroke-width="1" stroke-dasharray="3,3"/><line x1="451.5" y1="2" x2="451.5" y2="222" stroke="#778899" stroke-width="1" stroke-dasharray="3,3"/><line x1="483.5" y1="2" x2="483.5" y2="222" stroke="#778899" stroke-width="1" stroke-dasharray="3,3"/><line x1="515.5" y1="2" x2="515.5" y2="222" stroke="#778899" stroke-width="1" stroke-dasharray="3,3"/><line x1="547.5" y1="2" x2="547.5" y2="222" stroke="#778899" stroke-width="1" stroke-dasharray="3,3"/><line x1="579.5" y1="2" x2="579.5" y2="222" stroke="#778899" stroke-width="1" stroke-dasharray="3,3"/><line x1="611.5" y1="2" x2="611.5" y2="222" stroke="#778899" stroke-width="1" stroke-dasharray="3,3"/><line x1="4" y1="31.5" x2="639" y2="31.5" stroke="#778899" stroke-width="1" stroke-dasharray="3,3"/><line x1="4" y1="64.5" x2="639" y2="64.5" stroke="#778899" stroke-width="1" stroke-dasharray="3,3"/><line x1="4" y1="97.5" x2="639" y2="97.5" stroke="#778899" stroke-width="1" stroke-dasharray="3,3"/><line x1="4" y1="130.5" x2="639" y2="130.5" stroke="#778899" stroke-width="1" stroke-dasharray="3,3"/><line x1="4" y1="163.5" x2="639" y2="163.5" stroke="#778899" stroke-width="1" stroke-dasharray="3,3"/><line x1="4" y1="196.5" x2="639" y2="196.5" stroke="#778899" stroke-width="1" stroke-dasharray="3,3"/><line x1="3" y1="207.5" x2="639" y2="207.5" stroke="#8a9aaa" stroke-width="1"/><path d="M3.5 97.6V113.7 M5.5 99.2V140.1 M7.5 98.2V154.2 M9.5 89.9V133.5 M11.5 91.3V117.9 M13.5 79.1V95.2 M15.5 67.7V86.0 M17.5 62.4V81.0 M19.5 47.3V71.4 M21.5 40.2V72.2 M23.5 36.8V61.7 M25.5 35.2V58.9 M27.5 37.6V57.1 M29.5 24.4V57.8 M31.5 19.3V45.7 M33.5 27.8V55.5 M35.5 33.4V95.9 M37.5 41.1V103.4 M39.5 37.1V86.3 M41.5 46.4V82.9 M43.5 55.0V78.5 M45.5 50.3V73.0 M47.5 48.3V67.7 M49.5 49.1V69.9 M51.5 45.1V69.4 M53.5 46.8V65.0 M55.5 59.4V85.7 M57.5 64.2V105.7 M59.5 71.6V97.3 M61.5 77.9V92.5 M63.5 77.7V100.3 M65.5 71.2V105.2 M67.5 74.3V108.7 M69.5 71.1V105.8 M71.5 72.6V115.8 M73.5 72.8V115.9 M75.5 82.7V119.9 M77.5 84.1V117.4 M79.5 92.4V124.0 M81.5 89.7V131.7 M83.5 96.1V140.4 M85.5 91.7V137.7 M87.5 94.6V128.8 M89.5 103.7V134.4 M91.5 107.8V138.7 M93.5 105.6V126.6 M95.5 96.9V116.0 M97.5 89.1V107.8 M99.5 93.2V112.7 M101.5 87.0V101.5 M103.5 88.3V102.4 M105.5 73.9V95.8 M107.5 66.3V97.1 M109.5 66.3V90.8 M111.5 63.9V92.6 M113.5 61.5V85.4 M115.5 63.1V78.1 M117.5 56.5V81.4 M119.5 50.5V77.7 M121.5 41.1V72.8 M123.5 44.2V73.7 M125.5 48.3V67.5 M127.5 56.0V74.1 M129.5 55.8V79.4 M131.5 51.4V90.7 M133.5 51.3V95.6 M135.5 50.6V83.1 M137.5 50.4V79.5 M139.5 51.0V69.3 M141.5 37.5V64.0 M143.5 33.4V59.3 M145.5 44.0V59.8 M147.5 45.8V66.3 M149.5 54.8V72.4 M151.5 57.8V78.4 M153.5 59.2V83.4 M155.5 52.7V77.6 M157.5 44.9V69.2 M159.5 46.2V72.1 M161.5 56.1V70.6 M163.5 51.8V73.0 M165.5 55.5V76.7 M167.5 65.3V86.6 M169.5 81.3V100.9 M171.5 83.5V108.8 M173.5 89.6V118.5 M175.5 87.6V123.4 M177.5 89.6V114.0 M179.5 87.9V108.4 M181.5 82.1V102.6 M183.5 78.1V107.3 M185.5 90.3V108.5 M187.5 94.0V115.4 M189.5 98.6V112.7 M191.5 99.0V113.1 M193.5 98.0V108.3 M195.5 96.7V109.5 M197.5 95.6V107.7 M199.5 88.3V101.6 M201.5 85.3V107.3 M203.5 76.6V109.0 M205.5 100.1V132.8 M207.5 117.2V153.8 M209.5 113.5V146.8 M211.5 117.6V146.6 M213.5 121.1V148.0 M215.5 143.3V169.0 M217.5 160.2V184.8 M219.5 166.2V195.6 M221.5 173.4V199.1 M223.5 183.1V206.5 M225.5 188.3V217.6 M227.5 199.4V221.3 M229.5 219.0V222.0 M397.5 209.9V222.0 M399.5 187.1V220.4 M401.5 188.5V212.3 M403.5 194.3V210.1 M405.5 191.9V215.2 M407.5 181.9V221.0 M409.5 175.7V222.0 M411.5 176.6V217.4 M413.5 185.3V222.0 M415.5 174.0V217.0 M417.5 170.8V222.0 M419.5 159.4V217.3 M421.5 145.7V217.0 M423.5 122.5V205.7 M425.5 151.9V206.0 M427.5 168.4V201.7 M429.5 178.4V200.3 M431.5 181.3V199.8 M433.5 184.4V203.2 M435.5 185.5V207.1 M437.5 192.1V211.5 M439.5 191.6V214.2 M441.5 196.4V218.8 M443.5 205.5V222.0 M445.5 207.4V222.0 M447.5 205.4V222.0 M449.5 205.2V222.0 M451.5 202.2V220.9 M453.5 197.8V218.2 M455.5 195.0V219.5 M457.5 193.6V217.4 M459.5 192.2V218.5 M461.5 191.9V218.6 M463.5 189.4V220.3 M465.5 174.8V213.7 M467.5 155.4V192.5 M469.5 161.7V195.3 M471.5 169.7V209.2 M473.5 174.6V210.8 M475.5 176.6V208.7 M477.5 166.6V190.1 M479.5 157.1V182.5 M481.5 158.7V181.7 M483.5 161.6V188.6 M485.5 159.9V181.3 M487.5 159.5V179.7 M489.5 156.6V180.6 M491.5 140.1V171.0 M493.5 133.3V171.9 M495.5 134.8V167.9 M497.5 142.9V166.4 M499.5 142.8V180.0 M501.5 154.1V180.1 M503.5 164.1V198.3 M505.5 173.2V205.2 M507.5 178.7V215.4" stroke="#1ee81e" stroke-width="1"/><path d="M505 4 L517 4 L511 10Z" fill="#a0a8b0"/><rect x="2.5" y="2.5" width="637" height="260" fill="none" stroke="#fff" stroke-width="1"/><line x1="639" y1="31.5" x2="643" y2="31.5" stroke="#fff"/><line x1="639" y1="64.5" x2="643" y2="64.5" stroke="#fff"/><line x1="639" y1="97.5" x2="643" y2="97.5" stroke="#fff"/><line x1="639" y1="130.5" x2="643" y2="130.5" stroke="#fff"/><line x1="639" y1="163.5" x2="643" y2="163.5" stroke="#fff"/><line x1="639" y1="196.5" x2="643" y2="196.5" stroke="#fff"/><line x1="2.5" y1="262" x2="2.5" y2="266" stroke="#fff"/><line x1="66.5" y1="262" x2="66.5" y2="266" stroke="#fff"/><line x1="130.5" y1="262" x2="130.5" y2="266" stroke="#fff"/><line x1="194.5" y1="262" x2="194.5" y2="266" stroke="#fff"/><line x1="258.5" y1="262" x2="258.5" y2="266" stroke="#fff"/><line x1="322.5" y1="262" x2="322.5" y2="266" stroke="#fff"/><line x1="386.5" y1="262" x2="386.5" y2="266" stroke="#fff"/><line x1="450.5" y1="262" x2="450.5" y2="266" stroke="#fff"/><line x1="514.5" y1="262" x2="514.5" y2="266" stroke="#fff"/><line x1="578.5" y1="262" x2="578.5" y2="266" stroke="#fff"/></svg>
<div class="t" style="left:1870px;top:566px;font-size:10px;letter-spacing:-0.45px;color:#fff;-webkit-text-stroke:0.25px #fff">0.67760</div>
<div class="t" style="left:1870px;top:599px;font-size:10px;letter-spacing:-0.45px;color:#fff;-webkit-text-stroke:0.25px #fff">0.67540</div>
<div class="t" style="left:1870px;top:632px;font-size:10px;letter-spacing:-0.45px;color:#fff;-webkit-text-stroke:0.25px #fff">0.67325</div>
<div class="t" style="left:1870px;top:665px;font-size:10px;letter-spacing:-0.45px;color:#fff;-webkit-text-stroke:0.25px #fff">0.67105</div>
<div class="t" style="left:1870px;top:698px;font-size:10px;letter-spacing:-0.45px;color:#fff;-webkit-text-stroke:0.25px #fff">0.66890</div>
<div class="t" style="left:1870px;top:731px;font-size:10px;letter-spacing:-0.45px;color:#fff;-webkit-text-stroke:0.25px #fff">0.66670</div>
<div class="a" style="left:1867px;top:739px;width:42px;height:12px;background:#fff"></div>
<div class="t" style="left:1869px;top:741px;font-size:10px;letter-spacing:-0.45px;color:#000">0.66601</div>
<div class="t" style="left:1244px;top:545px;font-size:10px;letter-spacing:-0.45px;color:#fff;-webkit-text-stroke:0.25px #fff;letter-spacing:-0.2px">AUDUSD.s,H1&nbsp; 0.66734 0.66742 0.66511 0.66601</div>
<svg style="left:1232px;top:547px;" width="8" height="6" viewBox="0 0 8 6"><path d="M0 0.5 L7 0.5 L3.5 5Z" fill="#fff"/></svg>
<div class="a" style="left:510px;top:758px;width:1409px;height:1px;background:#fff"></div>
<div class="a" style="left:510px;top:759px;width:1409px;height:22px;background:#f0f0f0"></div>
<div class="a" style="left:510px;top:759px;width:1409px;height:2px;background:#222"></div>
<div class="a" style="left:720px;top:759px;width:99px;height:21px;background:#fff;border:1px solid #222;border-top:none"></div>
<div class="t" style="left:526px;top:764px;color:#555;letter-spacing:-0.5px">XAUUSD.s,M5</div>
<div class="a" style="left:619px;top:762px;width:1px;height:16px;background:#777"></div>
<div class="t" style="left:630px;top:764px;color:#555;letter-spacing:-0.5px">XAUUSD.s,H1</div>
<div class="t" style="left:730px;top:764px;letter-spacing:-0.5px">XAUUSD.s,H1</div>
<div class="t" style="left:829px;top:764px;color:#555;letter-spacing:-0.5px">AUDUSD.s,H1</div>
<div class="a" style="left:919px;top:762px;width:1px;height:16px;background:#777"></div>
<svg style="left:1888px;top:764px;" width="30" height="11" viewBox="0 0 30 11"><path d="M6.5 2 L2.5 5.5 L6.5 9Z" fill="#a8a8a8"/><path d="M22 2 L26 5.5 L22 9Z" fill="#a8a8a8"/></svg>
<div class="a" style="left:510px;top:780px;width:1409px;height:1px;background:#fff"></div>
<div class="a" style="left:19px;top:784px;width:1900px;height:1px;background:#b4b4b4"></div>
<div class="a" style="left:3px;top:20px;width:259px;height:429px;background:#fff;border:1px solid #8a8a8a;box-shadow:3px 3px 3px rgba(0,0,0,0.45)"></div>
<div class="a" style="left:4px;top:21px;width:26px;height:427px;background:#f1f1f1"></div>
<div class="a" style="left:30px;top:21px;width:1px;height:427px;background:#e3e3e3"></div>
<div class="a" style="left:38px;top:195px;width:221px;height:1px;background:#d7d7d7"></div>
<div class="a" style="left:38px;top:229px;width:221px;height:1px;background:#d7d7d7"></div>
<div class="a" style="left:38px;top:335px;width:221px;height:1px;background:#d7d7d7"></div>
<div class="a" style="left:38px;top:417px;width:221px;height:1px;background:#d7d7d7"></div>
<div class="a" style="left:6px;top:234px;width:253px;height:24px;background:#c5d9ec;border:1px solid #3d8ee0"></div>
<div class="t" style="left:38px;top:27px;font-size:13px">New Chart</div>
<svg style="left:9px;top:25px;" width="17" height="17" viewBox="0 0 17 17"><rect x="1.5" y="2.5" width="11" height="9" rx="1" fill="#fff" stroke="#3a80d0"/><path d="M4 5 L4 9" stroke="#999"/><path d="M11 7 L11 16 M6.5 11.5 L15.5 11.5" stroke="#20a020" stroke-width="3"/></svg>
<div class="t" style="left:38px;top:51px;font-size:13px">Open Offline</div>
<svg style="left:9px;top:49px;" width="17" height="17" viewBox="0 0 17 17"><path d="M1 6 L6 6 L7 4 L12 4 L12 14 L1 14Z" fill="#e8b830" stroke="#b08020"/><path d="M3 9 L16 9 L13 15 L1 15Z" fill="#f8e070" stroke="#b08020"/><path d="M9 3 Q13 0 15 4" stroke="#20a020" stroke-width="1.5" fill="none"/></svg>
<div class="t" style="left:38px;top:75px;font-size:13px">Open Deleted</div>
<svg style="left:247px;top:78px;" width="5" height="7" viewBox="0 0 5 7"><path d="M0 0 L4 3.5 L0 7Z" fill="#222"/></svg>
<div class="t" style="left:38px;top:99px;font-size:13px">Profiles</div>
<svg style="left:247px;top:102px;" width="5" height="7" viewBox="0 0 5 7"><path d="M0 0 L4 3.5 L0 7Z" fill="#222"/></svg>
<div class="t" style="left:38px;top:123px;font-size:13px">Close</div>
<div class="t" style="right:1672px;top:123px;font-size:13px">Ctrl+F4</div>
<div class="t" style="left:38px;top:147px;font-size:13px">Save As</div>
<div class="t" style="right:1672px;top:147px;font-size:13px">Ctrl+S</div>
<svg style="left:9px;top:145px;" width="17" height="17" viewBox="0 0 17 17"><rect x="1.5" y="1.5" width="13" height="13" rx="1" fill="#4a80c0" stroke="#2a5a90"/><rect x="4" y="2" width="8" height="5" fill="#e8eef8"/><rect x="4" y="10" width="8" height="4" fill="#c8d8e8"/></svg>
<div class="t" style="left:38px;top:171px;font-size:13px">Save As Picture...</div>
<svg style="left:9px;top:169px;" width="17" height="17" viewBox="0 0 17 17"><rect x="1.5" y="1.5" width="10" height="11" fill="#fff" stroke="#3a80d0"/><path d="M4 4 L4 9" stroke="#888"/><rect x="8" y="8" width="8" height="8" rx="1" fill="#4a80c0" stroke="#2a5a90"/></svg>
<div class="t" style="left:38px;top:205px;font-size:13px">Open Data Folder</div>
<svg style="left:9px;top:203px;" width="17" height="17" viewBox="0 0 17 17"><path d="M1 5 L6 5 L7 3 L12 3 L12 13 L1 13Z" fill="#e8b830" stroke="#b08020"/><path d="M3 8 L16 8 L13 14 L1 14Z" fill="#f8e070" stroke="#b08020"/></svg>
<div class="t" style="left:38px;top:239px;font-size:13px">Open an Account</div>
<svg style="left:9px;top:237px;" width="17" height="17" viewBox="0 0 17 17"><circle cx="6" cy="4" r="3" fill="#e8b838"/><path d="M1 14 Q1 8 6 8 Q11 8 11 14Z" fill="#40a040"/><path d="M12 8 L12 16 M8 12 L16 12" stroke="#20a020" stroke-width="3"/></svg>
<div class="t" style="left:38px;top:263px;font-size:13px">Login to Trade Account</div>
<svg style="left:9px;top:261px;" width="17" height="17" viewBox="0 0 17 17"><circle cx="6" cy="4" r="3" fill="#e8b838"/><path d="M1 14 Q1 8 6 8 Q11 8 11 14Z" fill="#40a040"/><path d="M7 12 L12 12 L12 9 L16 12.5 L12 16 L12 13" fill="#20b020" stroke="#108010"/></svg>
<div class="t" style="left:38px;top:287px;font-size:13px">Login to Web Trader</div>
<svg style="left:9px;top:285px;" width="17" height="17" viewBox="0 0 17 17"><circle cx="7" cy="7" r="6" fill="#5aa8e8" stroke="#2a70b0"/><path d="M3 5 Q6 3 8 6 Q7 9 4 9Z" fill="#60c060"/><path d="M7 12 L12 12 L12 9 L16 12.5 L12 16 L12 13" fill="#20b020" stroke="#108010"/></svg>
<div class="t" style="left:38px;top:311px;font-size:13px">Login to MQL5.community</div>
<svg style="left:9px;top:309px;" width="17" height="17" viewBox="0 0 17 17"><rect x="1" y="1" width="10" height="11" rx="1" fill="#4a6ab0"/><text x="6" y="10" font-size="9" fill="#fff" text-anchor="middle" font-family="Liberation Sans" font-weight="bold">5</text><path d="M7 12 L12 12 L12 9 L16 12.5 L12 16 L12 13" fill="#20b020" stroke="#108010"/></svg>
<div class="t" style="left:38px;top:346px;font-size:13px">Print Setup...</div>
<div class="t" style="left:38px;top:369px;font-size:13px">Print Preview</div>
<svg style="left:9px;top:367px;" width="17" height="17" viewBox="0 0 17 17"><rect x="1.5" y="1.5" width="12" height="12" fill="#f8e888" stroke="#b0a040"/><path d="M4 4 L4 9 M4 7 L10 7" stroke="#666"/><rect x="9" y="9" width="7" height="6" fill="#ddd" stroke="#888"/></svg>
<div class="t" style="left:38px;top:393px;font-size:13px">Print...</div>
<div class="t" style="right:1672px;top:393px;font-size:13px">Ctrl+P</div>
<svg style="left:9px;top:391px;" width="17" height="17" viewBox="0 0 17 17"><rect x="4" y="1.5" width="8" height="6" fill="#fff" stroke="#888"/><rect x="1.5" y="6.5" width="13" height="6" rx="1" fill="#ccc" stroke="#777"/><rect x="4" y="11" width="8" height="4" fill="#fff" stroke="#888"/></svg>
<div class="t" style="left:38px;top:427px;font-size:13px">Exit</div>
</body></html>
